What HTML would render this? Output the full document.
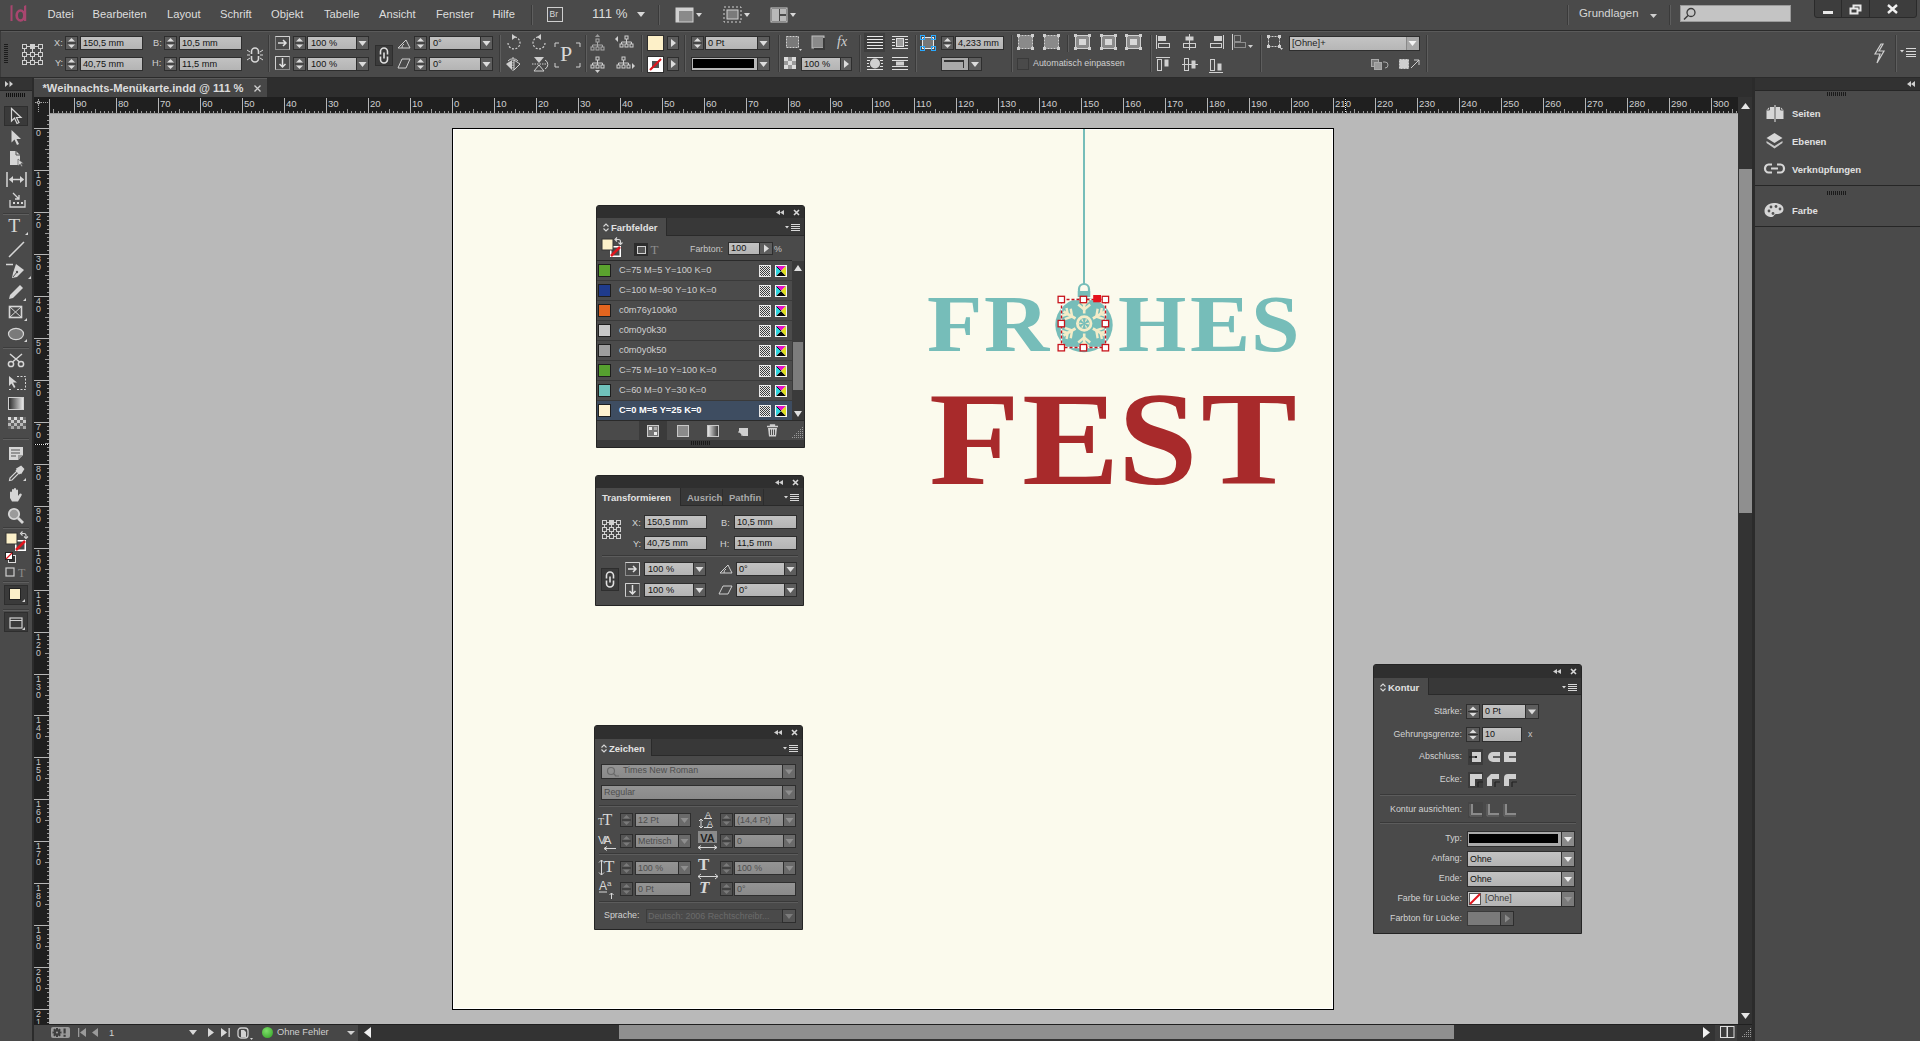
<!DOCTYPE html>
<html><head><meta charset="utf-8"><title>InDesign</title>
<style>
html,body{margin:0;padding:0;width:1920px;height:1041px;overflow:hidden;background:#4a4a4a;font-family:"Liberation Sans",sans-serif}
body>div{position:absolute}
svg{overflow:visible}
</style></head><body>
<div style="left:0px;top:0px;width:1920px;height:1041px;background:#4a4a4a"></div>
<div style="left:0px;top:0px;width:1920px;height:30px;background:#4a4a4a"></div>
<div style="left:0px;top:30px;width:1920px;height:1px;background:#2b2b2b"></div>
<svg style="position:absolute;left:9px;top:4px;" width="20" height="18" viewBox="0 0 20 18"><path d="M1.5 1.5L3.5 1V17H1.5Z" fill="#a8466f"/><ellipse cx="11.5" cy="11.5" rx="3.8" ry="5" fill="none" stroke="#a8466f" stroke-width="2.6"/><path d="M15 2L17.2 1V17H15Z" fill="#a8466f"/></svg>
<div style="left:47.5px;top:7.87px;font:normal 11.2px 'Liberation Sans', sans-serif;color:#dedede;white-space:nowrap;line-height:normal;">Datei</div>
<div style="left:92.5px;top:7.87px;font:normal 11.2px 'Liberation Sans', sans-serif;color:#dedede;white-space:nowrap;line-height:normal;">Bearbeiten</div>
<div style="left:167px;top:7.87px;font:normal 11.2px 'Liberation Sans', sans-serif;color:#dedede;white-space:nowrap;line-height:normal;">Layout</div>
<div style="left:220px;top:7.87px;font:normal 11.2px 'Liberation Sans', sans-serif;color:#dedede;white-space:nowrap;line-height:normal;">Schrift</div>
<div style="left:271px;top:7.87px;font:normal 11.2px 'Liberation Sans', sans-serif;color:#dedede;white-space:nowrap;line-height:normal;">Objekt</div>
<div style="left:324px;top:7.87px;font:normal 11.2px 'Liberation Sans', sans-serif;color:#dedede;white-space:nowrap;line-height:normal;">Tabelle</div>
<div style="left:379px;top:7.87px;font:normal 11.2px 'Liberation Sans', sans-serif;color:#dedede;white-space:nowrap;line-height:normal;">Ansicht</div>
<div style="left:436px;top:7.87px;font:normal 11.2px 'Liberation Sans', sans-serif;color:#dedede;white-space:nowrap;line-height:normal;">Fenster</div>
<div style="left:492.5px;top:7.87px;font:normal 11.2px 'Liberation Sans', sans-serif;color:#dedede;white-space:nowrap;line-height:normal;">Hilfe</div>
<div style="left:531px;top:5px;width:1px;height:20px;background:#3a3a3a"></div>
<div style="left:532px;top:5px;width:1px;height:20px;background:#5e5e5e"></div>
<div style="left:547px;top:7px;width:16px;height:15px;border:1px solid #cfcfcf;box-sizing:border-box"></div>
<div style="left:549.5px;top:9.15px;font:normal 8.5px 'Liberation Sans', sans-serif;color:#d8d8d8;white-space:nowrap;line-height:normal;">Br</div>
<div style="left:592px;top:6.13px;font:normal 13.2px 'Liberation Sans', sans-serif;color:#dcdcdc;white-space:nowrap;line-height:normal;">111 %</div>
<svg style="position:absolute;left:637px;top:12px;" width="8" height="6" viewBox="0 0 8 6"><path d="M0 0H8L4 5Z" fill="#d8d8d8"/></svg>
<div style="left:658px;top:5px;width:1px;height:20px;background:#3a3a3a"></div>
<div style="left:659px;top:5px;width:1px;height:20px;background:#5e5e5e"></div>
<svg style="position:absolute;left:675px;top:6px;" width="28" height="18" viewBox="0 0 28 18"><rect x="1" y="2" width="17" height="14" fill="#8a8a8a" stroke="#d0d0d0"/><rect x="1" y="2" width="17" height="3" fill="#d0d0d0"/><rect x="1" y="2" width="3" height="14" fill="#d0d0d0"/><path d="M21 7H27L24 11Z" fill="#d8d8d8"/></svg>
<svg style="position:absolute;left:723px;top:6px;" width="28" height="18" viewBox="0 0 28 18"><rect x="1" y="1" width="17" height="15" fill="none" stroke="#d0d0d0" stroke-dasharray="2 2"/><rect x="4" y="4" width="11" height="9" fill="#7a7a7a" stroke="#d0d0d0"/><path d="M21 7H27L24 11Z" fill="#d8d8d8"/></svg>
<svg style="position:absolute;left:770px;top:6px;" width="28" height="18" viewBox="0 0 28 18"><rect x="1" y="2" width="16" height="14" fill="none" stroke="#d0d0d0"/><rect x="2" y="3" width="7" height="12" fill="#b8b8b8"/><rect x="10" y="3" width="6" height="5" fill="#b8b8b8"/><rect x="10" y="10" width="6" height="5" fill="#b8b8b8"/><path d="M20 7H26L23 11Z" fill="#d8d8d8"/></svg>
<div style="left:1567px;top:5px;width:1px;height:20px;background:#3a3a3a"></div>
<div style="left:1568px;top:5px;width:1px;height:20px;background:#5e5e5e"></div>
<div style="left:1579px;top:6.92px;font:normal 11.4px 'Liberation Sans', sans-serif;color:#d6d6d6;white-space:nowrap;line-height:normal;">Grundlagen</div>
<svg style="position:absolute;left:1650px;top:14px;" width="7" height="4" viewBox="0 0 7 4"><path d="M0 0H7L3.5 4Z" fill="#d0d0d0"/></svg>
<div style="left:1669px;top:5px;width:1px;height:20px;background:#3a3a3a"></div>
<div style="left:1670px;top:5px;width:1px;height:20px;background:#5e5e5e"></div>
<div style="left:1680px;top:5px;width:111px;height:17px;background:#c4c4c4;border:1px solid #9a9a9a;box-sizing:border-box"></div>
<svg style="position:absolute;left:1683px;top:7px;" width="14" height="14" viewBox="0 0 14 14"><circle cx="8" cy="5.5" r="4" fill="none" stroke="#3a3a3a" stroke-width="1.3"/><path d="M5 8.5L1 12.5" stroke="#3a3a3a" stroke-width="1.5"/></svg>
<div style="left:1814px;top:-3px;width:103px;height:21px;background:#3d3d3d;border:1px solid #2a2a2a;border-radius:3px;box-sizing:border-box"></div>
<div style="left:1841px;top:-3px;width:1px;height:21px;background:#2a2a2a"></div>
<div style="left:1869px;top:-3px;width:1px;height:21px;background:#2a2a2a"></div>
<div style="left:1823px;top:11px;width:10px;height:3px;background:#e8e8e8"></div>
<svg style="position:absolute;left:1849px;top:4px;" width="13" height="11" viewBox="0 0 13 11"><rect x="4.5" y="1.5" width="7" height="5" fill="none" stroke="#e8e8e8" stroke-width="2"/><rect x="1.5" y="4.5" width="7" height="5" fill="#3d3d3d" stroke="#e8e8e8" stroke-width="2"/></svg>
<svg style="position:absolute;left:1887px;top:4px;" width="11" height="10" viewBox="0 0 11 10"><path d="M1 1L10 9M10 1L1 9" stroke="#f0f0f0" stroke-width="2.4"/></svg>
<div style="left:0px;top:31px;width:1920px;height:46px;background:#4a4a4a"></div>
<div style="left:0px;top:31px;width:1920px;height:1px;background:#5a5a5a"></div>
<div style="left:0px;top:77px;width:1920px;height:1px;background:#2b2b2b"></div>
<div style="left:0px;top:31px;width:1px;height:46px;background:#3a3a3a"></div>
<svg style="position:absolute;left:4px;top:44px;" width="4" height="19" viewBox="0 0 4 19"><rect x="0" y="0" width="4" height="1" fill="#1c1c1c"/><rect x="0" y="2" width="4" height="1" fill="#1c1c1c"/><rect x="0" y="4" width="4" height="1" fill="#1c1c1c"/><rect x="0" y="6" width="4" height="1" fill="#1c1c1c"/><rect x="0" y="8" width="4" height="1" fill="#1c1c1c"/><rect x="0" y="10" width="4" height="1" fill="#1c1c1c"/><rect x="0" y="12" width="4" height="1" fill="#1c1c1c"/><rect x="0" y="14" width="4" height="1" fill="#1c1c1c"/><rect x="0" y="16" width="4" height="1" fill="#1c1c1c"/><rect x="0" y="18" width="4" height="1" fill="#1c1c1c"/></svg>
<svg style="position:absolute;left:22px;top:44px;" width="21" height="21" viewBox="0 0 21 21"><rect x="0.5" y="0.5" width="4" height="4" fill="none" stroke="#d0d0d0"/><rect x="0.5" y="8.5" width="4" height="4" fill="none" stroke="#d0d0d0"/><rect x="0.5" y="16.5" width="4" height="4" fill="none" stroke="#d0d0d0"/><rect x="8.5" y="0.5" width="4" height="4" fill="#d0d0d0" stroke="#d0d0d0"/><rect x="8.5" y="8.5" width="4" height="4" fill="none" stroke="#d0d0d0"/><rect x="8.5" y="16.5" width="4" height="4" fill="none" stroke="#d0d0d0"/><rect x="16.5" y="0.5" width="4" height="4" fill="none" stroke="#d0d0d0"/><rect x="16.5" y="8.5" width="4" height="4" fill="none" stroke="#d0d0d0"/><rect x="16.5" y="16.5" width="4" height="4" fill="none" stroke="#d0d0d0"/><path d="M4.5 2.5H8.5M12.5 2.5H16.5" stroke="#d0d0d0"/><path d="M4.5 10.5H8.5M12.5 10.5H16.5" stroke="#d0d0d0"/><path d="M4.5 18.5H8.5M12.5 18.5H16.5" stroke="#d0d0d0"/><path d="M2.5 4.5V8.5M2.5 12.5V16.5" stroke="#d0d0d0"/><path d="M10.5 4.5V8.5M10.5 12.5V16.5" stroke="#d0d0d0"/><path d="M18.5 4.5V8.5M18.5 12.5V16.5" stroke="#d0d0d0"/></svg>
<div style="left:54px;top:37.50px;font:normal 9.2px 'Liberation Sans', sans-serif;color:#d0d0d0;white-space:nowrap;line-height:normal;">X:</div>
<div style="left:55px;top:58.00px;font:normal 9.2px 'Liberation Sans', sans-serif;color:#d0d0d0;white-space:nowrap;line-height:normal;">Y:</div>
<div style="left:65px;top:36px;width:13px;height:14px;background:#5d5d5d;border:1px solid #2e2e2e;box-sizing:border-box"></div>
<svg style="position:absolute;left:65px;top:36px;" width="13" height="14" viewBox="0 0 13 14"><path d="M3.0 5.5L6.5 2.0L10.0 5.5Z" fill="#dcdcdc"/><path d="M3.0 8.5L6.5 12.0L10.0 8.5Z" fill="#dcdcdc"/><path d="M2 7.0H11" stroke="#2e2e2e"/></svg>
<div style="left:65px;top:57px;width:13px;height:14px;background:#5d5d5d;border:1px solid #2e2e2e;box-sizing:border-box"></div>
<svg style="position:absolute;left:65px;top:57px;" width="13" height="14" viewBox="0 0 13 14"><path d="M3.0 5.5L6.5 2.0L10.0 5.5Z" fill="#dcdcdc"/><path d="M3.0 8.5L6.5 12.0L10.0 8.5Z" fill="#dcdcdc"/><path d="M2 7.0H11" stroke="#2e2e2e"/></svg>
<div style="left:80px;top:36px;width:63px;height:14px;background:linear-gradient(#c2c2c2,#b4b4b4);border:1px solid #2e2e2e;box-sizing:border-box"></div>
<div style="left:83px;top:37.54px;font:normal 9.2px 'Liberation Sans', sans-serif;color:#121212;white-space:nowrap;line-height:normal;">150,5 mm</div>
<div style="left:80px;top:57px;width:63px;height:14px;background:linear-gradient(#c2c2c2,#b4b4b4);border:1px solid #2e2e2e;box-sizing:border-box"></div>
<div style="left:83px;top:58.54px;font:normal 9.2px 'Liberation Sans', sans-serif;color:#121212;white-space:nowrap;line-height:normal;">40,75 mm</div>
<div style="left:153px;top:37.50px;font:normal 9.2px 'Liberation Sans', sans-serif;color:#d0d0d0;white-space:nowrap;line-height:normal;">B:</div>
<div style="left:152px;top:58.00px;font:normal 9.2px 'Liberation Sans', sans-serif;color:#d0d0d0;white-space:nowrap;line-height:normal;">H:</div>
<div style="left:164px;top:36px;width:13px;height:14px;background:#5d5d5d;border:1px solid #2e2e2e;box-sizing:border-box"></div>
<svg style="position:absolute;left:164px;top:36px;" width="13" height="14" viewBox="0 0 13 14"><path d="M3.0 5.5L6.5 2.0L10.0 5.5Z" fill="#dcdcdc"/><path d="M3.0 8.5L6.5 12.0L10.0 8.5Z" fill="#dcdcdc"/><path d="M2 7.0H11" stroke="#2e2e2e"/></svg>
<div style="left:164px;top:57px;width:13px;height:14px;background:#5d5d5d;border:1px solid #2e2e2e;box-sizing:border-box"></div>
<svg style="position:absolute;left:164px;top:57px;" width="13" height="14" viewBox="0 0 13 14"><path d="M3.0 5.5L6.5 2.0L10.0 5.5Z" fill="#dcdcdc"/><path d="M3.0 8.5L6.5 12.0L10.0 8.5Z" fill="#dcdcdc"/><path d="M2 7.0H11" stroke="#2e2e2e"/></svg>
<div style="left:179px;top:36px;width:63px;height:14px;background:linear-gradient(#c2c2c2,#b4b4b4);border:1px solid #2e2e2e;box-sizing:border-box"></div>
<div style="left:182px;top:37.54px;font:normal 9.2px 'Liberation Sans', sans-serif;color:#121212;white-space:nowrap;line-height:normal;">10,5 mm</div>
<div style="left:179px;top:57px;width:63px;height:14px;background:linear-gradient(#c2c2c2,#b4b4b4);border:1px solid #2e2e2e;box-sizing:border-box"></div>
<div style="left:182px;top:58.54px;font:normal 9.2px 'Liberation Sans', sans-serif;color:#121212;white-space:nowrap;line-height:normal;">11,5 mm</div>
<svg style="position:absolute;left:247px;top:47px;" width="16" height="16" viewBox="0 0 16 16"><path d="M4.5 7V4.5A3.5 3.5 0 0 1 11.5 4.5V7M4.5 9V11.5A3.5 3.5 0 0 0 11.5 11.5V9" fill="none" stroke="#d8d8d8" stroke-width="1.6"/><path d="M0 3L3 5M0 13L3 11M16 3L13 5M16 13L13 11M0 8H3M13 8H16" stroke="#d8d8d8"/></svg>
<div style="left:268px;top:35px;width:1px;height:37px;background:#3a3a3a"></div>
<div style="left:269px;top:35px;width:1px;height:37px;background:#5e5e5e"></div>
<svg style="position:absolute;left:275px;top:36px;" width="15" height="14" viewBox="0 0 15 14"><rect x="0.5" y="0.5" width="14" height="13" fill="none" stroke="#d0d0d0" stroke-dasharray="1 1"/><path d="M0.5 0.5H14.5V13.5" fill="none" stroke="#d0d0d0"/><path d="M3 7H11M8 4L11 7L8 10" stroke="#e0e0e0" stroke-width="1.5" fill="none"/></svg>
<svg style="position:absolute;left:275px;top:56px;" width="15" height="14" viewBox="0 0 15 14"><rect x="0.5" y="0.5" width="14" height="13" fill="none" stroke="#d0d0d0" stroke-dasharray="1 1"/><path d="M0.5 13.5V0.5H14.5" fill="none" stroke="#d0d0d0"/><path d="M7.5 2V11M4.5 8L7.5 11L10.5 8" stroke="#e0e0e0" stroke-width="1.5" fill="none"/></svg>
<div style="left:293px;top:36px;width:13px;height:14px;background:#5d5d5d;border:1px solid #2e2e2e;box-sizing:border-box"></div>
<svg style="position:absolute;left:293px;top:36px;" width="13" height="14" viewBox="0 0 13 14"><path d="M3.0 5.5L6.5 2.0L10.0 5.5Z" fill="#dcdcdc"/><path d="M3.0 8.5L6.5 12.0L10.0 8.5Z" fill="#dcdcdc"/><path d="M2 7.0H11" stroke="#2e2e2e"/></svg>
<div style="left:293px;top:57px;width:13px;height:14px;background:#5d5d5d;border:1px solid #2e2e2e;box-sizing:border-box"></div>
<svg style="position:absolute;left:293px;top:57px;" width="13" height="14" viewBox="0 0 13 14"><path d="M3.0 5.5L6.5 2.0L10.0 5.5Z" fill="#dcdcdc"/><path d="M3.0 8.5L6.5 12.0L10.0 8.5Z" fill="#dcdcdc"/><path d="M2 7.0H11" stroke="#2e2e2e"/></svg>
<div style="left:307px;top:36px;width:50px;height:14px;background:linear-gradient(#c2c2c2,#b4b4b4);border:1px solid #2e2e2e;box-sizing:border-box"></div>
<div style="left:311px;top:37.54px;font:normal 9.2px 'Liberation Sans', sans-serif;color:#121212;white-space:nowrap;line-height:normal;">100 %</div>
<div style="left:356px;top:36px;width:13px;height:14px;background:#5d5d5d;border:1px solid #2e2e2e;box-sizing:border-box"></div>
<svg style="position:absolute;left:356px;top:36px;" width="13" height="14" viewBox="0 0 13 14"><path d="M2.5 5.0H10.5L6.5 10.0Z" fill="#dcdcdc"/></svg>
<div style="left:307px;top:57px;width:50px;height:14px;background:linear-gradient(#c2c2c2,#b4b4b4);border:1px solid #2e2e2e;box-sizing:border-box"></div>
<div style="left:311px;top:58.54px;font:normal 9.2px 'Liberation Sans', sans-serif;color:#121212;white-space:nowrap;line-height:normal;">100 %</div>
<div style="left:356px;top:57px;width:13px;height:14px;background:#5d5d5d;border:1px solid #2e2e2e;box-sizing:border-box"></div>
<svg style="position:absolute;left:356px;top:57px;" width="13" height="14" viewBox="0 0 13 14"><path d="M2.5 5.0H10.5L6.5 10.0Z" fill="#dcdcdc"/></svg>
<div style="left:375px;top:45px;width:18px;height:21px;background:#3b3b3b;border:1px solid #2e2e2e;box-sizing:border-box"></div>
<svg style="position:absolute;left:375px;top:45px;" width="18" height="21" viewBox="0 0 18 21"><path d="M5.5 9.5V6.5A3.5 3.5 0 0 1 12.5 6.5V9.5M5.5 11.5V14.5A3.5 3.5 0 0 0 12.5 14.5V11.5M9 7.5V13.5" fill="none" stroke="#e0e0e0" stroke-width="1.6"/></svg>
<svg style="position:absolute;left:397px;top:38px;" width="14" height="11" viewBox="0 0 14 11"><path d="M1 10H13L9 2Z" fill="none" stroke="#d0d0d0"/><path d="M5 10A4 4 0 0 1 7 6" fill="none" stroke="#d0d0d0"/></svg>
<svg style="position:absolute;left:397px;top:58px;" width="14" height="11" viewBox="0 0 14 11"><path d="M1 10L5 1H13L9 10Z" fill="none" stroke="#d0d0d0"/></svg>
<div style="left:414px;top:36px;width:13px;height:14px;background:#5d5d5d;border:1px solid #2e2e2e;box-sizing:border-box"></div>
<svg style="position:absolute;left:414px;top:36px;" width="13" height="14" viewBox="0 0 13 14"><path d="M3.0 5.5L6.5 2.0L10.0 5.5Z" fill="#dcdcdc"/><path d="M3.0 8.5L6.5 12.0L10.0 8.5Z" fill="#dcdcdc"/><path d="M2 7.0H11" stroke="#2e2e2e"/></svg>
<div style="left:414px;top:57px;width:13px;height:14px;background:#5d5d5d;border:1px solid #2e2e2e;box-sizing:border-box"></div>
<svg style="position:absolute;left:414px;top:57px;" width="13" height="14" viewBox="0 0 13 14"><path d="M3.0 5.5L6.5 2.0L10.0 5.5Z" fill="#dcdcdc"/><path d="M3.0 8.5L6.5 12.0L10.0 8.5Z" fill="#dcdcdc"/><path d="M2 7.0H11" stroke="#2e2e2e"/></svg>
<div style="left:429px;top:36px;width:52px;height:14px;background:linear-gradient(#c2c2c2,#b4b4b4);border:1px solid #2e2e2e;box-sizing:border-box"></div>
<div style="left:433px;top:37.54px;font:normal 9.2px 'Liberation Sans', sans-serif;color:#121212;white-space:nowrap;line-height:normal;">0°</div>
<div style="left:480px;top:36px;width:13px;height:14px;background:#5d5d5d;border:1px solid #2e2e2e;box-sizing:border-box"></div>
<svg style="position:absolute;left:480px;top:36px;" width="13" height="14" viewBox="0 0 13 14"><path d="M2.5 5.0H10.5L6.5 10.0Z" fill="#dcdcdc"/></svg>
<div style="left:429px;top:57px;width:52px;height:14px;background:linear-gradient(#c2c2c2,#b4b4b4);border:1px solid #2e2e2e;box-sizing:border-box"></div>
<div style="left:433px;top:58.54px;font:normal 9.2px 'Liberation Sans', sans-serif;color:#121212;white-space:nowrap;line-height:normal;">0°</div>
<div style="left:480px;top:57px;width:13px;height:14px;background:#5d5d5d;border:1px solid #2e2e2e;box-sizing:border-box"></div>
<svg style="position:absolute;left:480px;top:57px;" width="13" height="14" viewBox="0 0 13 14"><path d="M2.5 5.0H10.5L6.5 10.0Z" fill="#dcdcdc"/></svg>
<div style="left:499px;top:35px;width:1px;height:37px;background:#3a3a3a"></div>
<div style="left:500px;top:35px;width:1px;height:37px;background:#5e5e5e"></div>
<svg style="position:absolute;left:505px;top:34px;" width="17" height="16" viewBox="0 0 17 16"><path d="M3 9A6 6 0 1 0 8 3" fill="none" stroke="#cfcfcf" stroke-dasharray="2 1.5" stroke-width="1.2"/><path d="M7 0L11 3L7 6Z" fill="#cfcfcf"/></svg>
<svg style="position:absolute;left:531px;top:34px;" width="17" height="16" viewBox="0 0 17 16"><path d="M14 9A6 6 0 1 1 9 3" fill="none" stroke="#cfcfcf" stroke-dasharray="2 1.5" stroke-width="1.2"/><path d="M10 0L6 3L10 6Z" fill="#cfcfcf"/></svg>
<svg style="position:absolute;left:505px;top:56px;" width="17" height="17" viewBox="0 0 17 17"><path d="M8 1V16" stroke="#cfcfcf" stroke-dasharray="1.5 1"/><path d="M1 8L7 4V14Z" fill="#cfcfcf"/><path d="M15 8L9 4V14Z" fill="none" stroke="#cfcfcf"/><path d="M3 5A6 5 0 0 1 13 5" fill="none" stroke="#cfcfcf"/></svg>
<svg style="position:absolute;left:531px;top:56px;" width="17" height="17" viewBox="0 0 17 17"><path d="M1 8H16" stroke="#cfcfcf" stroke-dasharray="1.5 1"/><path d="M3 1H13L8 7Z" fill="#cfcfcf"/><path d="M3 15H13L8 9Z" fill="none" stroke="#cfcfcf"/><path d="M14 4A5 5 0 0 1 14 13" fill="none" stroke="#cfcfcf"/></svg>
<svg style="position:absolute;left:554px;top:42px;" width="27" height="26" viewBox="0 0 27 26"><path d="M1 5V1H5M22 1H26V5M1 21V25H5M22 25H26V21" fill="none" stroke="#d0d0d0"/></svg>
<div style="left:560px;top:40.72px;font:normal 22px 'Liberation Serif', serif;color:#d8d8d8;white-space:nowrap;line-height:normal;">P</div>
<div style="left:585px;top:35px;width:1px;height:37px;background:#3a3a3a"></div>
<div style="left:586px;top:35px;width:1px;height:37px;background:#5e5e5e"></div>
<svg style="position:absolute;left:590px;top:34px;" width="16" height="18" viewBox="0 0 16 18"><path d="M5 3H10L7.5 0Z" fill="#9a9a9a"/><rect x="6" y="5" width="3" height="3" fill="none" stroke="#aaa"/><path d="M7.5 8V10M2.5 13V11H12.5V13M7.5 10V13" stroke="#aaa" fill="none"/><rect x="1" y="13" width="3" height="3" fill="none" stroke="#aaa"/><rect x="6" y="13" width="3" height="3" fill="none" stroke="#aaa"/><rect x="11" y="13" width="3" height="3" fill="none" stroke="#aaa"/></svg>
<svg style="position:absolute;left:615px;top:35px;" width="21" height="15" viewBox="0 0 21 15"><path d="M0 4L3 1V7Z" fill="#cfcfcf"/><rect x="10" y="1" width="3" height="3" fill="none" stroke="#cfcfcf"/><path d="M11.5 4V6M6.5 9V7H16.5V9M11.5 6V9" stroke="#cfcfcf" fill="none"/><rect x="5" y="9" width="3" height="3" fill="none" stroke="#cfcfcf"/><rect x="10" y="9" width="3" height="3" fill="none" stroke="#cfcfcf"/><rect x="15" y="9" width="3" height="3" fill="none" stroke="#cfcfcf"/></svg>
<svg style="position:absolute;left:590px;top:56px;" width="16" height="18" viewBox="0 0 16 18"><rect x="6" y="1" width="3" height="3" fill="none" stroke="#cfcfcf"/><path d="M7.5 4V6M2.5 9V7H12.5V9M7.5 6V9" stroke="#cfcfcf" fill="none"/><rect x="1" y="9" width="3" height="3" fill="none" stroke="#cfcfcf"/><rect x="6" y="9" width="3" height="3" fill="none" stroke="#cfcfcf"/><rect x="11" y="9" width="3" height="3" fill="none" stroke="#cfcfcf"/><path d="M5 14H10L7.5 17Z" fill="#cfcfcf"/></svg>
<svg style="position:absolute;left:615px;top:56px;" width="21" height="15" viewBox="0 0 21 15"><rect x="7" y="1" width="3" height="3" fill="none" stroke="#cfcfcf"/><path d="M8.5 4V6M3.5 9V7H13.5V9M8.5 6V9" stroke="#cfcfcf" fill="none"/><rect x="2" y="9" width="3" height="3" fill="none" stroke="#cfcfcf"/><rect x="7" y="9" width="3" height="3" fill="none" stroke="#cfcfcf"/><rect x="12" y="9" width="3" height="3" fill="none" stroke="#cfcfcf"/><path d="M17 7L20 10L17 13Z" fill="#cfcfcf"/></svg>
<div style="left:641px;top:35px;width:1px;height:37px;background:#3a3a3a"></div>
<div style="left:642px;top:35px;width:1px;height:37px;background:#5e5e5e"></div>
<div style="left:647px;top:35px;width:17px;height:16px;background:#fdf0c8;border:1px solid #2e2e2e;box-sizing:border-box"></div>
<div style="left:667px;top:36px;width:12px;height:14px;background:#5d5d5d;border:1px solid #2e2e2e;box-sizing:border-box"></div>
<svg style="position:absolute;left:667px;top:36px;" width="12" height="14" viewBox="0 0 12 14"><path d="M4.0 3.0V11.0L9.0 7.0Z" fill="#dcdcdc"/></svg>
<div style="left:647px;top:56px;width:17px;height:17px;background:#fff;border:1px solid #2e2e2e;box-sizing:border-box"></div>
<svg style="position:absolute;left:647px;top:56px;" width="17" height="17" viewBox="0 0 17 17"><rect x="5" y="5" width="7" height="7" fill="#555"/><path d="M3 14L14 3" stroke="#e0161e" stroke-width="2.2"/></svg>
<div style="left:667px;top:57px;width:12px;height:14px;background:#5d5d5d;border:1px solid #2e2e2e;box-sizing:border-box"></div>
<svg style="position:absolute;left:667px;top:57px;" width="12" height="14" viewBox="0 0 12 14"><path d="M4.0 3.0V11.0L9.0 7.0Z" fill="#dcdcdc"/></svg>
<div style="left:684px;top:35px;width:1px;height:37px;background:#3a3a3a"></div>
<div style="left:685px;top:35px;width:1px;height:37px;background:#5e5e5e"></div>
<div style="left:691px;top:36px;width:13px;height:14px;background:#5d5d5d;border:1px solid #2e2e2e;box-sizing:border-box"></div>
<svg style="position:absolute;left:691px;top:36px;" width="13" height="14" viewBox="0 0 13 14"><path d="M3.0 5.5L6.5 2.0L10.0 5.5Z" fill="#dcdcdc"/><path d="M3.0 8.5L6.5 12.0L10.0 8.5Z" fill="#dcdcdc"/><path d="M2 7.0H11" stroke="#2e2e2e"/></svg>
<div style="left:705px;top:36px;width:53px;height:14px;background:linear-gradient(#c2c2c2,#b4b4b4);border:1px solid #2e2e2e;box-sizing:border-box"></div>
<div style="left:708px;top:37.54px;font:normal 9.2px 'Liberation Sans', sans-serif;color:#121212;white-space:nowrap;line-height:normal;">0 Pt</div>
<div style="left:757px;top:36px;width:13px;height:14px;background:#5d5d5d;border:1px solid #2e2e2e;box-sizing:border-box"></div>
<svg style="position:absolute;left:757px;top:36px;" width="13" height="14" viewBox="0 0 13 14"><path d="M2.5 5.0H10.5L6.5 10.0Z" fill="#dcdcdc"/></svg>
<div style="left:691px;top:57px;width:67px;height:14px;background:#b8b8b8;border:1px solid #2e2e2e;box-sizing:border-box"></div>
<div style="left:693px;top:59px;width:61px;height:9px;background:#000"></div>
<div style="left:757px;top:57px;width:13px;height:14px;background:#5d5d5d;border:1px solid #2e2e2e;box-sizing:border-box"></div>
<svg style="position:absolute;left:757px;top:57px;" width="13" height="14" viewBox="0 0 13 14"><path d="M2.5 5.0H10.5L6.5 10.0Z" fill="#dcdcdc"/></svg>
<div style="left:778px;top:35px;width:1px;height:37px;background:#3a3a3a"></div>
<div style="left:779px;top:35px;width:1px;height:37px;background:#5e5e5e"></div>
<svg style="position:absolute;left:785px;top:35px;" width="18" height="16" viewBox="0 0 18 16"><rect x="1.5" y="1.5" width="12" height="11" fill="#7a7a7a" stroke="#d0d0d0" stroke-dasharray="2 1"/><path d="M14 14H17L15.5 16Z" fill="#d0d0d0"/></svg>
<svg style="position:absolute;left:811px;top:35px;" width="16" height="16" viewBox="0 0 16 16"><rect x="1" y="1" width="12" height="12" fill="#8a8a8a" stroke="#c0c0c0"/><path d="M13 3V14H3" stroke="#3a3a3a" stroke-width="2" fill="none"/></svg>
<div style="left:837px;top:34.46px;font:normal 14px 'Liberation Serif', serif;color:#d0d0d0;white-space:nowrap;line-height:normal;"><i>fx</i></div>
<svg style="position:absolute;left:784px;top:57px;" width="12" height="12" viewBox="0 0 12 12"><rect x="0" y="0" width="12" height="12" fill="#9a9a9a"/><rect x="0" y="0" width="4" height="4" fill="#dcdcdc"/><rect x="8" y="0" width="4" height="4" fill="#dcdcdc"/><rect x="4" y="4" width="4" height="4" fill="#dcdcdc"/><rect x="0" y="8" width="4" height="4" fill="#dcdcdc"/><rect x="8" y="8" width="4" height="4" fill="#dcdcdc"/></svg>
<div style="left:801px;top:57px;width:40px;height:14px;background:linear-gradient(#c2c2c2,#b4b4b4);border:1px solid #2e2e2e;box-sizing:border-box"></div>
<div style="left:804px;top:58.54px;font:normal 9.2px 'Liberation Sans', sans-serif;color:#121212;white-space:nowrap;line-height:normal;">100 %</div>
<div style="left:840px;top:57px;width:12px;height:14px;background:#5d5d5d;border:1px solid #2e2e2e;box-sizing:border-box"></div>
<svg style="position:absolute;left:840px;top:57px;" width="12" height="14" viewBox="0 0 12 14"><path d="M4.0 3.0V11.0L9.0 7.0Z" fill="#dcdcdc"/></svg>
<div style="left:859px;top:35px;width:1px;height:37px;background:#3a3a3a"></div>
<div style="left:860px;top:35px;width:1px;height:37px;background:#5e5e5e"></div>
<div style="left:864px;top:33px;width:21px;height:19px;background:#3e3e3e"></div>
<svg style="position:absolute;left:866px;top:35px;" width="18" height="15" viewBox="0 0 18 15"><path d="M1 1.5H17M1 4.5H17M1 7.5H17M1 10.5H17M1 13.5H17" stroke="#e8e8e8"/></svg>
<svg style="position:absolute;left:891px;top:35px;" width="18" height="15" viewBox="0 0 18 15"><path d="M1 1.5H17M1 13.5H17M1 4.5H4M14 4.5H17M1 7.5H4M14 7.5H17M1 10.5H4M14 10.5H17" stroke="#e0e0e0"/><rect x="5.5" y="3.5" width="7" height="8" fill="#9a9a9a" stroke="#e0e0e0"/></svg>
<svg style="position:absolute;left:866px;top:56px;" width="18" height="15" viewBox="0 0 18 15"><path d="M1 1.5H17M1 13.5H17M1 4.5H4M14 4.5H17M1 7.5H3M15 7.5H17M1 10.5H4M14 10.5H17" stroke="#e0e0e0"/><ellipse cx="9" cy="7.5" rx="5" ry="5" fill="#d0d0d0"/></svg>
<svg style="position:absolute;left:891px;top:56px;" width="18" height="15" viewBox="0 0 18 15"><path d="M1 1.5H17M1 13.5H17M1 4.5H17M1 10.5H17" stroke="#e0e0e0"/><rect x="5" y="5.5" width="8" height="4" fill="#d0d0d0"/></svg>
<div style="left:915px;top:35px;width:1px;height:37px;background:#3a3a3a"></div>
<div style="left:916px;top:35px;width:1px;height:37px;background:#5e5e5e"></div>
<svg style="position:absolute;left:920px;top:35px;" width="16" height="16" viewBox="0 0 16 16"><rect x="2.5" y="2.5" width="11" height="11" fill="#777" stroke="#e8e8e8"/><rect x="0.5" y="0.5" width="4" height="4" fill="none" stroke="#2aa9ff"/><rect x="11.5" y="0.5" width="4" height="4" fill="none" stroke="#2aa9ff"/><rect x="0.5" y="11.5" width="4" height="4" fill="none" stroke="#2aa9ff"/><rect x="11.5" y="11.5" width="4" height="4" fill="none" stroke="#2aa9ff"/></svg>
<div style="left:941px;top:36px;width:13px;height:14px;background:#5d5d5d;border:1px solid #2e2e2e;box-sizing:border-box"></div>
<svg style="position:absolute;left:941px;top:36px;" width="13" height="14" viewBox="0 0 13 14"><path d="M3.0 5.5L6.5 2.0L10.0 5.5Z" fill="#dcdcdc"/><path d="M3.0 8.5L6.5 12.0L10.0 8.5Z" fill="#dcdcdc"/><path d="M2 7.0H11" stroke="#2e2e2e"/></svg>
<div style="left:955px;top:36px;width:49px;height:14px;background:linear-gradient(#c2c2c2,#b4b4b4);border:1px solid #2e2e2e;box-sizing:border-box"></div>
<div style="left:958px;top:37.54px;font:normal 9.2px 'Liberation Sans', sans-serif;color:#121212;white-space:nowrap;line-height:normal;">4,233 mm</div>
<div style="left:941px;top:57px;width:28px;height:14px;background:#a9a9a9;border:1px solid #2e2e2e;box-sizing:border-box"></div>
<div style="left:944px;top:60px;width:20px;height:1.5px;background:#333"></div>
<div style="left:962.5px;top:60px;width:1.5px;height:8px;background:#333"></div>
<div style="left:968px;top:57px;width:14px;height:14px;background:#5d5d5d;border:1px solid #2e2e2e;box-sizing:border-box"></div>
<svg style="position:absolute;left:968px;top:57px;" width="14" height="14" viewBox="0 0 14 14"><path d="M3.0 5.0H11.0L7.0 10.0Z" fill="#dcdcdc"/></svg>
<div style="left:1011px;top:35px;width:1px;height:37px;background:#3a3a3a"></div>
<div style="left:1012px;top:35px;width:1px;height:37px;background:#5e5e5e"></div>
<svg style="position:absolute;left:1017px;top:34px;" width="17" height="16" viewBox="0 0 17 16"><rect x="1.5" y="1.5" width="14" height="13" fill="#8a8a8a" stroke="#d0d0d0" stroke-dasharray="2 1"/><rect x="0" y="0" width="3" height="3" fill="#d0d0d0"/><rect x="14" y="0" width="3" height="3" fill="#d0d0d0"/><rect x="0" y="13" width="3" height="3" fill="#d0d0d0"/><rect x="14" y="13" width="3" height="3" fill="#d0d0d0"/></svg>
<svg style="position:absolute;left:1043px;top:34px;" width="17" height="16" viewBox="0 0 17 16"><rect x="1.5" y="1.5" width="14" height="13" fill="#8a8a8a" stroke="#d0d0d0" stroke-dasharray="2 1"/><rect x="0" y="0" width="3" height="3" fill="#d0d0d0"/><rect x="14" y="0" width="3" height="3" fill="#d0d0d0"/><rect x="0" y="13" width="3" height="3" fill="#d0d0d0"/><rect x="14" y="13" width="3" height="3" fill="#d0d0d0"/></svg>
<div style="left:1067px;top:35px;width:1px;height:17px;background:#3a3a3a"></div>
<div style="left:1068px;top:35px;width:1px;height:17px;background:#5e5e5e"></div>
<svg style="position:absolute;left:1074px;top:34px;" width="17" height="16" viewBox="0 0 17 16"><rect x="1.5" y="1.5" width="14" height="13" fill="#8a8a8a" stroke="#d0d0d0"/><rect x="0" y="0" width="3" height="3" fill="#d0d0d0"/><rect x="14" y="0" width="3" height="3" fill="#d0d0d0"/><rect x="0" y="13" width="3" height="3" fill="#d0d0d0"/><rect x="14" y="13" width="3" height="3" fill="#d0d0d0"/><rect x="5" y="5" width="7" height="6" fill="#d8d8d8"/></svg>
<svg style="position:absolute;left:1100px;top:34px;" width="17" height="16" viewBox="0 0 17 16"><rect x="1.5" y="1.5" width="14" height="13" fill="#8a8a8a" stroke="#d0d0d0"/><rect x="0" y="0" width="3" height="3" fill="#d0d0d0"/><rect x="14" y="0" width="3" height="3" fill="#d0d0d0"/><rect x="0" y="13" width="3" height="3" fill="#d0d0d0"/><rect x="14" y="13" width="3" height="3" fill="#d0d0d0"/><rect x="5" y="5" width="7" height="6" fill="#d8d8d8"/></svg>
<svg style="position:absolute;left:1125px;top:34px;" width="17" height="16" viewBox="0 0 17 16"><rect x="1.5" y="1.5" width="14" height="13" fill="#8a8a8a" stroke="#d0d0d0"/><rect x="0" y="0" width="3" height="3" fill="#d0d0d0"/><rect x="14" y="0" width="3" height="3" fill="#d0d0d0"/><rect x="0" y="13" width="3" height="3" fill="#d0d0d0"/><rect x="14" y="13" width="3" height="3" fill="#d0d0d0"/><rect x="5" y="5" width="7" height="6" fill="#d8d8d8"/></svg>
<div style="left:1017px;top:58px;width:12px;height:12px;background:#4a4a4a;border:1px solid #3a3a3a;box-sizing:border-box"></div>
<div style="left:1033px;top:58.27px;font:normal 8.9px 'Liberation Sans', sans-serif;color:#cfcfcf;white-space:nowrap;line-height:normal;">Automatisch einpassen</div>
<div style="left:1150px;top:35px;width:1px;height:37px;background:#3a3a3a"></div>
<div style="left:1151px;top:35px;width:1px;height:37px;background:#5e5e5e"></div>
<svg style="position:absolute;left:1156px;top:35px;" width="15" height="14" viewBox="0 0 15 14"><path d="M0.5 0V14" stroke="#d0d0d0"/><rect x="2.5" y="1.5" width="7" height="4" fill="#d0d0d0" stroke="#d0d0d0"/><rect x="2.5" y="8.5" width="11" height="4" fill="none" stroke="#d0d0d0"/></svg>
<svg style="position:absolute;left:1182px;top:34px;" width="15" height="16" viewBox="0 0 15 16"><path d="M7.5 0V16" stroke="#d0d0d0"/><rect x="3.5" y="2.5" width="8" height="4" fill="#d0d0d0"/><rect x="1.5" y="9.5" width="12" height="4" fill="none" stroke="#d0d0d0"/></svg>
<svg style="position:absolute;left:1209px;top:35px;" width="15" height="14" viewBox="0 0 15 14"><path d="M14.5 0V14" stroke="#d0d0d0"/><rect x="5.5" y="1.5" width="7" height="4" fill="#d0d0d0" stroke="#d0d0d0"/><rect x="1.5" y="8.5" width="11" height="4" fill="none" stroke="#d0d0d0"/></svg>
<svg style="position:absolute;left:1232px;top:34px;" width="21" height="16" viewBox="0 0 21 16"><path d="M0.5 0V16" stroke="#d0d0d0"/><rect x="2.5" y="1.5" width="6" height="6" fill="none" stroke="#d0d0d0" stroke-dasharray="1 1"/><rect x="2.5" y="8.5" width="11" height="5" fill="none" stroke="#d0d0d0" stroke-dasharray="1 1"/><path d="M16 11H21L18.5 14Z" fill="#d0d0d0"/></svg>
<svg style="position:absolute;left:1156px;top:57px;" width="15" height="15" viewBox="0 0 15 15"><path d="M0 0.5H14" stroke="#d0d0d0"/><rect x="1.5" y="2.5" width="4" height="11" fill="none" stroke="#d0d0d0"/><rect x="8.5" y="2.5" width="4" height="7" fill="#d0d0d0"/></svg>
<svg style="position:absolute;left:1182px;top:57px;" width="16" height="15" viewBox="0 0 16 15"><path d="M0 7.5H16" stroke="#d0d0d0"/><rect x="2.5" y="1.5" width="4" height="12" fill="none" stroke="#d0d0d0"/><rect x="9.5" y="3.5" width="4" height="8" fill="#d0d0d0"/></svg>
<svg style="position:absolute;left:1209px;top:57px;" width="15" height="16" viewBox="0 0 15 16"><path d="M0 15.5H14" stroke="#d0d0d0"/><rect x="1.5" y="2.5" width="4" height="11" fill="none" stroke="#d0d0d0"/><rect x="8.5" y="6.5" width="4" height="7" fill="#d0d0d0"/></svg>
<div style="left:1260px;top:35px;width:1px;height:37px;background:#3a3a3a"></div>
<div style="left:1261px;top:35px;width:1px;height:37px;background:#5e5e5e"></div>
<svg style="position:absolute;left:1267px;top:35px;" width="16" height="15" viewBox="0 0 16 15"><rect x="1.5" y="1.5" width="11" height="10" fill="none" stroke="#d0d0d0" stroke-dasharray="2 1"/><rect x="0" y="0" width="3" height="3" fill="#d0d0d0"/><rect x="11" y="0" width="3" height="3" fill="#d0d0d0"/><rect x="0" y="10" width="3" height="3" fill="#d0d0d0"/><rect x="11" y="10" width="3" height="3" fill="#d0d0d0"/><path d="M13 13H16L14.5 15Z" fill="#d0d0d0"/></svg>
<div style="left:1289px;top:36px;width:131px;height:15px;background:linear-gradient(#c4c4c4,#b6b6b6);border:1px solid #2e2e2e;box-sizing:border-box"></div>
<div style="left:1292px;top:37.36px;font:normal 9.4px 'Liberation Sans', sans-serif;color:#1e1e1e;white-space:nowrap;line-height:normal;">[Ohne]+</div>
<div style="left:1406px;top:37px;width:13px;height:13px;background:#a8a8a8;border-left:1px solid #888;box-sizing:border-box"></div>
<svg style="position:absolute;left:1406px;top:37px;" width="13" height="13" viewBox="0 0 13 13"><path d="M2.5 4H10.5L6.5 9Z" fill="#f4f4f4"/></svg>
<svg style="position:absolute;left:1371px;top:59px;" width="22" height="13" viewBox="0 0 22 13"><rect x="0.5" y="0.5" width="7" height="7" fill="#7a7a7a" stroke="#aaa"/><rect x="3.5" y="3.5" width="7" height="7" fill="#9a9a9a" stroke="#aaa"/><path d="M14 9A3 3 0 1 0 14 3L12 3" fill="none" stroke="#aaa"/></svg>
<svg style="position:absolute;left:1399px;top:59px;" width="22" height="13" viewBox="0 0 22 13"><rect x="0.5" y="0.5" width="9" height="9" fill="#cfcfcf" stroke="#cfcfcf" stroke-dasharray="2 1"/><path d="M12 9L20 1M15 1H20V6" fill="none" stroke="#cfcfcf"/></svg>
<div style="left:1426px;top:35px;width:1px;height:37px;background:#3a3a3a"></div>
<div style="left:1427px;top:35px;width:1px;height:37px;background:#5e5e5e"></div>
<svg style="position:absolute;left:1873px;top:44px;" width="13" height="19" viewBox="0 0 13 19"><path d="M8 0L2 10H7L4 19L11 7H6L10 0Z" fill="none" stroke="#d0d0d0" stroke-width="1.2"/></svg>
<div style="left:1895px;top:35px;width:1px;height:37px;background:#3a3a3a"></div>
<div style="left:1896px;top:35px;width:1px;height:37px;background:#5e5e5e"></div>
<svg style="position:absolute;left:1900px;top:48px;" width="16" height="9" viewBox="0 0 16 9"><path d="M0 2H4L2 4.5Z" fill="#d8d8d8"/><path d="M6 0.5H16M6 3.5H16M6 6.5H16M6 8.5H16" stroke="#d8d8d8"/></svg>
<div style="left:0px;top:78px;width:1755px;height:19px;background:#2e2e2e"></div>
<div style="left:34px;top:78px;width:233px;height:19px;background:#474747"></div>
<div style="left:34px;top:78px;width:233px;height:1px;background:#5a5a5a"></div>
<div style="left:42.5px;top:81.97px;font:bold 11.2px 'Liberation Sans', sans-serif;color:#dcdcdc;white-space:nowrap;line-height:normal;">*Weihnachts-Menükarte.indd @ 111 %</div>
<svg style="position:absolute;left:254px;top:85px;" width="7" height="7" viewBox="0 0 7 7"><path d="M0.5 0.5L6.5 6.5M6.5 0.5L0.5 6.5" stroke="#cfcfcf" stroke-width="1.3"/></svg>
<div style="left:0px;top:78px;width:32px;height:963px;background:#4a4a4a"></div>
<div style="left:32px;top:78px;width:2px;height:963px;background:#2b2b2b"></div>
<div style="left:0px;top:78px;width:32px;height:12px;background:#333333"></div>
<svg style="position:absolute;left:5px;top:81px;" width="8" height="6" viewBox="0 0 8 6"><path d="M0 0L3.5 3L0 6Z M4.5 0L8 3L4.5 6Z" fill="#cfcfcf"/></svg>
<div style="left:0px;top:90px;width:32px;height:1px;background:#262626"></div>
<svg style="position:absolute;left:6px;top:93px;" width="20" height="4" viewBox="0 0 20 4"><rect x="0" y="0" width="1" height="4" fill="#111"/><rect x="2" y="0" width="1" height="4" fill="#111"/><rect x="4" y="0" width="1" height="4" fill="#111"/><rect x="6" y="0" width="1" height="4" fill="#111"/><rect x="8" y="0" width="1" height="4" fill="#111"/><rect x="10" y="0" width="1" height="4" fill="#111"/><rect x="12" y="0" width="1" height="4" fill="#111"/><rect x="14" y="0" width="1" height="4" fill="#111"/><rect x="16" y="0" width="1" height="4" fill="#111"/><rect x="18" y="0" width="1" height="4" fill="#111"/></svg>
<div style="left:3px;top:213px;width:26px;height:1px;background:#3c3c3c"></div>
<div style="left:3px;top:214px;width:26px;height:1px;background:#5f5f5f"></div>
<div style="left:3px;top:347px;width:26px;height:1px;background:#3c3c3c"></div>
<div style="left:3px;top:348px;width:26px;height:1px;background:#5f5f5f"></div>
<div style="left:3px;top:438px;width:26px;height:1px;background:#3c3c3c"></div>
<div style="left:3px;top:439px;width:26px;height:1px;background:#5f5f5f"></div>
<div style="left:3px;top:527px;width:26px;height:1px;background:#3c3c3c"></div>
<div style="left:3px;top:528px;width:26px;height:1px;background:#5f5f5f"></div>
<div style="left:3px;top:581px;width:26px;height:1px;background:#3c3c3c"></div>
<div style="left:3px;top:582px;width:26px;height:1px;background:#5f5f5f"></div>
<div style="left:3px;top:609px;width:26px;height:1px;background:#3c3c3c"></div>
<div style="left:3px;top:610px;width:26px;height:1px;background:#5f5f5f"></div>
<div style="left:34px;top:97px;width:1704px;height:16px;background:#1f1f1f"></div>
<div style="left:34px;top:113px;width:1704px;height:1px;background:#9b9b9b"></div>
<div style="left:34px;top:113px;width:15px;height:911px;background:#1f1f1f"></div>
<div style="left:49px;top:113px;width:1px;height:911px;background:#b0b0b0"></div>
<svg style="position:absolute;left:34px;top:97px;" width="15" height="16" viewBox="0 0 15 16"><path d="M1 5.5H14M4.5 2V15" stroke="#aaa" stroke-dasharray="1 1"/><path d="M4.5 3.5L6.5 5.5L4.5 7.5L2.5 5.5Z" fill="none" stroke="#aaa" stroke-width="0.8"/></svg>
<div style="left:49px;top:99px;width:1px;height:14px;background:#aaa"></div>
<svg style="position:absolute;left:0;top:0" width="1920" height="120"><rect x="53" y="109" width="1" height="4" fill="#9a9a9a"/><rect x="58" y="111" width="1" height="2" fill="#9a9a9a"/><rect x="62" y="111" width="1" height="2" fill="#9a9a9a"/><rect x="66" y="111" width="1" height="2" fill="#9a9a9a"/><rect x="70" y="111" width="1" height="2" fill="#9a9a9a"/><rect x="74" y="98" width="1" height="15" fill="#b5b5b5"/><rect x="79" y="111" width="1" height="2" fill="#9a9a9a"/><rect x="83" y="111" width="1" height="2" fill="#9a9a9a"/><rect x="87" y="111" width="1" height="2" fill="#9a9a9a"/><rect x="91" y="111" width="1" height="2" fill="#9a9a9a"/><rect x="95" y="109" width="1" height="4" fill="#9a9a9a"/><rect x="100" y="111" width="1" height="2" fill="#9a9a9a"/><rect x="104" y="111" width="1" height="2" fill="#9a9a9a"/><rect x="108" y="111" width="1" height="2" fill="#9a9a9a"/><rect x="112" y="111" width="1" height="2" fill="#9a9a9a"/><rect x="116" y="98" width="1" height="15" fill="#b5b5b5"/><rect x="120" y="111" width="1" height="2" fill="#9a9a9a"/><rect x="125" y="111" width="1" height="2" fill="#9a9a9a"/><rect x="129" y="111" width="1" height="2" fill="#9a9a9a"/><rect x="133" y="111" width="1" height="2" fill="#9a9a9a"/><rect x="137" y="109" width="1" height="4" fill="#9a9a9a"/><rect x="141" y="111" width="1" height="2" fill="#9a9a9a"/><rect x="146" y="111" width="1" height="2" fill="#9a9a9a"/><rect x="150" y="111" width="1" height="2" fill="#9a9a9a"/><rect x="154" y="111" width="1" height="2" fill="#9a9a9a"/><rect x="158" y="98" width="1" height="15" fill="#b5b5b5"/><rect x="162" y="111" width="1" height="2" fill="#9a9a9a"/><rect x="167" y="111" width="1" height="2" fill="#9a9a9a"/><rect x="171" y="111" width="1" height="2" fill="#9a9a9a"/><rect x="175" y="111" width="1" height="2" fill="#9a9a9a"/><rect x="179" y="109" width="1" height="4" fill="#9a9a9a"/><rect x="183" y="111" width="1" height="2" fill="#9a9a9a"/><rect x="188" y="111" width="1" height="2" fill="#9a9a9a"/><rect x="192" y="111" width="1" height="2" fill="#9a9a9a"/><rect x="196" y="111" width="1" height="2" fill="#9a9a9a"/><rect x="200" y="98" width="1" height="15" fill="#b5b5b5"/><rect x="204" y="111" width="1" height="2" fill="#9a9a9a"/><rect x="209" y="111" width="1" height="2" fill="#9a9a9a"/><rect x="213" y="111" width="1" height="2" fill="#9a9a9a"/><rect x="217" y="111" width="1" height="2" fill="#9a9a9a"/><rect x="221" y="109" width="1" height="4" fill="#9a9a9a"/><rect x="225" y="111" width="1" height="2" fill="#9a9a9a"/><rect x="230" y="111" width="1" height="2" fill="#9a9a9a"/><rect x="234" y="111" width="1" height="2" fill="#9a9a9a"/><rect x="238" y="111" width="1" height="2" fill="#9a9a9a"/><rect x="242" y="98" width="1" height="15" fill="#b5b5b5"/><rect x="246" y="111" width="1" height="2" fill="#9a9a9a"/><rect x="251" y="111" width="1" height="2" fill="#9a9a9a"/><rect x="255" y="111" width="1" height="2" fill="#9a9a9a"/><rect x="259" y="111" width="1" height="2" fill="#9a9a9a"/><rect x="263" y="109" width="1" height="4" fill="#9a9a9a"/><rect x="267" y="111" width="1" height="2" fill="#9a9a9a"/><rect x="272" y="111" width="1" height="2" fill="#9a9a9a"/><rect x="276" y="111" width="1" height="2" fill="#9a9a9a"/><rect x="280" y="111" width="1" height="2" fill="#9a9a9a"/><rect x="284" y="98" width="1" height="15" fill="#b5b5b5"/><rect x="288" y="111" width="1" height="2" fill="#9a9a9a"/><rect x="293" y="111" width="1" height="2" fill="#9a9a9a"/><rect x="297" y="111" width="1" height="2" fill="#9a9a9a"/><rect x="301" y="111" width="1" height="2" fill="#9a9a9a"/><rect x="305" y="109" width="1" height="4" fill="#9a9a9a"/><rect x="309" y="111" width="1" height="2" fill="#9a9a9a"/><rect x="314" y="111" width="1" height="2" fill="#9a9a9a"/><rect x="318" y="111" width="1" height="2" fill="#9a9a9a"/><rect x="322" y="111" width="1" height="2" fill="#9a9a9a"/><rect x="326" y="98" width="1" height="15" fill="#b5b5b5"/><rect x="330" y="111" width="1" height="2" fill="#9a9a9a"/><rect x="335" y="111" width="1" height="2" fill="#9a9a9a"/><rect x="339" y="111" width="1" height="2" fill="#9a9a9a"/><rect x="343" y="111" width="1" height="2" fill="#9a9a9a"/><rect x="347" y="109" width="1" height="4" fill="#9a9a9a"/><rect x="351" y="111" width="1" height="2" fill="#9a9a9a"/><rect x="355" y="111" width="1" height="2" fill="#9a9a9a"/><rect x="360" y="111" width="1" height="2" fill="#9a9a9a"/><rect x="364" y="111" width="1" height="2" fill="#9a9a9a"/><rect x="368" y="98" width="1" height="15" fill="#b5b5b5"/><rect x="372" y="111" width="1" height="2" fill="#9a9a9a"/><rect x="376" y="111" width="1" height="2" fill="#9a9a9a"/><rect x="381" y="111" width="1" height="2" fill="#9a9a9a"/><rect x="385" y="111" width="1" height="2" fill="#9a9a9a"/><rect x="389" y="109" width="1" height="4" fill="#9a9a9a"/><rect x="393" y="111" width="1" height="2" fill="#9a9a9a"/><rect x="397" y="111" width="1" height="2" fill="#9a9a9a"/><rect x="402" y="111" width="1" height="2" fill="#9a9a9a"/><rect x="406" y="111" width="1" height="2" fill="#9a9a9a"/><rect x="410" y="98" width="1" height="15" fill="#b5b5b5"/><rect x="414" y="111" width="1" height="2" fill="#9a9a9a"/><rect x="418" y="111" width="1" height="2" fill="#9a9a9a"/><rect x="423" y="111" width="1" height="2" fill="#9a9a9a"/><rect x="427" y="111" width="1" height="2" fill="#9a9a9a"/><rect x="431" y="109" width="1" height="4" fill="#9a9a9a"/><rect x="435" y="111" width="1" height="2" fill="#9a9a9a"/><rect x="439" y="111" width="1" height="2" fill="#9a9a9a"/><rect x="444" y="111" width="1" height="2" fill="#9a9a9a"/><rect x="448" y="111" width="1" height="2" fill="#9a9a9a"/><rect x="452" y="98" width="1" height="15" fill="#b5b5b5"/><rect x="456" y="111" width="1" height="2" fill="#9a9a9a"/><rect x="460" y="111" width="1" height="2" fill="#9a9a9a"/><rect x="465" y="111" width="1" height="2" fill="#9a9a9a"/><rect x="469" y="111" width="1" height="2" fill="#9a9a9a"/><rect x="473" y="109" width="1" height="4" fill="#9a9a9a"/><rect x="477" y="111" width="1" height="2" fill="#9a9a9a"/><rect x="481" y="111" width="1" height="2" fill="#9a9a9a"/><rect x="486" y="111" width="1" height="2" fill="#9a9a9a"/><rect x="490" y="111" width="1" height="2" fill="#9a9a9a"/><rect x="494" y="98" width="1" height="15" fill="#b5b5b5"/><rect x="498" y="111" width="1" height="2" fill="#9a9a9a"/><rect x="502" y="111" width="1" height="2" fill="#9a9a9a"/><rect x="507" y="111" width="1" height="2" fill="#9a9a9a"/><rect x="511" y="111" width="1" height="2" fill="#9a9a9a"/><rect x="515" y="109" width="1" height="4" fill="#9a9a9a"/><rect x="519" y="111" width="1" height="2" fill="#9a9a9a"/><rect x="523" y="111" width="1" height="2" fill="#9a9a9a"/><rect x="528" y="111" width="1" height="2" fill="#9a9a9a"/><rect x="532" y="111" width="1" height="2" fill="#9a9a9a"/><rect x="536" y="98" width="1" height="15" fill="#b5b5b5"/><rect x="540" y="111" width="1" height="2" fill="#9a9a9a"/><rect x="544" y="111" width="1" height="2" fill="#9a9a9a"/><rect x="549" y="111" width="1" height="2" fill="#9a9a9a"/><rect x="553" y="111" width="1" height="2" fill="#9a9a9a"/><rect x="557" y="109" width="1" height="4" fill="#9a9a9a"/><rect x="561" y="111" width="1" height="2" fill="#9a9a9a"/><rect x="565" y="111" width="1" height="2" fill="#9a9a9a"/><rect x="569" y="111" width="1" height="2" fill="#9a9a9a"/><rect x="574" y="111" width="1" height="2" fill="#9a9a9a"/><rect x="578" y="98" width="1" height="15" fill="#b5b5b5"/><rect x="582" y="111" width="1" height="2" fill="#9a9a9a"/><rect x="586" y="111" width="1" height="2" fill="#9a9a9a"/><rect x="590" y="111" width="1" height="2" fill="#9a9a9a"/><rect x="595" y="111" width="1" height="2" fill="#9a9a9a"/><rect x="599" y="109" width="1" height="4" fill="#9a9a9a"/><rect x="603" y="111" width="1" height="2" fill="#9a9a9a"/><rect x="607" y="111" width="1" height="2" fill="#9a9a9a"/><rect x="611" y="111" width="1" height="2" fill="#9a9a9a"/><rect x="616" y="111" width="1" height="2" fill="#9a9a9a"/><rect x="620" y="98" width="1" height="15" fill="#b5b5b5"/><rect x="624" y="111" width="1" height="2" fill="#9a9a9a"/><rect x="628" y="111" width="1" height="2" fill="#9a9a9a"/><rect x="632" y="111" width="1" height="2" fill="#9a9a9a"/><rect x="637" y="111" width="1" height="2" fill="#9a9a9a"/><rect x="641" y="109" width="1" height="4" fill="#9a9a9a"/><rect x="645" y="111" width="1" height="2" fill="#9a9a9a"/><rect x="649" y="111" width="1" height="2" fill="#9a9a9a"/><rect x="653" y="111" width="1" height="2" fill="#9a9a9a"/><rect x="658" y="111" width="1" height="2" fill="#9a9a9a"/><rect x="662" y="98" width="1" height="15" fill="#b5b5b5"/><rect x="666" y="111" width="1" height="2" fill="#9a9a9a"/><rect x="670" y="111" width="1" height="2" fill="#9a9a9a"/><rect x="674" y="111" width="1" height="2" fill="#9a9a9a"/><rect x="679" y="111" width="1" height="2" fill="#9a9a9a"/><rect x="683" y="109" width="1" height="4" fill="#9a9a9a"/><rect x="687" y="111" width="1" height="2" fill="#9a9a9a"/><rect x="691" y="111" width="1" height="2" fill="#9a9a9a"/><rect x="695" y="111" width="1" height="2" fill="#9a9a9a"/><rect x="700" y="111" width="1" height="2" fill="#9a9a9a"/><rect x="704" y="98" width="1" height="15" fill="#b5b5b5"/><rect x="708" y="111" width="1" height="2" fill="#9a9a9a"/><rect x="712" y="111" width="1" height="2" fill="#9a9a9a"/><rect x="716" y="111" width="1" height="2" fill="#9a9a9a"/><rect x="721" y="111" width="1" height="2" fill="#9a9a9a"/><rect x="725" y="109" width="1" height="4" fill="#9a9a9a"/><rect x="729" y="111" width="1" height="2" fill="#9a9a9a"/><rect x="733" y="111" width="1" height="2" fill="#9a9a9a"/><rect x="737" y="111" width="1" height="2" fill="#9a9a9a"/><rect x="742" y="111" width="1" height="2" fill="#9a9a9a"/><rect x="746" y="98" width="1" height="15" fill="#b5b5b5"/><rect x="750" y="111" width="1" height="2" fill="#9a9a9a"/><rect x="754" y="111" width="1" height="2" fill="#9a9a9a"/><rect x="758" y="111" width="1" height="2" fill="#9a9a9a"/><rect x="763" y="111" width="1" height="2" fill="#9a9a9a"/><rect x="767" y="109" width="1" height="4" fill="#9a9a9a"/><rect x="771" y="111" width="1" height="2" fill="#9a9a9a"/><rect x="775" y="111" width="1" height="2" fill="#9a9a9a"/><rect x="779" y="111" width="1" height="2" fill="#9a9a9a"/><rect x="784" y="111" width="1" height="2" fill="#9a9a9a"/><rect x="788" y="98" width="1" height="15" fill="#b5b5b5"/><rect x="792" y="111" width="1" height="2" fill="#9a9a9a"/><rect x="796" y="111" width="1" height="2" fill="#9a9a9a"/><rect x="800" y="111" width="1" height="2" fill="#9a9a9a"/><rect x="804" y="111" width="1" height="2" fill="#9a9a9a"/><rect x="809" y="109" width="1" height="4" fill="#9a9a9a"/><rect x="813" y="111" width="1" height="2" fill="#9a9a9a"/><rect x="817" y="111" width="1" height="2" fill="#9a9a9a"/><rect x="821" y="111" width="1" height="2" fill="#9a9a9a"/><rect x="825" y="111" width="1" height="2" fill="#9a9a9a"/><rect x="830" y="98" width="1" height="15" fill="#b5b5b5"/><rect x="834" y="111" width="1" height="2" fill="#9a9a9a"/><rect x="838" y="111" width="1" height="2" fill="#9a9a9a"/><rect x="842" y="111" width="1" height="2" fill="#9a9a9a"/><rect x="846" y="111" width="1" height="2" fill="#9a9a9a"/><rect x="851" y="109" width="1" height="4" fill="#9a9a9a"/><rect x="855" y="111" width="1" height="2" fill="#9a9a9a"/><rect x="859" y="111" width="1" height="2" fill="#9a9a9a"/><rect x="863" y="111" width="1" height="2" fill="#9a9a9a"/><rect x="867" y="111" width="1" height="2" fill="#9a9a9a"/><rect x="872" y="98" width="1" height="15" fill="#b5b5b5"/><rect x="876" y="111" width="1" height="2" fill="#9a9a9a"/><rect x="880" y="111" width="1" height="2" fill="#9a9a9a"/><rect x="884" y="111" width="1" height="2" fill="#9a9a9a"/><rect x="888" y="111" width="1" height="2" fill="#9a9a9a"/><rect x="893" y="109" width="1" height="4" fill="#9a9a9a"/><rect x="897" y="111" width="1" height="2" fill="#9a9a9a"/><rect x="901" y="111" width="1" height="2" fill="#9a9a9a"/><rect x="905" y="111" width="1" height="2" fill="#9a9a9a"/><rect x="909" y="111" width="1" height="2" fill="#9a9a9a"/><rect x="914" y="98" width="1" height="15" fill="#b5b5b5"/><rect x="918" y="111" width="1" height="2" fill="#9a9a9a"/><rect x="922" y="111" width="1" height="2" fill="#9a9a9a"/><rect x="926" y="111" width="1" height="2" fill="#9a9a9a"/><rect x="930" y="111" width="1" height="2" fill="#9a9a9a"/><rect x="935" y="109" width="1" height="4" fill="#9a9a9a"/><rect x="939" y="111" width="1" height="2" fill="#9a9a9a"/><rect x="943" y="111" width="1" height="2" fill="#9a9a9a"/><rect x="947" y="111" width="1" height="2" fill="#9a9a9a"/><rect x="951" y="111" width="1" height="2" fill="#9a9a9a"/><rect x="956" y="98" width="1" height="15" fill="#b5b5b5"/><rect x="960" y="111" width="1" height="2" fill="#9a9a9a"/><rect x="964" y="111" width="1" height="2" fill="#9a9a9a"/><rect x="968" y="111" width="1" height="2" fill="#9a9a9a"/><rect x="972" y="111" width="1" height="2" fill="#9a9a9a"/><rect x="977" y="109" width="1" height="4" fill="#9a9a9a"/><rect x="981" y="111" width="1" height="2" fill="#9a9a9a"/><rect x="985" y="111" width="1" height="2" fill="#9a9a9a"/><rect x="989" y="111" width="1" height="2" fill="#9a9a9a"/><rect x="993" y="111" width="1" height="2" fill="#9a9a9a"/><rect x="998" y="98" width="1" height="15" fill="#b5b5b5"/><rect x="1002" y="111" width="1" height="2" fill="#9a9a9a"/><rect x="1006" y="111" width="1" height="2" fill="#9a9a9a"/><rect x="1010" y="111" width="1" height="2" fill="#9a9a9a"/><rect x="1014" y="111" width="1" height="2" fill="#9a9a9a"/><rect x="1019" y="109" width="1" height="4" fill="#9a9a9a"/><rect x="1023" y="111" width="1" height="2" fill="#9a9a9a"/><rect x="1027" y="111" width="1" height="2" fill="#9a9a9a"/><rect x="1031" y="111" width="1" height="2" fill="#9a9a9a"/><rect x="1035" y="111" width="1" height="2" fill="#9a9a9a"/><rect x="1039" y="98" width="1" height="15" fill="#b5b5b5"/><rect x="1044" y="111" width="1" height="2" fill="#9a9a9a"/><rect x="1048" y="111" width="1" height="2" fill="#9a9a9a"/><rect x="1052" y="111" width="1" height="2" fill="#9a9a9a"/><rect x="1056" y="111" width="1" height="2" fill="#9a9a9a"/><rect x="1060" y="109" width="1" height="4" fill="#9a9a9a"/><rect x="1065" y="111" width="1" height="2" fill="#9a9a9a"/><rect x="1069" y="111" width="1" height="2" fill="#9a9a9a"/><rect x="1073" y="111" width="1" height="2" fill="#9a9a9a"/><rect x="1077" y="111" width="1" height="2" fill="#9a9a9a"/><rect x="1081" y="98" width="1" height="15" fill="#b5b5b5"/><rect x="1086" y="111" width="1" height="2" fill="#9a9a9a"/><rect x="1090" y="111" width="1" height="2" fill="#9a9a9a"/><rect x="1094" y="111" width="1" height="2" fill="#9a9a9a"/><rect x="1098" y="111" width="1" height="2" fill="#9a9a9a"/><rect x="1102" y="109" width="1" height="4" fill="#9a9a9a"/><rect x="1107" y="111" width="1" height="2" fill="#9a9a9a"/><rect x="1111" y="111" width="1" height="2" fill="#9a9a9a"/><rect x="1115" y="111" width="1" height="2" fill="#9a9a9a"/><rect x="1119" y="111" width="1" height="2" fill="#9a9a9a"/><rect x="1123" y="98" width="1" height="15" fill="#b5b5b5"/><rect x="1128" y="111" width="1" height="2" fill="#9a9a9a"/><rect x="1132" y="111" width="1" height="2" fill="#9a9a9a"/><rect x="1136" y="111" width="1" height="2" fill="#9a9a9a"/><rect x="1140" y="111" width="1" height="2" fill="#9a9a9a"/><rect x="1144" y="109" width="1" height="4" fill="#9a9a9a"/><rect x="1149" y="111" width="1" height="2" fill="#9a9a9a"/><rect x="1153" y="111" width="1" height="2" fill="#9a9a9a"/><rect x="1157" y="111" width="1" height="2" fill="#9a9a9a"/><rect x="1161" y="111" width="1" height="2" fill="#9a9a9a"/><rect x="1165" y="98" width="1" height="15" fill="#b5b5b5"/><rect x="1170" y="111" width="1" height="2" fill="#9a9a9a"/><rect x="1174" y="111" width="1" height="2" fill="#9a9a9a"/><rect x="1178" y="111" width="1" height="2" fill="#9a9a9a"/><rect x="1182" y="111" width="1" height="2" fill="#9a9a9a"/><rect x="1186" y="109" width="1" height="4" fill="#9a9a9a"/><rect x="1191" y="111" width="1" height="2" fill="#9a9a9a"/><rect x="1195" y="111" width="1" height="2" fill="#9a9a9a"/><rect x="1199" y="111" width="1" height="2" fill="#9a9a9a"/><rect x="1203" y="111" width="1" height="2" fill="#9a9a9a"/><rect x="1207" y="98" width="1" height="15" fill="#b5b5b5"/><rect x="1212" y="111" width="1" height="2" fill="#9a9a9a"/><rect x="1216" y="111" width="1" height="2" fill="#9a9a9a"/><rect x="1220" y="111" width="1" height="2" fill="#9a9a9a"/><rect x="1224" y="111" width="1" height="2" fill="#9a9a9a"/><rect x="1228" y="109" width="1" height="4" fill="#9a9a9a"/><rect x="1233" y="111" width="1" height="2" fill="#9a9a9a"/><rect x="1237" y="111" width="1" height="2" fill="#9a9a9a"/><rect x="1241" y="111" width="1" height="2" fill="#9a9a9a"/><rect x="1245" y="111" width="1" height="2" fill="#9a9a9a"/><rect x="1249" y="98" width="1" height="15" fill="#b5b5b5"/><rect x="1253" y="111" width="1" height="2" fill="#9a9a9a"/><rect x="1258" y="111" width="1" height="2" fill="#9a9a9a"/><rect x="1262" y="111" width="1" height="2" fill="#9a9a9a"/><rect x="1266" y="111" width="1" height="2" fill="#9a9a9a"/><rect x="1270" y="109" width="1" height="4" fill="#9a9a9a"/><rect x="1274" y="111" width="1" height="2" fill="#9a9a9a"/><rect x="1279" y="111" width="1" height="2" fill="#9a9a9a"/><rect x="1283" y="111" width="1" height="2" fill="#9a9a9a"/><rect x="1287" y="111" width="1" height="2" fill="#9a9a9a"/><rect x="1291" y="98" width="1" height="15" fill="#b5b5b5"/><rect x="1295" y="111" width="1" height="2" fill="#9a9a9a"/><rect x="1300" y="111" width="1" height="2" fill="#9a9a9a"/><rect x="1304" y="111" width="1" height="2" fill="#9a9a9a"/><rect x="1308" y="111" width="1" height="2" fill="#9a9a9a"/><rect x="1312" y="109" width="1" height="4" fill="#9a9a9a"/><rect x="1316" y="111" width="1" height="2" fill="#9a9a9a"/><rect x="1321" y="111" width="1" height="2" fill="#9a9a9a"/><rect x="1325" y="111" width="1" height="2" fill="#9a9a9a"/><rect x="1329" y="111" width="1" height="2" fill="#9a9a9a"/><rect x="1333" y="98" width="1" height="15" fill="#b5b5b5"/><rect x="1337" y="111" width="1" height="2" fill="#9a9a9a"/><rect x="1342" y="111" width="1" height="2" fill="#9a9a9a"/><rect x="1346" y="111" width="1" height="2" fill="#9a9a9a"/><rect x="1350" y="111" width="1" height="2" fill="#9a9a9a"/><rect x="1354" y="109" width="1" height="4" fill="#9a9a9a"/><rect x="1358" y="111" width="1" height="2" fill="#9a9a9a"/><rect x="1363" y="111" width="1" height="2" fill="#9a9a9a"/><rect x="1367" y="111" width="1" height="2" fill="#9a9a9a"/><rect x="1371" y="111" width="1" height="2" fill="#9a9a9a"/><rect x="1375" y="98" width="1" height="15" fill="#b5b5b5"/><rect x="1379" y="111" width="1" height="2" fill="#9a9a9a"/><rect x="1384" y="111" width="1" height="2" fill="#9a9a9a"/><rect x="1388" y="111" width="1" height="2" fill="#9a9a9a"/><rect x="1392" y="111" width="1" height="2" fill="#9a9a9a"/><rect x="1396" y="109" width="1" height="4" fill="#9a9a9a"/><rect x="1400" y="111" width="1" height="2" fill="#9a9a9a"/><rect x="1405" y="111" width="1" height="2" fill="#9a9a9a"/><rect x="1409" y="111" width="1" height="2" fill="#9a9a9a"/><rect x="1413" y="111" width="1" height="2" fill="#9a9a9a"/><rect x="1417" y="98" width="1" height="15" fill="#b5b5b5"/><rect x="1421" y="111" width="1" height="2" fill="#9a9a9a"/><rect x="1426" y="111" width="1" height="2" fill="#9a9a9a"/><rect x="1430" y="111" width="1" height="2" fill="#9a9a9a"/><rect x="1434" y="111" width="1" height="2" fill="#9a9a9a"/><rect x="1438" y="109" width="1" height="4" fill="#9a9a9a"/><rect x="1442" y="111" width="1" height="2" fill="#9a9a9a"/><rect x="1447" y="111" width="1" height="2" fill="#9a9a9a"/><rect x="1451" y="111" width="1" height="2" fill="#9a9a9a"/><rect x="1455" y="111" width="1" height="2" fill="#9a9a9a"/><rect x="1459" y="98" width="1" height="15" fill="#b5b5b5"/><rect x="1463" y="111" width="1" height="2" fill="#9a9a9a"/><rect x="1468" y="111" width="1" height="2" fill="#9a9a9a"/><rect x="1472" y="111" width="1" height="2" fill="#9a9a9a"/><rect x="1476" y="111" width="1" height="2" fill="#9a9a9a"/><rect x="1480" y="109" width="1" height="4" fill="#9a9a9a"/><rect x="1484" y="111" width="1" height="2" fill="#9a9a9a"/><rect x="1488" y="111" width="1" height="2" fill="#9a9a9a"/><rect x="1493" y="111" width="1" height="2" fill="#9a9a9a"/><rect x="1497" y="111" width="1" height="2" fill="#9a9a9a"/><rect x="1501" y="98" width="1" height="15" fill="#b5b5b5"/><rect x="1505" y="111" width="1" height="2" fill="#9a9a9a"/><rect x="1509" y="111" width="1" height="2" fill="#9a9a9a"/><rect x="1514" y="111" width="1" height="2" fill="#9a9a9a"/><rect x="1518" y="111" width="1" height="2" fill="#9a9a9a"/><rect x="1522" y="109" width="1" height="4" fill="#9a9a9a"/><rect x="1526" y="111" width="1" height="2" fill="#9a9a9a"/><rect x="1530" y="111" width="1" height="2" fill="#9a9a9a"/><rect x="1535" y="111" width="1" height="2" fill="#9a9a9a"/><rect x="1539" y="111" width="1" height="2" fill="#9a9a9a"/><rect x="1543" y="98" width="1" height="15" fill="#b5b5b5"/><rect x="1547" y="111" width="1" height="2" fill="#9a9a9a"/><rect x="1551" y="111" width="1" height="2" fill="#9a9a9a"/><rect x="1556" y="111" width="1" height="2" fill="#9a9a9a"/><rect x="1560" y="111" width="1" height="2" fill="#9a9a9a"/><rect x="1564" y="109" width="1" height="4" fill="#9a9a9a"/><rect x="1568" y="111" width="1" height="2" fill="#9a9a9a"/><rect x="1572" y="111" width="1" height="2" fill="#9a9a9a"/><rect x="1577" y="111" width="1" height="2" fill="#9a9a9a"/><rect x="1581" y="111" width="1" height="2" fill="#9a9a9a"/><rect x="1585" y="98" width="1" height="15" fill="#b5b5b5"/><rect x="1589" y="111" width="1" height="2" fill="#9a9a9a"/><rect x="1593" y="111" width="1" height="2" fill="#9a9a9a"/><rect x="1598" y="111" width="1" height="2" fill="#9a9a9a"/><rect x="1602" y="111" width="1" height="2" fill="#9a9a9a"/><rect x="1606" y="109" width="1" height="4" fill="#9a9a9a"/><rect x="1610" y="111" width="1" height="2" fill="#9a9a9a"/><rect x="1614" y="111" width="1" height="2" fill="#9a9a9a"/><rect x="1619" y="111" width="1" height="2" fill="#9a9a9a"/><rect x="1623" y="111" width="1" height="2" fill="#9a9a9a"/><rect x="1627" y="98" width="1" height="15" fill="#b5b5b5"/><rect x="1631" y="111" width="1" height="2" fill="#9a9a9a"/><rect x="1635" y="111" width="1" height="2" fill="#9a9a9a"/><rect x="1640" y="111" width="1" height="2" fill="#9a9a9a"/><rect x="1644" y="111" width="1" height="2" fill="#9a9a9a"/><rect x="1648" y="109" width="1" height="4" fill="#9a9a9a"/><rect x="1652" y="111" width="1" height="2" fill="#9a9a9a"/><rect x="1656" y="111" width="1" height="2" fill="#9a9a9a"/><rect x="1661" y="111" width="1" height="2" fill="#9a9a9a"/><rect x="1665" y="111" width="1" height="2" fill="#9a9a9a"/><rect x="1669" y="98" width="1" height="15" fill="#b5b5b5"/><rect x="1673" y="111" width="1" height="2" fill="#9a9a9a"/><rect x="1677" y="111" width="1" height="2" fill="#9a9a9a"/><rect x="1682" y="111" width="1" height="2" fill="#9a9a9a"/><rect x="1686" y="111" width="1" height="2" fill="#9a9a9a"/><rect x="1690" y="109" width="1" height="4" fill="#9a9a9a"/><rect x="1694" y="111" width="1" height="2" fill="#9a9a9a"/><rect x="1698" y="111" width="1" height="2" fill="#9a9a9a"/><rect x="1702" y="111" width="1" height="2" fill="#9a9a9a"/><rect x="1707" y="111" width="1" height="2" fill="#9a9a9a"/><rect x="1711" y="98" width="1" height="15" fill="#b5b5b5"/><rect x="1715" y="111" width="1" height="2" fill="#9a9a9a"/><rect x="1719" y="111" width="1" height="2" fill="#9a9a9a"/><rect x="1723" y="111" width="1" height="2" fill="#9a9a9a"/><rect x="1728" y="111" width="1" height="2" fill="#9a9a9a"/><rect x="1732" y="109" width="1" height="4" fill="#9a9a9a"/><rect x="1736" y="111" width="1" height="2" fill="#9a9a9a"/></svg>
<div style="left:76px;top:97.91px;font:normal 9.6px 'Liberation Sans', sans-serif;color:#d0d0d0;white-space:nowrap;line-height:normal;">90</div>
<div style="left:118px;top:97.91px;font:normal 9.6px 'Liberation Sans', sans-serif;color:#d0d0d0;white-space:nowrap;line-height:normal;">80</div>
<div style="left:160px;top:97.91px;font:normal 9.6px 'Liberation Sans', sans-serif;color:#d0d0d0;white-space:nowrap;line-height:normal;">70</div>
<div style="left:202px;top:97.91px;font:normal 9.6px 'Liberation Sans', sans-serif;color:#d0d0d0;white-space:nowrap;line-height:normal;">60</div>
<div style="left:244px;top:97.91px;font:normal 9.6px 'Liberation Sans', sans-serif;color:#d0d0d0;white-space:nowrap;line-height:normal;">50</div>
<div style="left:286px;top:97.91px;font:normal 9.6px 'Liberation Sans', sans-serif;color:#d0d0d0;white-space:nowrap;line-height:normal;">40</div>
<div style="left:328px;top:97.91px;font:normal 9.6px 'Liberation Sans', sans-serif;color:#d0d0d0;white-space:nowrap;line-height:normal;">30</div>
<div style="left:370px;top:97.91px;font:normal 9.6px 'Liberation Sans', sans-serif;color:#d0d0d0;white-space:nowrap;line-height:normal;">20</div>
<div style="left:412px;top:97.91px;font:normal 9.6px 'Liberation Sans', sans-serif;color:#d0d0d0;white-space:nowrap;line-height:normal;">10</div>
<div style="left:454px;top:97.91px;font:normal 9.6px 'Liberation Sans', sans-serif;color:#d0d0d0;white-space:nowrap;line-height:normal;">0</div>
<div style="left:496px;top:97.91px;font:normal 9.6px 'Liberation Sans', sans-serif;color:#d0d0d0;white-space:nowrap;line-height:normal;">10</div>
<div style="left:538px;top:97.91px;font:normal 9.6px 'Liberation Sans', sans-serif;color:#d0d0d0;white-space:nowrap;line-height:normal;">20</div>
<div style="left:580px;top:97.91px;font:normal 9.6px 'Liberation Sans', sans-serif;color:#d0d0d0;white-space:nowrap;line-height:normal;">30</div>
<div style="left:622px;top:97.91px;font:normal 9.6px 'Liberation Sans', sans-serif;color:#d0d0d0;white-space:nowrap;line-height:normal;">40</div>
<div style="left:664px;top:97.91px;font:normal 9.6px 'Liberation Sans', sans-serif;color:#d0d0d0;white-space:nowrap;line-height:normal;">50</div>
<div style="left:706px;top:97.91px;font:normal 9.6px 'Liberation Sans', sans-serif;color:#d0d0d0;white-space:nowrap;line-height:normal;">60</div>
<div style="left:748px;top:97.91px;font:normal 9.6px 'Liberation Sans', sans-serif;color:#d0d0d0;white-space:nowrap;line-height:normal;">70</div>
<div style="left:790px;top:97.91px;font:normal 9.6px 'Liberation Sans', sans-serif;color:#d0d0d0;white-space:nowrap;line-height:normal;">80</div>
<div style="left:832px;top:97.91px;font:normal 9.6px 'Liberation Sans', sans-serif;color:#d0d0d0;white-space:nowrap;line-height:normal;">90</div>
<div style="left:874px;top:97.91px;font:normal 9.6px 'Liberation Sans', sans-serif;color:#d0d0d0;white-space:nowrap;line-height:normal;">100</div>
<div style="left:916px;top:97.91px;font:normal 9.6px 'Liberation Sans', sans-serif;color:#d0d0d0;white-space:nowrap;line-height:normal;">110</div>
<div style="left:958px;top:97.91px;font:normal 9.6px 'Liberation Sans', sans-serif;color:#d0d0d0;white-space:nowrap;line-height:normal;">120</div>
<div style="left:1000px;top:97.91px;font:normal 9.6px 'Liberation Sans', sans-serif;color:#d0d0d0;white-space:nowrap;line-height:normal;">130</div>
<div style="left:1041px;top:97.91px;font:normal 9.6px 'Liberation Sans', sans-serif;color:#d0d0d0;white-space:nowrap;line-height:normal;">140</div>
<div style="left:1083px;top:97.91px;font:normal 9.6px 'Liberation Sans', sans-serif;color:#d0d0d0;white-space:nowrap;line-height:normal;">150</div>
<div style="left:1125px;top:97.91px;font:normal 9.6px 'Liberation Sans', sans-serif;color:#d0d0d0;white-space:nowrap;line-height:normal;">160</div>
<div style="left:1167px;top:97.91px;font:normal 9.6px 'Liberation Sans', sans-serif;color:#d0d0d0;white-space:nowrap;line-height:normal;">170</div>
<div style="left:1209px;top:97.91px;font:normal 9.6px 'Liberation Sans', sans-serif;color:#d0d0d0;white-space:nowrap;line-height:normal;">180</div>
<div style="left:1251px;top:97.91px;font:normal 9.6px 'Liberation Sans', sans-serif;color:#d0d0d0;white-space:nowrap;line-height:normal;">190</div>
<div style="left:1293px;top:97.91px;font:normal 9.6px 'Liberation Sans', sans-serif;color:#d0d0d0;white-space:nowrap;line-height:normal;">200</div>
<div style="left:1335px;top:97.91px;font:normal 9.6px 'Liberation Sans', sans-serif;color:#d0d0d0;white-space:nowrap;line-height:normal;">210</div>
<div style="left:1377px;top:97.91px;font:normal 9.6px 'Liberation Sans', sans-serif;color:#d0d0d0;white-space:nowrap;line-height:normal;">220</div>
<div style="left:1419px;top:97.91px;font:normal 9.6px 'Liberation Sans', sans-serif;color:#d0d0d0;white-space:nowrap;line-height:normal;">230</div>
<div style="left:1461px;top:97.91px;font:normal 9.6px 'Liberation Sans', sans-serif;color:#d0d0d0;white-space:nowrap;line-height:normal;">240</div>
<div style="left:1503px;top:97.91px;font:normal 9.6px 'Liberation Sans', sans-serif;color:#d0d0d0;white-space:nowrap;line-height:normal;">250</div>
<div style="left:1545px;top:97.91px;font:normal 9.6px 'Liberation Sans', sans-serif;color:#d0d0d0;white-space:nowrap;line-height:normal;">260</div>
<div style="left:1587px;top:97.91px;font:normal 9.6px 'Liberation Sans', sans-serif;color:#d0d0d0;white-space:nowrap;line-height:normal;">270</div>
<div style="left:1629px;top:97.91px;font:normal 9.6px 'Liberation Sans', sans-serif;color:#d0d0d0;white-space:nowrap;line-height:normal;">280</div>
<div style="left:1671px;top:97.91px;font:normal 9.6px 'Liberation Sans', sans-serif;color:#d0d0d0;white-space:nowrap;line-height:normal;">290</div>
<div style="left:1713px;top:97.91px;font:normal 9.6px 'Liberation Sans', sans-serif;color:#d0d0d0;white-space:nowrap;line-height:normal;">300</div>
<div style="left:36px;top:128.09px;font:normal 8.8px 'Liberation Sans', sans-serif;color:#c8c8c8;white-space:nowrap;line-height:normal;">0</div>
<div style="left:36px;top:170.09px;font:normal 8.8px 'Liberation Sans', sans-serif;color:#c8c8c8;white-space:nowrap;line-height:normal;">1</div>
<div style="left:36px;top:178.29px;font:normal 8.8px 'Liberation Sans', sans-serif;color:#c8c8c8;white-space:nowrap;line-height:normal;">0</div>
<div style="left:36px;top:212.09px;font:normal 8.8px 'Liberation Sans', sans-serif;color:#c8c8c8;white-space:nowrap;line-height:normal;">2</div>
<div style="left:36px;top:220.29px;font:normal 8.8px 'Liberation Sans', sans-serif;color:#c8c8c8;white-space:nowrap;line-height:normal;">0</div>
<div style="left:36px;top:254.09px;font:normal 8.8px 'Liberation Sans', sans-serif;color:#c8c8c8;white-space:nowrap;line-height:normal;">3</div>
<div style="left:36px;top:262.29px;font:normal 8.8px 'Liberation Sans', sans-serif;color:#c8c8c8;white-space:nowrap;line-height:normal;">0</div>
<div style="left:36px;top:296.09px;font:normal 8.8px 'Liberation Sans', sans-serif;color:#c8c8c8;white-space:nowrap;line-height:normal;">4</div>
<div style="left:36px;top:304.29px;font:normal 8.8px 'Liberation Sans', sans-serif;color:#c8c8c8;white-space:nowrap;line-height:normal;">0</div>
<div style="left:36px;top:338.09px;font:normal 8.8px 'Liberation Sans', sans-serif;color:#c8c8c8;white-space:nowrap;line-height:normal;">5</div>
<div style="left:36px;top:346.29px;font:normal 8.8px 'Liberation Sans', sans-serif;color:#c8c8c8;white-space:nowrap;line-height:normal;">0</div>
<div style="left:36px;top:380.09px;font:normal 8.8px 'Liberation Sans', sans-serif;color:#c8c8c8;white-space:nowrap;line-height:normal;">6</div>
<div style="left:36px;top:388.29px;font:normal 8.8px 'Liberation Sans', sans-serif;color:#c8c8c8;white-space:nowrap;line-height:normal;">0</div>
<div style="left:36px;top:422.09px;font:normal 8.8px 'Liberation Sans', sans-serif;color:#c8c8c8;white-space:nowrap;line-height:normal;">7</div>
<div style="left:36px;top:430.29px;font:normal 8.8px 'Liberation Sans', sans-serif;color:#c8c8c8;white-space:nowrap;line-height:normal;">0</div>
<div style="left:36px;top:464.09px;font:normal 8.8px 'Liberation Sans', sans-serif;color:#c8c8c8;white-space:nowrap;line-height:normal;">8</div>
<div style="left:36px;top:472.29px;font:normal 8.8px 'Liberation Sans', sans-serif;color:#c8c8c8;white-space:nowrap;line-height:normal;">0</div>
<div style="left:36px;top:506.09px;font:normal 8.8px 'Liberation Sans', sans-serif;color:#c8c8c8;white-space:nowrap;line-height:normal;">9</div>
<div style="left:36px;top:514.29px;font:normal 8.8px 'Liberation Sans', sans-serif;color:#c8c8c8;white-space:nowrap;line-height:normal;">0</div>
<div style="left:36px;top:548.09px;font:normal 8.8px 'Liberation Sans', sans-serif;color:#c8c8c8;white-space:nowrap;line-height:normal;">1</div>
<div style="left:36px;top:556.29px;font:normal 8.8px 'Liberation Sans', sans-serif;color:#c8c8c8;white-space:nowrap;line-height:normal;">0</div>
<div style="left:36px;top:564.49px;font:normal 8.8px 'Liberation Sans', sans-serif;color:#c8c8c8;white-space:nowrap;line-height:normal;">0</div>
<div style="left:36px;top:590.09px;font:normal 8.8px 'Liberation Sans', sans-serif;color:#c8c8c8;white-space:nowrap;line-height:normal;">1</div>
<div style="left:36px;top:598.29px;font:normal 8.8px 'Liberation Sans', sans-serif;color:#c8c8c8;white-space:nowrap;line-height:normal;">1</div>
<div style="left:36px;top:606.49px;font:normal 8.8px 'Liberation Sans', sans-serif;color:#c8c8c8;white-space:nowrap;line-height:normal;">0</div>
<div style="left:36px;top:632.09px;font:normal 8.8px 'Liberation Sans', sans-serif;color:#c8c8c8;white-space:nowrap;line-height:normal;">1</div>
<div style="left:36px;top:640.29px;font:normal 8.8px 'Liberation Sans', sans-serif;color:#c8c8c8;white-space:nowrap;line-height:normal;">2</div>
<div style="left:36px;top:648.49px;font:normal 8.8px 'Liberation Sans', sans-serif;color:#c8c8c8;white-space:nowrap;line-height:normal;">0</div>
<div style="left:36px;top:674.09px;font:normal 8.8px 'Liberation Sans', sans-serif;color:#c8c8c8;white-space:nowrap;line-height:normal;">1</div>
<div style="left:36px;top:682.29px;font:normal 8.8px 'Liberation Sans', sans-serif;color:#c8c8c8;white-space:nowrap;line-height:normal;">3</div>
<div style="left:36px;top:690.49px;font:normal 8.8px 'Liberation Sans', sans-serif;color:#c8c8c8;white-space:nowrap;line-height:normal;">0</div>
<div style="left:36px;top:715.09px;font:normal 8.8px 'Liberation Sans', sans-serif;color:#c8c8c8;white-space:nowrap;line-height:normal;">1</div>
<div style="left:36px;top:723.29px;font:normal 8.8px 'Liberation Sans', sans-serif;color:#c8c8c8;white-space:nowrap;line-height:normal;">4</div>
<div style="left:36px;top:731.49px;font:normal 8.8px 'Liberation Sans', sans-serif;color:#c8c8c8;white-space:nowrap;line-height:normal;">0</div>
<div style="left:36px;top:757.09px;font:normal 8.8px 'Liberation Sans', sans-serif;color:#c8c8c8;white-space:nowrap;line-height:normal;">1</div>
<div style="left:36px;top:765.29px;font:normal 8.8px 'Liberation Sans', sans-serif;color:#c8c8c8;white-space:nowrap;line-height:normal;">5</div>
<div style="left:36px;top:773.49px;font:normal 8.8px 'Liberation Sans', sans-serif;color:#c8c8c8;white-space:nowrap;line-height:normal;">0</div>
<div style="left:36px;top:799.09px;font:normal 8.8px 'Liberation Sans', sans-serif;color:#c8c8c8;white-space:nowrap;line-height:normal;">1</div>
<div style="left:36px;top:807.29px;font:normal 8.8px 'Liberation Sans', sans-serif;color:#c8c8c8;white-space:nowrap;line-height:normal;">6</div>
<div style="left:36px;top:815.49px;font:normal 8.8px 'Liberation Sans', sans-serif;color:#c8c8c8;white-space:nowrap;line-height:normal;">0</div>
<div style="left:36px;top:841.09px;font:normal 8.8px 'Liberation Sans', sans-serif;color:#c8c8c8;white-space:nowrap;line-height:normal;">1</div>
<div style="left:36px;top:849.29px;font:normal 8.8px 'Liberation Sans', sans-serif;color:#c8c8c8;white-space:nowrap;line-height:normal;">7</div>
<div style="left:36px;top:857.49px;font:normal 8.8px 'Liberation Sans', sans-serif;color:#c8c8c8;white-space:nowrap;line-height:normal;">0</div>
<div style="left:36px;top:883.09px;font:normal 8.8px 'Liberation Sans', sans-serif;color:#c8c8c8;white-space:nowrap;line-height:normal;">1</div>
<div style="left:36px;top:891.29px;font:normal 8.8px 'Liberation Sans', sans-serif;color:#c8c8c8;white-space:nowrap;line-height:normal;">8</div>
<div style="left:36px;top:899.49px;font:normal 8.8px 'Liberation Sans', sans-serif;color:#c8c8c8;white-space:nowrap;line-height:normal;">0</div>
<div style="left:36px;top:925.09px;font:normal 8.8px 'Liberation Sans', sans-serif;color:#c8c8c8;white-space:nowrap;line-height:normal;">1</div>
<div style="left:36px;top:933.29px;font:normal 8.8px 'Liberation Sans', sans-serif;color:#c8c8c8;white-space:nowrap;line-height:normal;">9</div>
<div style="left:36px;top:941.49px;font:normal 8.8px 'Liberation Sans', sans-serif;color:#c8c8c8;white-space:nowrap;line-height:normal;">0</div>
<div style="left:36px;top:967.09px;font:normal 8.8px 'Liberation Sans', sans-serif;color:#c8c8c8;white-space:nowrap;line-height:normal;">2</div>
<div style="left:36px;top:975.29px;font:normal 8.8px 'Liberation Sans', sans-serif;color:#c8c8c8;white-space:nowrap;line-height:normal;">0</div>
<div style="left:36px;top:983.49px;font:normal 8.8px 'Liberation Sans', sans-serif;color:#c8c8c8;white-space:nowrap;line-height:normal;">0</div>
<div style="left:36px;top:1009.09px;font:normal 8.8px 'Liberation Sans', sans-serif;color:#c8c8c8;white-space:nowrap;line-height:normal;">2</div>
<div style="left:36px;top:1017.29px;font:normal 8.8px 'Liberation Sans', sans-serif;color:#c8c8c8;white-space:nowrap;line-height:normal;">1</div>
<div style="left:36px;top:1025.49px;font:normal 8.8px 'Liberation Sans', sans-serif;color:#c8c8c8;white-space:nowrap;line-height:normal;">0</div>
<svg style="position:absolute;left:0;top:0" width="60" height="1041"><rect x="47" y="115" width="2" height="1" fill="#9a9a9a"/><rect x="47" y="120" width="2" height="1" fill="#9a9a9a"/><rect x="47" y="124" width="2" height="1" fill="#9a9a9a"/><rect x="34" y="128" width="15" height="1" fill="#b5b5b5"/><rect x="47" y="132" width="2" height="1" fill="#9a9a9a"/><rect x="47" y="136" width="2" height="1" fill="#9a9a9a"/><rect x="47" y="141" width="2" height="1" fill="#9a9a9a"/><rect x="47" y="145" width="2" height="1" fill="#9a9a9a"/><rect x="45" y="149" width="4" height="1" fill="#9a9a9a"/><rect x="47" y="153" width="2" height="1" fill="#9a9a9a"/><rect x="47" y="157" width="2" height="1" fill="#9a9a9a"/><rect x="47" y="162" width="2" height="1" fill="#9a9a9a"/><rect x="47" y="166" width="2" height="1" fill="#9a9a9a"/><rect x="34" y="170" width="15" height="1" fill="#b5b5b5"/><rect x="47" y="174" width="2" height="1" fill="#9a9a9a"/><rect x="47" y="178" width="2" height="1" fill="#9a9a9a"/><rect x="47" y="183" width="2" height="1" fill="#9a9a9a"/><rect x="47" y="187" width="2" height="1" fill="#9a9a9a"/><rect x="45" y="191" width="4" height="1" fill="#9a9a9a"/><rect x="47" y="195" width="2" height="1" fill="#9a9a9a"/><rect x="47" y="199" width="2" height="1" fill="#9a9a9a"/><rect x="47" y="204" width="2" height="1" fill="#9a9a9a"/><rect x="47" y="208" width="2" height="1" fill="#9a9a9a"/><rect x="34" y="212" width="15" height="1" fill="#b5b5b5"/><rect x="47" y="216" width="2" height="1" fill="#9a9a9a"/><rect x="47" y="220" width="2" height="1" fill="#9a9a9a"/><rect x="47" y="225" width="2" height="1" fill="#9a9a9a"/><rect x="47" y="229" width="2" height="1" fill="#9a9a9a"/><rect x="45" y="233" width="4" height="1" fill="#9a9a9a"/><rect x="47" y="237" width="2" height="1" fill="#9a9a9a"/><rect x="47" y="241" width="2" height="1" fill="#9a9a9a"/><rect x="47" y="245" width="2" height="1" fill="#9a9a9a"/><rect x="47" y="250" width="2" height="1" fill="#9a9a9a"/><rect x="34" y="254" width="15" height="1" fill="#b5b5b5"/><rect x="47" y="258" width="2" height="1" fill="#9a9a9a"/><rect x="47" y="262" width="2" height="1" fill="#9a9a9a"/><rect x="47" y="266" width="2" height="1" fill="#9a9a9a"/><rect x="47" y="271" width="2" height="1" fill="#9a9a9a"/><rect x="45" y="275" width="4" height="1" fill="#9a9a9a"/><rect x="47" y="279" width="2" height="1" fill="#9a9a9a"/><rect x="47" y="283" width="2" height="1" fill="#9a9a9a"/><rect x="47" y="287" width="2" height="1" fill="#9a9a9a"/><rect x="47" y="292" width="2" height="1" fill="#9a9a9a"/><rect x="34" y="296" width="15" height="1" fill="#b5b5b5"/><rect x="47" y="300" width="2" height="1" fill="#9a9a9a"/><rect x="47" y="304" width="2" height="1" fill="#9a9a9a"/><rect x="47" y="308" width="2" height="1" fill="#9a9a9a"/><rect x="47" y="313" width="2" height="1" fill="#9a9a9a"/><rect x="45" y="317" width="4" height="1" fill="#9a9a9a"/><rect x="47" y="321" width="2" height="1" fill="#9a9a9a"/><rect x="47" y="325" width="2" height="1" fill="#9a9a9a"/><rect x="47" y="329" width="2" height="1" fill="#9a9a9a"/><rect x="47" y="334" width="2" height="1" fill="#9a9a9a"/><rect x="34" y="338" width="15" height="1" fill="#b5b5b5"/><rect x="47" y="342" width="2" height="1" fill="#9a9a9a"/><rect x="47" y="346" width="2" height="1" fill="#9a9a9a"/><rect x="47" y="350" width="2" height="1" fill="#9a9a9a"/><rect x="47" y="355" width="2" height="1" fill="#9a9a9a"/><rect x="45" y="359" width="4" height="1" fill="#9a9a9a"/><rect x="47" y="363" width="2" height="1" fill="#9a9a9a"/><rect x="47" y="367" width="2" height="1" fill="#9a9a9a"/><rect x="47" y="371" width="2" height="1" fill="#9a9a9a"/><rect x="47" y="376" width="2" height="1" fill="#9a9a9a"/><rect x="34" y="380" width="15" height="1" fill="#b5b5b5"/><rect x="47" y="384" width="2" height="1" fill="#9a9a9a"/><rect x="47" y="388" width="2" height="1" fill="#9a9a9a"/><rect x="47" y="392" width="2" height="1" fill="#9a9a9a"/><rect x="47" y="397" width="2" height="1" fill="#9a9a9a"/><rect x="45" y="401" width="4" height="1" fill="#9a9a9a"/><rect x="47" y="405" width="2" height="1" fill="#9a9a9a"/><rect x="47" y="409" width="2" height="1" fill="#9a9a9a"/><rect x="47" y="413" width="2" height="1" fill="#9a9a9a"/><rect x="47" y="418" width="2" height="1" fill="#9a9a9a"/><rect x="34" y="422" width="15" height="1" fill="#b5b5b5"/><rect x="47" y="426" width="2" height="1" fill="#9a9a9a"/><rect x="47" y="430" width="2" height="1" fill="#9a9a9a"/><rect x="47" y="434" width="2" height="1" fill="#9a9a9a"/><rect x="47" y="439" width="2" height="1" fill="#9a9a9a"/><rect x="45" y="443" width="4" height="1" fill="#9a9a9a"/><rect x="47" y="447" width="2" height="1" fill="#9a9a9a"/><rect x="47" y="451" width="2" height="1" fill="#9a9a9a"/><rect x="47" y="455" width="2" height="1" fill="#9a9a9a"/><rect x="47" y="460" width="2" height="1" fill="#9a9a9a"/><rect x="34" y="464" width="15" height="1" fill="#b5b5b5"/><rect x="47" y="468" width="2" height="1" fill="#9a9a9a"/><rect x="47" y="472" width="2" height="1" fill="#9a9a9a"/><rect x="47" y="476" width="2" height="1" fill="#9a9a9a"/><rect x="47" y="480" width="2" height="1" fill="#9a9a9a"/><rect x="45" y="485" width="4" height="1" fill="#9a9a9a"/><rect x="47" y="489" width="2" height="1" fill="#9a9a9a"/><rect x="47" y="493" width="2" height="1" fill="#9a9a9a"/><rect x="47" y="497" width="2" height="1" fill="#9a9a9a"/><rect x="47" y="501" width="2" height="1" fill="#9a9a9a"/><rect x="34" y="506" width="15" height="1" fill="#b5b5b5"/><rect x="47" y="510" width="2" height="1" fill="#9a9a9a"/><rect x="47" y="514" width="2" height="1" fill="#9a9a9a"/><rect x="47" y="518" width="2" height="1" fill="#9a9a9a"/><rect x="47" y="522" width="2" height="1" fill="#9a9a9a"/><rect x="45" y="527" width="4" height="1" fill="#9a9a9a"/><rect x="47" y="531" width="2" height="1" fill="#9a9a9a"/><rect x="47" y="535" width="2" height="1" fill="#9a9a9a"/><rect x="47" y="539" width="2" height="1" fill="#9a9a9a"/><rect x="47" y="543" width="2" height="1" fill="#9a9a9a"/><rect x="34" y="548" width="15" height="1" fill="#b5b5b5"/><rect x="47" y="552" width="2" height="1" fill="#9a9a9a"/><rect x="47" y="556" width="2" height="1" fill="#9a9a9a"/><rect x="47" y="560" width="2" height="1" fill="#9a9a9a"/><rect x="47" y="564" width="2" height="1" fill="#9a9a9a"/><rect x="45" y="569" width="4" height="1" fill="#9a9a9a"/><rect x="47" y="573" width="2" height="1" fill="#9a9a9a"/><rect x="47" y="577" width="2" height="1" fill="#9a9a9a"/><rect x="47" y="581" width="2" height="1" fill="#9a9a9a"/><rect x="47" y="585" width="2" height="1" fill="#9a9a9a"/><rect x="34" y="590" width="15" height="1" fill="#b5b5b5"/><rect x="47" y="594" width="2" height="1" fill="#9a9a9a"/><rect x="47" y="598" width="2" height="1" fill="#9a9a9a"/><rect x="47" y="602" width="2" height="1" fill="#9a9a9a"/><rect x="47" y="606" width="2" height="1" fill="#9a9a9a"/><rect x="45" y="611" width="4" height="1" fill="#9a9a9a"/><rect x="47" y="615" width="2" height="1" fill="#9a9a9a"/><rect x="47" y="619" width="2" height="1" fill="#9a9a9a"/><rect x="47" y="623" width="2" height="1" fill="#9a9a9a"/><rect x="47" y="627" width="2" height="1" fill="#9a9a9a"/><rect x="34" y="632" width="15" height="1" fill="#b5b5b5"/><rect x="47" y="636" width="2" height="1" fill="#9a9a9a"/><rect x="47" y="640" width="2" height="1" fill="#9a9a9a"/><rect x="47" y="644" width="2" height="1" fill="#9a9a9a"/><rect x="47" y="648" width="2" height="1" fill="#9a9a9a"/><rect x="45" y="653" width="4" height="1" fill="#9a9a9a"/><rect x="47" y="657" width="2" height="1" fill="#9a9a9a"/><rect x="47" y="661" width="2" height="1" fill="#9a9a9a"/><rect x="47" y="665" width="2" height="1" fill="#9a9a9a"/><rect x="47" y="669" width="2" height="1" fill="#9a9a9a"/><rect x="34" y="674" width="15" height="1" fill="#b5b5b5"/><rect x="47" y="678" width="2" height="1" fill="#9a9a9a"/><rect x="47" y="682" width="2" height="1" fill="#9a9a9a"/><rect x="47" y="686" width="2" height="1" fill="#9a9a9a"/><rect x="47" y="690" width="2" height="1" fill="#9a9a9a"/><rect x="45" y="695" width="4" height="1" fill="#9a9a9a"/><rect x="47" y="699" width="2" height="1" fill="#9a9a9a"/><rect x="47" y="703" width="2" height="1" fill="#9a9a9a"/><rect x="47" y="707" width="2" height="1" fill="#9a9a9a"/><rect x="47" y="711" width="2" height="1" fill="#9a9a9a"/><rect x="34" y="715" width="15" height="1" fill="#b5b5b5"/><rect x="47" y="720" width="2" height="1" fill="#9a9a9a"/><rect x="47" y="724" width="2" height="1" fill="#9a9a9a"/><rect x="47" y="728" width="2" height="1" fill="#9a9a9a"/><rect x="47" y="732" width="2" height="1" fill="#9a9a9a"/><rect x="45" y="736" width="4" height="1" fill="#9a9a9a"/><rect x="47" y="741" width="2" height="1" fill="#9a9a9a"/><rect x="47" y="745" width="2" height="1" fill="#9a9a9a"/><rect x="47" y="749" width="2" height="1" fill="#9a9a9a"/><rect x="47" y="753" width="2" height="1" fill="#9a9a9a"/><rect x="34" y="757" width="15" height="1" fill="#b5b5b5"/><rect x="47" y="762" width="2" height="1" fill="#9a9a9a"/><rect x="47" y="766" width="2" height="1" fill="#9a9a9a"/><rect x="47" y="770" width="2" height="1" fill="#9a9a9a"/><rect x="47" y="774" width="2" height="1" fill="#9a9a9a"/><rect x="45" y="778" width="4" height="1" fill="#9a9a9a"/><rect x="47" y="783" width="2" height="1" fill="#9a9a9a"/><rect x="47" y="787" width="2" height="1" fill="#9a9a9a"/><rect x="47" y="791" width="2" height="1" fill="#9a9a9a"/><rect x="47" y="795" width="2" height="1" fill="#9a9a9a"/><rect x="34" y="799" width="15" height="1" fill="#b5b5b5"/><rect x="47" y="804" width="2" height="1" fill="#9a9a9a"/><rect x="47" y="808" width="2" height="1" fill="#9a9a9a"/><rect x="47" y="812" width="2" height="1" fill="#9a9a9a"/><rect x="47" y="816" width="2" height="1" fill="#9a9a9a"/><rect x="45" y="820" width="4" height="1" fill="#9a9a9a"/><rect x="47" y="825" width="2" height="1" fill="#9a9a9a"/><rect x="47" y="829" width="2" height="1" fill="#9a9a9a"/><rect x="47" y="833" width="2" height="1" fill="#9a9a9a"/><rect x="47" y="837" width="2" height="1" fill="#9a9a9a"/><rect x="34" y="841" width="15" height="1" fill="#b5b5b5"/><rect x="47" y="846" width="2" height="1" fill="#9a9a9a"/><rect x="47" y="850" width="2" height="1" fill="#9a9a9a"/><rect x="47" y="854" width="2" height="1" fill="#9a9a9a"/><rect x="47" y="858" width="2" height="1" fill="#9a9a9a"/><rect x="45" y="862" width="4" height="1" fill="#9a9a9a"/><rect x="47" y="867" width="2" height="1" fill="#9a9a9a"/><rect x="47" y="871" width="2" height="1" fill="#9a9a9a"/><rect x="47" y="875" width="2" height="1" fill="#9a9a9a"/><rect x="47" y="879" width="2" height="1" fill="#9a9a9a"/><rect x="34" y="883" width="15" height="1" fill="#b5b5b5"/><rect x="47" y="888" width="2" height="1" fill="#9a9a9a"/><rect x="47" y="892" width="2" height="1" fill="#9a9a9a"/><rect x="47" y="896" width="2" height="1" fill="#9a9a9a"/><rect x="47" y="900" width="2" height="1" fill="#9a9a9a"/><rect x="45" y="904" width="4" height="1" fill="#9a9a9a"/><rect x="47" y="909" width="2" height="1" fill="#9a9a9a"/><rect x="47" y="913" width="2" height="1" fill="#9a9a9a"/><rect x="47" y="917" width="2" height="1" fill="#9a9a9a"/><rect x="47" y="921" width="2" height="1" fill="#9a9a9a"/><rect x="34" y="925" width="15" height="1" fill="#b5b5b5"/><rect x="47" y="929" width="2" height="1" fill="#9a9a9a"/><rect x="47" y="934" width="2" height="1" fill="#9a9a9a"/><rect x="47" y="938" width="2" height="1" fill="#9a9a9a"/><rect x="47" y="942" width="2" height="1" fill="#9a9a9a"/><rect x="45" y="946" width="4" height="1" fill="#9a9a9a"/><rect x="47" y="950" width="2" height="1" fill="#9a9a9a"/><rect x="47" y="955" width="2" height="1" fill="#9a9a9a"/><rect x="47" y="959" width="2" height="1" fill="#9a9a9a"/><rect x="47" y="963" width="2" height="1" fill="#9a9a9a"/><rect x="34" y="967" width="15" height="1" fill="#b5b5b5"/><rect x="47" y="971" width="2" height="1" fill="#9a9a9a"/><rect x="47" y="976" width="2" height="1" fill="#9a9a9a"/><rect x="47" y="980" width="2" height="1" fill="#9a9a9a"/><rect x="47" y="984" width="2" height="1" fill="#9a9a9a"/><rect x="45" y="988" width="4" height="1" fill="#9a9a9a"/><rect x="47" y="992" width="2" height="1" fill="#9a9a9a"/><rect x="47" y="997" width="2" height="1" fill="#9a9a9a"/><rect x="47" y="1001" width="2" height="1" fill="#9a9a9a"/><rect x="47" y="1005" width="2" height="1" fill="#9a9a9a"/><rect x="34" y="1009" width="15" height="1" fill="#b5b5b5"/><rect x="47" y="1013" width="2" height="1" fill="#9a9a9a"/><rect x="47" y="1018" width="2" height="1" fill="#9a9a9a"/><rect x="47" y="1022" width="2" height="1" fill="#9a9a9a"/></svg>
<svg style="position:absolute;left:1345px;top:98px;" width="1" height="15" viewBox="0 0 1 15"><rect x="0" y="0" width="1" height="1" fill="#000"/><rect x="0" y="1" width="1" height="1" fill="#f0f0f0"/><rect x="0" y="2" width="1" height="1" fill="#000"/><rect x="0" y="3" width="1" height="1" fill="#f0f0f0"/><rect x="0" y="4" width="1" height="1" fill="#000"/><rect x="0" y="5" width="1" height="1" fill="#f0f0f0"/><rect x="0" y="6" width="1" height="1" fill="#000"/><rect x="0" y="7" width="1" height="1" fill="#f0f0f0"/><rect x="0" y="8" width="1" height="1" fill="#000"/><rect x="0" y="9" width="1" height="1" fill="#f0f0f0"/><rect x="0" y="10" width="1" height="1" fill="#000"/><rect x="0" y="11" width="1" height="1" fill="#f0f0f0"/><rect x="0" y="12" width="1" height="1" fill="#000"/><rect x="0" y="13" width="1" height="1" fill="#f0f0f0"/><rect x="0" y="14" width="1" height="1" fill="#000"/></svg>
<svg style="position:absolute;left:34px;top:444px;" width="15" height="1" viewBox="0 0 15 1"><rect x="0" y="0" width="1" height="1" fill="#000"/><rect x="1" y="0" width="1" height="1" fill="#f0f0f0"/><rect x="2" y="0" width="1" height="1" fill="#000"/><rect x="3" y="0" width="1" height="1" fill="#f0f0f0"/><rect x="4" y="0" width="1" height="1" fill="#000"/><rect x="5" y="0" width="1" height="1" fill="#f0f0f0"/><rect x="6" y="0" width="1" height="1" fill="#000"/><rect x="7" y="0" width="1" height="1" fill="#f0f0f0"/><rect x="8" y="0" width="1" height="1" fill="#000"/><rect x="9" y="0" width="1" height="1" fill="#f0f0f0"/><rect x="10" y="0" width="1" height="1" fill="#000"/><rect x="11" y="0" width="1" height="1" fill="#f0f0f0"/><rect x="12" y="0" width="1" height="1" fill="#000"/><rect x="13" y="0" width="1" height="1" fill="#f0f0f0"/><rect x="14" y="0" width="1" height="1" fill="#000"/></svg>
<div style="left:50px;top:114px;width:1688px;height:910px;background:#b9b9b9"></div>
<div style="left:1738px;top:97px;width:14px;height:927px;background:#333333"></div>
<svg style="position:absolute;left:1741px;top:103px;" width="9" height="6" viewBox="0 0 9 6"><path d="M0 6H9L4.5 0Z" fill="#e6e6e6"/></svg>
<div style="left:1739px;top:169px;width:13px;height:344px;background:#8f8f8f"></div>
<svg style="position:absolute;left:1741px;top:1013px;" width="9" height="6" viewBox="0 0 9 6"><path d="M0 0H9L4.5 6Z" fill="#e6e6e6"/></svg>
<div style="left:1752px;top:78px;width:3px;height:963px;background:#2b2b2b"></div>
<div style="left:34px;top:1024px;width:1718px;height:17px;background:#333333"></div>
<div style="left:34px;top:1024px;width:1718px;height:1px;background:#202020"></div>
<div style="left:34px;top:1025px;width:324px;height:16px;background:#474747"></div>
<div style="left:51px;top:1027px;width:19px;height:11px;background:#9a9a9a;border-radius:2px"></div>
<svg style="position:absolute;left:52px;top:1027px;" width="18" height="11" viewBox="0 0 18 11"><g transform="translate(5 5.5)"><rect x="-1" y="-4.5" width="2" height="9" fill="#3e3e3e" transform="rotate(0)"/><rect x="-1" y="-4.5" width="2" height="9" fill="#3e3e3e" transform="rotate(45)"/><rect x="-1" y="-4.5" width="2" height="9" fill="#3e3e3e" transform="rotate(90)"/><rect x="-1" y="-4.5" width="2" height="9" fill="#3e3e3e" transform="rotate(135)"/><circle r="3.2" fill="#3e3e3e"/><circle r="1.1" fill="#9a9a9a"/></g><rect x="11.5" y="1.5" width="2.2" height="5" fill="#3e3e3e"/><rect x="11.5" y="7.8" width="2.2" height="2" fill="#3e3e3e"/></svg>
<svg style="position:absolute;left:78px;top:1028px;" width="9" height="9" viewBox="0 0 9 9"><rect x="0" y="0" width="1.3" height="9" fill="#9a9a9a"/><path d="M8 0V9L2 4.5Z" fill="#9a9a9a"/></svg>
<svg style="position:absolute;left:92px;top:1028px;" width="6" height="9" viewBox="0 0 6 9"><path d="M6 0V9L0 4.5Z" fill="#9a9a9a"/></svg>
<div style="left:109px;top:1027.44px;font:normal 9.5px 'Liberation Sans', sans-serif;color:#d0d0d0;white-space:nowrap;line-height:normal;">1</div>
<svg style="position:absolute;left:189px;top:1030px;" width="8" height="5" viewBox="0 0 8 5"><path d="M0 0H8L4 5Z" fill="#d8d8d8"/></svg>
<svg style="position:absolute;left:208px;top:1028px;" width="6" height="9" viewBox="0 0 6 9"><path d="M0 0V9L6 4.5Z" fill="#d8d8d8"/></svg>
<svg style="position:absolute;left:221px;top:1028px;" width="9" height="9" viewBox="0 0 9 9"><path d="M0 0V9L6 4.5Z" fill="#d8d8d8"/><rect x="7.5" y="0" width="1.3" height="9" fill="#d8d8d8"/></svg>
<svg style="position:absolute;left:237px;top:1027px;" width="16" height="13" viewBox="0 0 16 13"><rect x="1" y="1" width="10" height="10" rx="3" fill="none" stroke="#d0d0d0" stroke-width="1.3"/><path d="M4 3H7L9 5V10H4Z" fill="#d0d0d0"/><path d="M13 11H16L14.5 13Z" fill="#d0d0d0"/></svg>
<div style="left:262px;top:1027px;width:11px;height:11px;border-radius:50%;background:radial-gradient(circle at 40% 35%,#7ee06a,#2f9e23)"></div>
<div style="left:277px;top:1027.28px;font:normal 9.3px 'Liberation Sans', sans-serif;color:#d0d0d0;white-space:nowrap;line-height:normal;">Ohne Fehler</div>
<svg style="position:absolute;left:347px;top:1031px;" width="8" height="4" viewBox="0 0 8 4"><path d="M0 0H8L4 4Z" fill="#d0d0d0"/></svg>
<svg style="position:absolute;left:364px;top:1027px;" width="7" height="11" viewBox="0 0 7 11"><path d="M7 0V11L0 5.5Z" fill="#f0f0f0"/></svg>
<div style="left:619px;top:1025px;width:835px;height:14px;background:#8f8f8f"></div>
<svg style="position:absolute;left:1703px;top:1027px;" width="7" height="11" viewBox="0 0 7 11"><path d="M0 0V11L7 5.5Z" fill="#f0f0f0"/></svg>
<div style="left:1715px;top:1025px;width:22px;height:16px;background:#3d3d3d"></div>
<svg style="position:absolute;left:1720px;top:1026px;" width="15" height="12" viewBox="0 0 15 12"><rect x="0.5" y="0.5" width="6.5" height="11" fill="none" stroke="#e0e0e0"/><rect x="7.5" y="0.5" width="6.5" height="11" fill="none" stroke="#e0e0e0"/></svg>
<svg style="position:absolute;left:1742px;top:1028px;" width="9" height="9" viewBox="0 0 9 9"><rect x="8" y="8" width="1" height="1" fill="#999"/><rect x="8" y="6" width="1" height="1" fill="#999"/><rect x="8" y="4" width="1" height="1" fill="#999"/><rect x="8" y="2" width="1" height="1" fill="#999"/><rect x="8" y="0" width="1" height="1" fill="#999"/><rect x="6" y="8" width="1" height="1" fill="#999"/><rect x="6" y="6" width="1" height="1" fill="#999"/><rect x="6" y="4" width="1" height="1" fill="#999"/><rect x="6" y="2" width="1" height="1" fill="#999"/><rect x="4" y="8" width="1" height="1" fill="#999"/><rect x="4" y="6" width="1" height="1" fill="#999"/><rect x="4" y="4" width="1" height="1" fill="#999"/><rect x="2" y="8" width="1" height="1" fill="#999"/><rect x="2" y="6" width="1" height="1" fill="#999"/><rect x="0" y="8" width="1" height="1" fill="#999"/></svg>
<div style="left:1755px;top:78px;width:165px;height:963px;background:#4a4a4a"></div>
<div style="left:1755px;top:78px;width:165px;height:12px;background:#323232"></div>
<svg style="position:absolute;left:1907px;top:81px;" width="8" height="6" viewBox="0 0 8 6"><path d="M4 0V6L0 3Z M8 0V6L4 3Z" fill="#d0d0d0"/></svg>
<div style="left:1755px;top:90px;width:165px;height:1px;background:#262626"></div>
<svg style="position:absolute;left:1827px;top:92px;" width="20" height="4" viewBox="0 0 20 4"><rect x="0" y="0" width="1" height="4" fill="#1a1a1a"/><rect x="2" y="0" width="1" height="4" fill="#1a1a1a"/><rect x="4" y="0" width="1" height="4" fill="#1a1a1a"/><rect x="6" y="0" width="1" height="4" fill="#1a1a1a"/><rect x="8" y="0" width="1" height="4" fill="#1a1a1a"/><rect x="10" y="0" width="1" height="4" fill="#1a1a1a"/><rect x="12" y="0" width="1" height="4" fill="#1a1a1a"/><rect x="14" y="0" width="1" height="4" fill="#1a1a1a"/><rect x="16" y="0" width="1" height="4" fill="#1a1a1a"/><rect x="18" y="0" width="1" height="4" fill="#1a1a1a"/></svg>
<svg style="position:absolute;left:1766px;top:105px;" width="18" height="17" viewBox="0 0 18 17"><path d="M0.5 5L3.5 2H8V14H0.5Z M17.5 5L14.5 2H10V14H17.5Z" fill="#d6d6d6"/><path d="M3.5 2V5H0.5M14.5 2V5H17.5" fill="none" stroke="#4a4a4a" stroke-width="0.9"/><path d="M9 0V17" stroke="#e8e8e8"/></svg>
<div style="left:1792px;top:107.74px;font:bold 9.5px 'Liberation Sans', sans-serif;color:#e0e0e0;white-space:nowrap;line-height:normal;">Seiten</div>
<svg style="position:absolute;left:1766px;top:133px;" width="17" height="17" viewBox="0 0 17 17"><path d="M8.5 0L16.5 5L8.5 10L0.5 5Z" fill="#d6d6d6"/><path d="M0.5 8L8.5 13L16.5 8L16.5 10L8.5 15.5L0.5 10Z" fill="#c8c8c8"/></svg>
<div style="left:1792px;top:135.74px;font:bold 9.5px 'Liberation Sans', sans-serif;color:#e0e0e0;white-space:nowrap;line-height:normal;">Ebenen</div>
<svg style="position:absolute;left:1765px;top:163px;" width="19" height="11" viewBox="0 0 19 11"><path d="M7 1.5H3.5A3.5 4 0 0 0 3.5 9.5H7M12 1.5H15.5A3.5 4 0 0 1 15.5 9.5H12" fill="none" stroke="#d6d6d6" stroke-width="2.2"/><path d="M6 5.5H13" stroke="#d6d6d6" stroke-width="2"/></svg>
<div style="left:1792px;top:163.74px;font:bold 9.5px 'Liberation Sans', sans-serif;color:#e0e0e0;white-space:nowrap;line-height:normal;">Verknüpfungen</div>
<div style="left:1755px;top:185px;width:165px;height:1px;background:#262626"></div>
<svg style="position:absolute;left:1827px;top:191px;" width="20" height="4" viewBox="0 0 20 4"><rect x="0" y="0" width="1" height="4" fill="#1a1a1a"/><rect x="2" y="0" width="1" height="4" fill="#1a1a1a"/><rect x="4" y="0" width="1" height="4" fill="#1a1a1a"/><rect x="6" y="0" width="1" height="4" fill="#1a1a1a"/><rect x="8" y="0" width="1" height="4" fill="#1a1a1a"/><rect x="10" y="0" width="1" height="4" fill="#1a1a1a"/><rect x="12" y="0" width="1" height="4" fill="#1a1a1a"/><rect x="14" y="0" width="1" height="4" fill="#1a1a1a"/><rect x="16" y="0" width="1" height="4" fill="#1a1a1a"/><rect x="18" y="0" width="1" height="4" fill="#1a1a1a"/></svg>
<svg style="position:absolute;left:1764px;top:202px;" width="20" height="16" viewBox="0 0 20 16"><path d="M10 1C4 1 0.5 5 0.5 9C0.5 13 4 15 8 15C10 15 10 12 12 12C16 12 19.5 11 19.5 7C19.5 3 15 1 10 1Z" fill="#d6d6d6"/><circle cx="5" cy="9" r="1.4" fill="#535353"/><circle cx="7" cy="5" r="1.4" fill="#535353"/><circle cx="12" cy="4.5" r="1.4" fill="#535353"/><circle cx="16" cy="7" r="1.4" fill="#535353"/><circle cx="9" cy="11.5" r="1.4" fill="#535353"/></svg>
<div style="left:1792px;top:204.74px;font:bold 9.5px 'Liberation Sans', sans-serif;color:#e0e0e0;white-space:nowrap;line-height:normal;">Farbe</div>
<div style="left:1755px;top:226px;width:165px;height:1px;background:#262626"></div>
<div style="left:4px;top:106px;width:24px;height:20px;background:#3a3a3a;border:1px solid #2e2e2e;box-sizing:border-box"></div>
<svg style="position:absolute;left:10px;top:107px;" width="14" height="18" viewBox="0 0 14 18"><path d="M1.5 1.5V14L4.5 11L7 16.5L9 15.5L6.5 10.5H11Z" fill="none" stroke="#d6d6d6" stroke-width="1.2"/></svg>
<svg style="position:absolute;left:10px;top:129px;" width="14" height="17" viewBox="0 0 14 17"><path d="M1.5 1V13.5L4.5 10.5L7 16L9 15L6.5 10H11Z" fill="#d6d6d6"/></svg>
<svg style="position:absolute;left:9px;top:150px;" width="15" height="17" viewBox="0 0 15 17"><path d="M1 1H7L11 5V15H1Z" fill="#d6d6d6"/><path d="M7 1V5H11" fill="none" stroke="#535353"/><path d="M9 9V16L11 14L12.5 16.5L13.5 16L12 13.5H14.5Z" fill="#d6d6d6" stroke="#535353" stroke-width="0.6"/></svg>
<svg style="position:absolute;left:6px;top:172px;" width="21" height="15" viewBox="0 0 21 15"><path d="M1 0V15M20 0V15" stroke="#d6d6d6" stroke-width="1.5"/><path d="M3.5 7.5H17.5" stroke="#d6d6d6" stroke-width="1.5"/><path d="M3 7.5L7 4V11Z M18 7.5L14 4V11Z" fill="#d6d6d6"/></svg>
<svg style="position:absolute;left:8px;top:192px;" width="18" height="16" viewBox="0 0 18 16"><path d="M2 8V15H17V8" fill="none" stroke="#d6d6d6" stroke-width="1.3"/><rect x="5" y="10" width="2" height="2" fill="#d6d6d6"/><rect x="9" y="10" width="2" height="2" fill="#d6d6d6"/><rect x="13" y="10" width="2" height="2" fill="#d6d6d6"/><path d="M5 1L11 7M11 3V7H7" fill="none" stroke="#d6d6d6" stroke-width="1.3"/></svg>
<div style="left:8.3px;top:215.36px;font:normal 19.5px 'Liberation Serif', serif;color:#d6d6d6;white-space:nowrap;line-height:normal;">T</div>
<svg style="position:absolute;left:25px;top:232px;" width="3" height="3" viewBox="0 0 3 3"><path d="M3 0V3H0Z" fill="#d6d6d6"/></svg>
<svg style="position:absolute;left:8px;top:241px;" width="17" height="17" viewBox="0 0 17 17"><path d="M1 16L16 1" stroke="#d6d6d6" stroke-width="1.5"/></svg>
<svg style="position:absolute;left:6px;top:261px;" width="22" height="18" viewBox="0 0 22 18"><path d="M0 3.5H7" stroke="#d6d6d6" stroke-width="1.5"/><path d="M10 3L18 9L11 16L6 17L7 12Z" fill="#d6d6d6"/><circle cx="11" cy="11" r="1.2" fill="#535353"/><path d="M11 11L7 16" stroke="#535353"/><path d="M25 15V18H22Z" fill="#d6d6d6"/></svg>
<svg style="position:absolute;left:7px;top:284px;" width="21" height="17" viewBox="0 0 21 17"><path d="M2 15L3 11L13 1L16 4L6 14Z" fill="#d6d6d6"/><path d="M19 14V17H16Z" fill="#d6d6d6"/></svg>
<svg style="position:absolute;left:8px;top:305px;" width="20" height="17" viewBox="0 0 20 17"><rect x="1.5" y="1.5" width="12" height="11" fill="none" stroke="#d6d6d6" stroke-width="1.6"/><path d="M1.5 1.5L13.5 12.5M13.5 1.5L1.5 12.5" stroke="#d6d6d6" stroke-width="1"/><path d="M19 13V16H16Z" fill="#d6d6d6"/></svg>
<svg style="position:absolute;left:7px;top:327px;" width="21" height="16" viewBox="0 0 21 16"><ellipse cx="9" cy="7" rx="7.5" ry="5.6" fill="#7a7a7a" stroke="#d6d6d6" stroke-width="1.2"/><path d="M20 12V15H17Z" fill="#d6d6d6"/></svg>
<svg style="position:absolute;left:7px;top:353px;" width="18" height="15" viewBox="0 0 18 15"><circle cx="4" cy="11" r="2.6" fill="none" stroke="#d6d6d6" stroke-width="1.5"/><circle cx="14" cy="11" r="2.6" fill="none" stroke="#d6d6d6" stroke-width="1.5"/><path d="M5.5 9L15 1M12.5 9L3 1" stroke="#d6d6d6" stroke-width="1.5"/></svg>
<svg style="position:absolute;left:8px;top:375px;" width="19" height="16" viewBox="0 0 19 16"><path d="M1 1V11L3.5 8.5L6 13L7.5 12L5 7.5H9Z" fill="#d6d6d6"/><path d="M9 1.5H17.5V14.5H9M1 14.5H4" fill="none" stroke="#d6d6d6" stroke-dasharray="2 1.5"/></svg>
<div style="left:8px;top:397px;width:16px;height:13px;background:linear-gradient(90deg,#2e2e2e,#e6e6e6);border:1px solid #cfcfcf;box-sizing:border-box"></div>
<svg style="position:absolute;left:8px;top:417px;" width="16" height="12" viewBox="0 0 16 12"><rect x="0" y="0" width="3" height="3" fill="#dcdcdc" opacity="1.0"/><rect x="0" y="3" width="3" height="3" fill="#6a6a6a" opacity="0.88"/><rect x="0" y="6" width="3" height="3" fill="#dcdcdc" opacity="0.76"/><rect x="0" y="9" width="3" height="3" fill="#6a6a6a" opacity="0.64"/><rect x="3" y="0" width="3" height="3" fill="#6a6a6a" opacity="1.0"/><rect x="3" y="3" width="3" height="3" fill="#dcdcdc" opacity="0.88"/><rect x="3" y="6" width="3" height="3" fill="#6a6a6a" opacity="0.76"/><rect x="3" y="9" width="3" height="3" fill="#dcdcdc" opacity="0.64"/><rect x="6" y="0" width="3" height="3" fill="#dcdcdc" opacity="1.0"/><rect x="6" y="3" width="3" height="3" fill="#6a6a6a" opacity="0.88"/><rect x="6" y="6" width="3" height="3" fill="#dcdcdc" opacity="0.76"/><rect x="6" y="9" width="3" height="3" fill="#6a6a6a" opacity="0.64"/><rect x="9" y="0" width="3" height="3" fill="#6a6a6a" opacity="1.0"/><rect x="9" y="3" width="3" height="3" fill="#dcdcdc" opacity="0.88"/><rect x="9" y="6" width="3" height="3" fill="#6a6a6a" opacity="0.76"/><rect x="9" y="9" width="3" height="3" fill="#dcdcdc" opacity="0.64"/><rect x="12" y="0" width="3" height="3" fill="#dcdcdc" opacity="1.0"/><rect x="12" y="3" width="3" height="3" fill="#6a6a6a" opacity="0.88"/><rect x="12" y="6" width="3" height="3" fill="#dcdcdc" opacity="0.76"/><rect x="12" y="9" width="3" height="3" fill="#6a6a6a" opacity="0.64"/><rect x="15" y="0" width="3" height="3" fill="#6a6a6a" opacity="1.0"/><rect x="15" y="3" width="3" height="3" fill="#dcdcdc" opacity="0.88"/><rect x="15" y="6" width="3" height="3" fill="#6a6a6a" opacity="0.76"/><rect x="15" y="9" width="3" height="3" fill="#dcdcdc" opacity="0.64"/></svg>
<svg style="position:absolute;left:8px;top:446px;" width="16" height="14" viewBox="0 0 16 14"><path d="M1 1H15V9L10 14H1Z" fill="#d6d6d6"/><path d="M3 4H12M3 7H12M3 10H8" stroke="#535353"/><path d="M10 14V9H15" fill="#9a9a9a"/></svg>
<svg style="position:absolute;left:8px;top:466px;" width="18" height="16" viewBox="0 0 18 16"><path d="M1.5 14.5L2 12L9 5L11 7L4 14Z" fill="none" stroke="#d6d6d6" stroke-width="1.2"/><path d="M9 3L13 0.5L15.5 3L13 7Z M8 4L12 8" fill="#d6d6d6" stroke="#d6d6d6" stroke-width="1.5"/><path d="M18 12V15H15Z" fill="#d6d6d6"/></svg>
<svg style="position:absolute;left:7px;top:488px;" width="19" height="15" viewBox="0 0 19 15"><path d="M3 8V4.5A1 1 0 0 1 5 4.5V7V2A1 1 0 0 1 7 2V7V1A1 1 0 0 1 9 1V7V2.5A1 1 0 0 1 11 2.5V8L12.5 6A1.2 1.2 0 0 1 14.5 7.5L11 13.5H5L3 10Z" fill="#d6d6d6"/></svg>
<svg style="position:absolute;left:7px;top:507px;" width="18" height="17" viewBox="0 0 18 17"><circle cx="7" cy="7" r="5.2" fill="#9a9a9a" stroke="#d6d6d6" stroke-width="1.8"/><path d="M11 11L16 16" stroke="#d6d6d6" stroke-width="2.8"/></svg>
<svg style="position:absolute;left:5px;top:531px;" width="24" height="21" viewBox="0 0 24 21"><path d="M16.5 2.5H19A2 2 0 0 1 21 4.5V7" fill="none" stroke="#d8d8d8" stroke-width="1.1"/><path d="M17.5 0.5L15.5 2.5L17.5 4.5M19 5.5L21 7.5L23 5.5" fill="none" stroke="#d8d8d8" stroke-width="1.1"/><rect x="10" y="9" width="11" height="11" fill="#fff"/><rect x="11.5" y="10.5" width="8" height="8" fill="#4a4a4a"/><path d="M11 19L20 10" stroke="#e0161e" stroke-width="2.5"/><rect x="1" y="2" width="11" height="11" fill="#fcf0c9" stroke="#353535"/></svg>
<svg style="position:absolute;left:5px;top:552px;" width="12" height="12" viewBox="0 0 12 12"><rect x="3.5" y="3.5" width="7" height="7" fill="#333" stroke="#ddd"/><rect x="0.5" y="0.5" width="7" height="7" fill="#fff" stroke="#222"/><path d="M1 7L7 1" stroke="#e0161e" stroke-width="1.2"/></svg>
<svg style="position:absolute;left:5px;top:567px;" width="10" height="11" viewBox="0 0 10 11"><rect x="1" y="1" width="8" height="8" fill="none" stroke="#cfcfcf" stroke-width="1.2"/></svg>
<div style="left:18px;top:566.39px;font:normal 12px 'Liberation Serif', serif;color:#8a8a8a;white-space:nowrap;line-height:normal;">T</div>
<div style="left:4px;top:585px;width:24px;height:20px;background:#3a3a3a;border:1px solid #2e2e2e;box-sizing:border-box"></div>
<svg style="position:absolute;left:9px;top:588px;" width="17" height="15" viewBox="0 0 17 15"><rect x="0.5" y="0.5" width="11" height="11" fill="#fcf0c9" stroke="#222"/><path d="M16 11V14H13Z" fill="#d0d0d0"/></svg>
<div style="left:4px;top:612px;width:24px;height:20px;background:#3a3a3a;border:1px solid #2e2e2e;box-sizing:border-box"></div>
<svg style="position:absolute;left:9px;top:617px;" width="17" height="14" viewBox="0 0 17 14"><rect x="1" y="1" width="12" height="10" fill="none" stroke="#d0d0d0" stroke-width="1.2"/><path d="M1 3.5H13" stroke="#d0d0d0"/><path d="M16 10V13H13Z" fill="#d0d0d0"/></svg>
<div style="left:452px;top:128px;width:882px;height:882px;background:#fbfaed;border:1px solid #000;box-sizing:border-box"></div>
<div style="left:453px;top:129px;width:880px;height:880px;border:1px solid #ffffff;box-sizing:border-box"></div>
<div style="left:1083px;top:129px;width:2px;height:156px;background:#76bdb9"></div>
<div style="left:926.55px;top:278.16px;font:bold 81px 'Liberation Serif', serif;color:#76bdb9;line-height:normal;transform:scaleX(1.12);transform-origin:0 0;white-space:nowrap">F</div>
<div style="left:984.04px;top:278.16px;font:bold 81px 'Liberation Serif', serif;color:#76bdb9;line-height:normal;transform:scaleX(1.114);transform-origin:0 0;white-space:nowrap">R</div>
<div style="left:1118.29px;top:278.16px;font:bold 81px 'Liberation Serif', serif;color:#76bdb9;line-height:normal;transform:scaleX(1.085);transform-origin:0 0;white-space:nowrap">H</div>
<div style="left:1189.55px;top:278.16px;font:bold 81px 'Liberation Serif', serif;color:#76bdb9;line-height:normal;transform:scaleX(1.117);transform-origin:0 0;white-space:nowrap">E</div>
<div style="left:1251.48px;top:278.16px;font:bold 81px 'Liberation Serif', serif;color:#76bdb9;line-height:normal;transform:scaleX(1.078);transform-origin:0 0;white-space:nowrap">S</div>
<div style="left:929.04px;top:361.89px;font:bold 134px 'Liberation Serif', serif;color:#a82a2b;line-height:normal;transform:scaleX(1.112);transform-origin:0 0;white-space:nowrap">F</div>
<div style="left:1021.94px;top:361.89px;font:bold 134px 'Liberation Serif', serif;color:#a82a2b;line-height:normal;transform:scaleX(1.091);transform-origin:0 0;white-space:nowrap">E</div>
<div style="left:1117.77px;top:361.89px;font:bold 134px 'Liberation Serif', serif;color:#a82a2b;line-height:normal;transform:scaleX(1.067);transform-origin:0 0;white-space:nowrap">S</div>
<div style="left:1200.57px;top:361.89px;font:bold 134px 'Liberation Serif', serif;color:#a82a2b;line-height:normal;transform:scaleX(1.073);transform-origin:0 0;white-space:nowrap">T</div>
<svg style="position:absolute;left:1054px;top:281px;" width="60" height="72" viewBox="0 0 60 72"><path d="M25 10V8A5 5 0 0 1 35 8V10" fill="none" stroke="#76bdb9" stroke-width="2.2"/><path d="M23.7 16V10H36.3V16Z" fill="#76bdb9"/><ellipse cx="30" cy="44" rx="28.7" ry="27.3" fill="#76bdb9"/><g transform="translate(30.2 42.5)"><g transform="rotate(0)"><path d="M0 -10V-24" stroke="#f4ecc8" stroke-width="2.6"/><path d="M0 -14L-6 -19M0 -14L6 -19M0 -19L-4.5 -23M0 -19L4.5 -23" stroke="#f4ecc8" stroke-width="2.4"/></g><g transform="rotate(60)"><path d="M0 -10V-24" stroke="#f4ecc8" stroke-width="2.6"/><path d="M0 -14L-6 -19M0 -14L6 -19M0 -19L-4.5 -23M0 -19L4.5 -23" stroke="#f4ecc8" stroke-width="2.4"/></g><g transform="rotate(120)"><path d="M0 -10V-24" stroke="#f4ecc8" stroke-width="2.6"/><path d="M0 -14L-6 -19M0 -14L6 -19M0 -19L-4.5 -23M0 -19L4.5 -23" stroke="#f4ecc8" stroke-width="2.4"/></g><g transform="rotate(180)"><path d="M0 -10V-24" stroke="#f4ecc8" stroke-width="2.6"/><path d="M0 -14L-6 -19M0 -14L6 -19M0 -19L-4.5 -23M0 -19L4.5 -23" stroke="#f4ecc8" stroke-width="2.4"/></g><g transform="rotate(240)"><path d="M0 -10V-24" stroke="#f4ecc8" stroke-width="2.6"/><path d="M0 -14L-6 -19M0 -14L6 -19M0 -19L-4.5 -23M0 -19L4.5 -23" stroke="#f4ecc8" stroke-width="2.4"/></g><g transform="rotate(300)"><path d="M0 -10V-24" stroke="#f4ecc8" stroke-width="2.6"/><path d="M0 -14L-6 -19M0 -14L6 -19M0 -19L-4.5 -23M0 -19L4.5 -23" stroke="#f4ecc8" stroke-width="2.4"/></g><circle r="6.8" fill="none" stroke="#f4ecc8" stroke-width="2.8"/><g transform="rotate(30)"><path d="M0 -1L-0.9 -4.5L0 -5L0.9 -4.5Z" fill="#f4ecc8"/></g><g transform="rotate(90)"><path d="M0 -1L-0.9 -4.5L0 -5L0.9 -4.5Z" fill="#f4ecc8"/></g><g transform="rotate(150)"><path d="M0 -1L-0.9 -4.5L0 -5L0.9 -4.5Z" fill="#f4ecc8"/></g><g transform="rotate(210)"><path d="M0 -1L-0.9 -4.5L0 -5L0.9 -4.5Z" fill="#f4ecc8"/></g><g transform="rotate(270)"><path d="M0 -1L-0.9 -4.5L0 -5L0.9 -4.5Z" fill="#f4ecc8"/></g><g transform="rotate(330)"><path d="M0 -1L-0.9 -4.5L0 -5L0.9 -4.5Z" fill="#f4ecc8"/></g></g></svg>
<svg style="position:absolute;left:0;top:0" width="1920" height="1041" viewBox="0 0 1920 1041"><rect x="1061.5" y="299.5" width="44" height="48" fill="none" stroke="#ffffff" stroke-width="1.4"/><rect x="1061.5" y="299.5" width="44" height="48" fill="none" stroke="#c8151c" stroke-width="1.4" stroke-dasharray="3 2"/><rect x="1058.1" y="296.3" width="6.4" height="6.4" fill="#fff" stroke="#c8151c" stroke-width="1.3"/><rect x="1080.2" y="296.3" width="6.4" height="6.4" fill="#fff" stroke="#c8151c" stroke-width="1.3"/><rect x="1102.2" y="296.3" width="6.4" height="6.4" fill="#fff" stroke="#c8151c" stroke-width="1.3"/><rect x="1058.1" y="320.4" width="6.4" height="6.4" fill="#fff" stroke="#c8151c" stroke-width="1.3"/><rect x="1102.2" y="320.4" width="6.4" height="6.4" fill="#fff" stroke="#c8151c" stroke-width="1.3"/><rect x="1058.1" y="344.5" width="6.4" height="6.4" fill="#fff" stroke="#c8151c" stroke-width="1.3"/><rect x="1080.2" y="344.5" width="6.4" height="6.4" fill="#fff" stroke="#c8151c" stroke-width="1.3"/><rect x="1102.2" y="344.5" width="6.4" height="6.4" fill="#fff" stroke="#c8151c" stroke-width="1.3"/><rect x="1093.2" y="295" width="7.8" height="7.3" fill="#e5121b"/></svg>
<div style="left:596px;top:205px;width:209px;height:243px;background:#4a4a4a;border:1px solid #242424;border-radius:3px 3px 0 0;box-sizing:border-box;overflow:hidden"></div>
<div style="left:597px;top:206px;width:207px;height:12px;background:#2f2f2f;border-radius:2px 2px 0 0"></div>
<svg style="position:absolute;left:776px;top:210px;" width="8" height="5" viewBox="0 0 8 5"><path d="M4 0V5L0 2.5Z M8 0V5L4 2.5Z" fill="#cfcfcf"/></svg>
<svg style="position:absolute;left:793px;top:209px;" width="7" height="7" viewBox="0 0 7 7"><path d="M1 1L6 6M6 1L1 6" stroke="#d8d8d8" stroke-width="1.6"/></svg>
<div style="left:597px;top:218px;width:207px;height:18px;background:#383838"></div>
<div style="left:597px;top:235px;width:207px;height:1px;background:#2a2a2a"></div>
<div style="left:597px;top:218px;width:69px;height:18px;background:#4a4a4a"></div>
<div style="left:666px;top:218px;width:1px;height:18px;background:#2a2a2a"></div>
<svg style="position:absolute;left:603px;top:223px;" width="6" height="9" viewBox="0 0 6 9"><path d="M0.5 3.5L3 1L5.5 3.5M0.5 5.5L3 8L5.5 5.5" fill="none" stroke="#d8d8d8" stroke-width="1.1"/></svg>
<div style="left:611px;top:221.54px;font:bold 9.5px 'Liberation Sans', sans-serif;color:#e2e2e2;white-space:nowrap;line-height:normal;">Farbfelder</div>
<svg style="position:absolute;left:785px;top:224px;" width="16" height="8" viewBox="0 0 16 8"><path d="M0 2H4L2 4.5Z" fill="#d8d8d8"/><path d="M6 0.5H15M6 2.5H15M6 4.5H15M6 6.5H15" stroke="#d8d8d8"/></svg>
<svg style="position:absolute;left:601px;top:237px;" width="24" height="22" viewBox="0 0 24 22"><path d="M15 2.5H17.5A2 2 0 0 1 19.5 4.5V7" fill="none" stroke="#d8d8d8" stroke-width="1.1"/><path d="M16 0.5L14 2.5L16 4.5M17.5 5.5L19.5 7.5L21.5 5.5" fill="none" stroke="#d8d8d8" stroke-width="1.1"/><rect x="9" y="9" width="11" height="11" fill="#fff"/><rect x="10.5" y="10.5" width="8" height="8" fill="#4a4a4a"/><path d="M10 19L19 10" stroke="#e0161e" stroke-width="2.5"/><rect x="1" y="2" width="11" height="11" fill="#fcf0c9" stroke="#353535"/></svg>
<div style="left:634px;top:243px;width:14px;height:13px;background:#2c2c2c"></div>
<div style="left:637px;top:246px;width:9px;height:8px;border:1px solid #d0d0d0;background:#555;box-sizing:border-box"></div>
<div style="left:650.5px;top:241.98px;font:normal 13px 'Liberation Serif', serif;color:#8e8e8e;white-space:nowrap;line-height:normal;">T</div>
<div style="left:690px;top:243.67px;font:normal 8.9px 'Liberation Sans', sans-serif;color:#c8c8c8;white-space:nowrap;line-height:normal;">Farbton:</div>
<div style="left:728px;top:242px;width:32px;height:13px;background:linear-gradient(#c2c2c2,#b4b4b4);border:1px solid #2e2e2e;box-sizing:border-box"></div>
<div style="left:731px;top:243.04px;font:normal 9.2px 'Liberation Sans', sans-serif;color:#121212;white-space:nowrap;line-height:normal;">100</div>
<div style="left:759px;top:242px;width:14px;height:13px;background:#5d5d5d;border:1px solid #2e2e2e;box-sizing:border-box"></div>
<svg style="position:absolute;left:759px;top:242px;" width="14" height="13" viewBox="0 0 14 13"><path d="M5.0 2.5V10.5L10.0 6.5Z" fill="#dcdcdc"/></svg>
<div style="left:774px;top:243.67px;font:normal 8.9px 'Liberation Sans', sans-serif;color:#c8c8c8;white-space:nowrap;line-height:normal;">%</div>
<div style="left:597px;top:260px;width:195px;height:1px;background:#2a2a2a"></div>
<div style="left:597px;top:261px;width:195px;height:20px;background:#4b4b4b"></div>
<div style="left:597px;top:280px;width:195px;height:1px;background:#3a3a3a"></div>
<div style="left:598px;top:264px;width:13px;height:13px;background:#5ba32e;border:1px solid #1e1e1e;box-sizing:border-box"></div>
<div style="left:619px;top:265.18px;font:normal 9.3px 'Liberation Sans', sans-serif;color:#d0d0d0;white-space:nowrap;line-height:normal;">C=75 M=5 Y=100 K=0</div>
<svg style="position:absolute;left:759px;top:265px;" width="12" height="12" viewBox="0 0 12 12"><rect x="0" y="0" width="12" height="12" fill="#e8e8e8"/><rect x="1" y="1" width="1" height="1" fill="#3a3a3a"/><rect x="1" y="3" width="1" height="1" fill="#3a3a3a"/><rect x="1" y="5" width="1" height="1" fill="#3a3a3a"/><rect x="1" y="7" width="1" height="1" fill="#3a3a3a"/><rect x="1" y="9" width="1" height="1" fill="#3a3a3a"/><rect x="2" y="2" width="1" height="1" fill="#3a3a3a"/><rect x="2" y="4" width="1" height="1" fill="#3a3a3a"/><rect x="2" y="6" width="1" height="1" fill="#3a3a3a"/><rect x="2" y="8" width="1" height="1" fill="#3a3a3a"/><rect x="2" y="10" width="1" height="1" fill="#3a3a3a"/><rect x="3" y="1" width="1" height="1" fill="#3a3a3a"/><rect x="3" y="3" width="1" height="1" fill="#3a3a3a"/><rect x="3" y="5" width="1" height="1" fill="#3a3a3a"/><rect x="3" y="7" width="1" height="1" fill="#3a3a3a"/><rect x="3" y="9" width="1" height="1" fill="#3a3a3a"/><rect x="4" y="2" width="1" height="1" fill="#3a3a3a"/><rect x="4" y="4" width="1" height="1" fill="#3a3a3a"/><rect x="4" y="6" width="1" height="1" fill="#3a3a3a"/><rect x="4" y="8" width="1" height="1" fill="#3a3a3a"/><rect x="4" y="10" width="1" height="1" fill="#3a3a3a"/><rect x="5" y="1" width="1" height="1" fill="#3a3a3a"/><rect x="5" y="3" width="1" height="1" fill="#3a3a3a"/><rect x="5" y="5" width="1" height="1" fill="#3a3a3a"/><rect x="5" y="7" width="1" height="1" fill="#3a3a3a"/><rect x="5" y="9" width="1" height="1" fill="#3a3a3a"/><rect x="6" y="2" width="1" height="1" fill="#3a3a3a"/><rect x="6" y="4" width="1" height="1" fill="#3a3a3a"/><rect x="6" y="6" width="1" height="1" fill="#3a3a3a"/><rect x="6" y="8" width="1" height="1" fill="#3a3a3a"/><rect x="6" y="10" width="1" height="1" fill="#3a3a3a"/><rect x="7" y="1" width="1" height="1" fill="#3a3a3a"/><rect x="7" y="3" width="1" height="1" fill="#3a3a3a"/><rect x="7" y="5" width="1" height="1" fill="#3a3a3a"/><rect x="7" y="7" width="1" height="1" fill="#3a3a3a"/><rect x="7" y="9" width="1" height="1" fill="#3a3a3a"/><rect x="8" y="2" width="1" height="1" fill="#3a3a3a"/><rect x="8" y="4" width="1" height="1" fill="#3a3a3a"/><rect x="8" y="6" width="1" height="1" fill="#3a3a3a"/><rect x="8" y="8" width="1" height="1" fill="#3a3a3a"/><rect x="8" y="10" width="1" height="1" fill="#3a3a3a"/><rect x="9" y="1" width="1" height="1" fill="#3a3a3a"/><rect x="9" y="3" width="1" height="1" fill="#3a3a3a"/><rect x="9" y="5" width="1" height="1" fill="#3a3a3a"/><rect x="9" y="7" width="1" height="1" fill="#3a3a3a"/><rect x="9" y="9" width="1" height="1" fill="#3a3a3a"/><rect x="10" y="2" width="1" height="1" fill="#3a3a3a"/><rect x="10" y="4" width="1" height="1" fill="#3a3a3a"/><rect x="10" y="6" width="1" height="1" fill="#3a3a3a"/><rect x="10" y="8" width="1" height="1" fill="#3a3a3a"/><rect x="10" y="10" width="1" height="1" fill="#3a3a3a"/></svg>
<svg style="position:absolute;left:775px;top:265px;" width="12" height="12" viewBox="0 0 12 12"><rect x="0" y="0" width="12" height="12" fill="#f4f4f4"/><path d="M1 1H11L6 6Z" fill="#e614c8"/><path d="M1 11H11L6 6Z" fill="#0a0a0a"/><path d="M1 1V11L6 6Z" fill="#2fd6e0"/><path d="M11 1V11L6 6Z" fill="#e0e020"/><path d="M1.5 1.5L6 6" stroke="#111" stroke-width="1"/></svg>
<div style="left:597px;top:281px;width:195px;height:20px;background:#4b4b4b"></div>
<div style="left:597px;top:300px;width:195px;height:1px;background:#3a3a3a"></div>
<div style="left:598px;top:284px;width:13px;height:13px;background:#1f3b8c;border:1px solid #1e1e1e;box-sizing:border-box"></div>
<div style="left:619px;top:285.18px;font:normal 9.3px 'Liberation Sans', sans-serif;color:#d0d0d0;white-space:nowrap;line-height:normal;">C=100 M=90 Y=10 K=0</div>
<svg style="position:absolute;left:759px;top:285px;" width="12" height="12" viewBox="0 0 12 12"><rect x="0" y="0" width="12" height="12" fill="#e8e8e8"/><rect x="1" y="1" width="1" height="1" fill="#3a3a3a"/><rect x="1" y="3" width="1" height="1" fill="#3a3a3a"/><rect x="1" y="5" width="1" height="1" fill="#3a3a3a"/><rect x="1" y="7" width="1" height="1" fill="#3a3a3a"/><rect x="1" y="9" width="1" height="1" fill="#3a3a3a"/><rect x="2" y="2" width="1" height="1" fill="#3a3a3a"/><rect x="2" y="4" width="1" height="1" fill="#3a3a3a"/><rect x="2" y="6" width="1" height="1" fill="#3a3a3a"/><rect x="2" y="8" width="1" height="1" fill="#3a3a3a"/><rect x="2" y="10" width="1" height="1" fill="#3a3a3a"/><rect x="3" y="1" width="1" height="1" fill="#3a3a3a"/><rect x="3" y="3" width="1" height="1" fill="#3a3a3a"/><rect x="3" y="5" width="1" height="1" fill="#3a3a3a"/><rect x="3" y="7" width="1" height="1" fill="#3a3a3a"/><rect x="3" y="9" width="1" height="1" fill="#3a3a3a"/><rect x="4" y="2" width="1" height="1" fill="#3a3a3a"/><rect x="4" y="4" width="1" height="1" fill="#3a3a3a"/><rect x="4" y="6" width="1" height="1" fill="#3a3a3a"/><rect x="4" y="8" width="1" height="1" fill="#3a3a3a"/><rect x="4" y="10" width="1" height="1" fill="#3a3a3a"/><rect x="5" y="1" width="1" height="1" fill="#3a3a3a"/><rect x="5" y="3" width="1" height="1" fill="#3a3a3a"/><rect x="5" y="5" width="1" height="1" fill="#3a3a3a"/><rect x="5" y="7" width="1" height="1" fill="#3a3a3a"/><rect x="5" y="9" width="1" height="1" fill="#3a3a3a"/><rect x="6" y="2" width="1" height="1" fill="#3a3a3a"/><rect x="6" y="4" width="1" height="1" fill="#3a3a3a"/><rect x="6" y="6" width="1" height="1" fill="#3a3a3a"/><rect x="6" y="8" width="1" height="1" fill="#3a3a3a"/><rect x="6" y="10" width="1" height="1" fill="#3a3a3a"/><rect x="7" y="1" width="1" height="1" fill="#3a3a3a"/><rect x="7" y="3" width="1" height="1" fill="#3a3a3a"/><rect x="7" y="5" width="1" height="1" fill="#3a3a3a"/><rect x="7" y="7" width="1" height="1" fill="#3a3a3a"/><rect x="7" y="9" width="1" height="1" fill="#3a3a3a"/><rect x="8" y="2" width="1" height="1" fill="#3a3a3a"/><rect x="8" y="4" width="1" height="1" fill="#3a3a3a"/><rect x="8" y="6" width="1" height="1" fill="#3a3a3a"/><rect x="8" y="8" width="1" height="1" fill="#3a3a3a"/><rect x="8" y="10" width="1" height="1" fill="#3a3a3a"/><rect x="9" y="1" width="1" height="1" fill="#3a3a3a"/><rect x="9" y="3" width="1" height="1" fill="#3a3a3a"/><rect x="9" y="5" width="1" height="1" fill="#3a3a3a"/><rect x="9" y="7" width="1" height="1" fill="#3a3a3a"/><rect x="9" y="9" width="1" height="1" fill="#3a3a3a"/><rect x="10" y="2" width="1" height="1" fill="#3a3a3a"/><rect x="10" y="4" width="1" height="1" fill="#3a3a3a"/><rect x="10" y="6" width="1" height="1" fill="#3a3a3a"/><rect x="10" y="8" width="1" height="1" fill="#3a3a3a"/><rect x="10" y="10" width="1" height="1" fill="#3a3a3a"/></svg>
<svg style="position:absolute;left:775px;top:285px;" width="12" height="12" viewBox="0 0 12 12"><rect x="0" y="0" width="12" height="12" fill="#f4f4f4"/><path d="M1 1H11L6 6Z" fill="#e614c8"/><path d="M1 11H11L6 6Z" fill="#0a0a0a"/><path d="M1 1V11L6 6Z" fill="#2fd6e0"/><path d="M11 1V11L6 6Z" fill="#e0e020"/><path d="M1.5 1.5L6 6" stroke="#111" stroke-width="1"/></svg>
<div style="left:597px;top:301px;width:195px;height:20px;background:#4b4b4b"></div>
<div style="left:597px;top:320px;width:195px;height:1px;background:#3a3a3a"></div>
<div style="left:598px;top:304px;width:13px;height:13px;background:#e3651f;border:1px solid #1e1e1e;box-sizing:border-box"></div>
<div style="left:619px;top:305.18px;font:normal 9.3px 'Liberation Sans', sans-serif;color:#d0d0d0;white-space:nowrap;line-height:normal;">c0m76y100k0</div>
<svg style="position:absolute;left:759px;top:305px;" width="12" height="12" viewBox="0 0 12 12"><rect x="0" y="0" width="12" height="12" fill="#e8e8e8"/><rect x="1" y="1" width="1" height="1" fill="#3a3a3a"/><rect x="1" y="3" width="1" height="1" fill="#3a3a3a"/><rect x="1" y="5" width="1" height="1" fill="#3a3a3a"/><rect x="1" y="7" width="1" height="1" fill="#3a3a3a"/><rect x="1" y="9" width="1" height="1" fill="#3a3a3a"/><rect x="2" y="2" width="1" height="1" fill="#3a3a3a"/><rect x="2" y="4" width="1" height="1" fill="#3a3a3a"/><rect x="2" y="6" width="1" height="1" fill="#3a3a3a"/><rect x="2" y="8" width="1" height="1" fill="#3a3a3a"/><rect x="2" y="10" width="1" height="1" fill="#3a3a3a"/><rect x="3" y="1" width="1" height="1" fill="#3a3a3a"/><rect x="3" y="3" width="1" height="1" fill="#3a3a3a"/><rect x="3" y="5" width="1" height="1" fill="#3a3a3a"/><rect x="3" y="7" width="1" height="1" fill="#3a3a3a"/><rect x="3" y="9" width="1" height="1" fill="#3a3a3a"/><rect x="4" y="2" width="1" height="1" fill="#3a3a3a"/><rect x="4" y="4" width="1" height="1" fill="#3a3a3a"/><rect x="4" y="6" width="1" height="1" fill="#3a3a3a"/><rect x="4" y="8" width="1" height="1" fill="#3a3a3a"/><rect x="4" y="10" width="1" height="1" fill="#3a3a3a"/><rect x="5" y="1" width="1" height="1" fill="#3a3a3a"/><rect x="5" y="3" width="1" height="1" fill="#3a3a3a"/><rect x="5" y="5" width="1" height="1" fill="#3a3a3a"/><rect x="5" y="7" width="1" height="1" fill="#3a3a3a"/><rect x="5" y="9" width="1" height="1" fill="#3a3a3a"/><rect x="6" y="2" width="1" height="1" fill="#3a3a3a"/><rect x="6" y="4" width="1" height="1" fill="#3a3a3a"/><rect x="6" y="6" width="1" height="1" fill="#3a3a3a"/><rect x="6" y="8" width="1" height="1" fill="#3a3a3a"/><rect x="6" y="10" width="1" height="1" fill="#3a3a3a"/><rect x="7" y="1" width="1" height="1" fill="#3a3a3a"/><rect x="7" y="3" width="1" height="1" fill="#3a3a3a"/><rect x="7" y="5" width="1" height="1" fill="#3a3a3a"/><rect x="7" y="7" width="1" height="1" fill="#3a3a3a"/><rect x="7" y="9" width="1" height="1" fill="#3a3a3a"/><rect x="8" y="2" width="1" height="1" fill="#3a3a3a"/><rect x="8" y="4" width="1" height="1" fill="#3a3a3a"/><rect x="8" y="6" width="1" height="1" fill="#3a3a3a"/><rect x="8" y="8" width="1" height="1" fill="#3a3a3a"/><rect x="8" y="10" width="1" height="1" fill="#3a3a3a"/><rect x="9" y="1" width="1" height="1" fill="#3a3a3a"/><rect x="9" y="3" width="1" height="1" fill="#3a3a3a"/><rect x="9" y="5" width="1" height="1" fill="#3a3a3a"/><rect x="9" y="7" width="1" height="1" fill="#3a3a3a"/><rect x="9" y="9" width="1" height="1" fill="#3a3a3a"/><rect x="10" y="2" width="1" height="1" fill="#3a3a3a"/><rect x="10" y="4" width="1" height="1" fill="#3a3a3a"/><rect x="10" y="6" width="1" height="1" fill="#3a3a3a"/><rect x="10" y="8" width="1" height="1" fill="#3a3a3a"/><rect x="10" y="10" width="1" height="1" fill="#3a3a3a"/></svg>
<svg style="position:absolute;left:775px;top:305px;" width="12" height="12" viewBox="0 0 12 12"><rect x="0" y="0" width="12" height="12" fill="#f4f4f4"/><path d="M1 1H11L6 6Z" fill="#e614c8"/><path d="M1 11H11L6 6Z" fill="#0a0a0a"/><path d="M1 1V11L6 6Z" fill="#2fd6e0"/><path d="M11 1V11L6 6Z" fill="#e0e020"/><path d="M1.5 1.5L6 6" stroke="#111" stroke-width="1"/></svg>
<div style="left:597px;top:321px;width:195px;height:20px;background:#4b4b4b"></div>
<div style="left:597px;top:340px;width:195px;height:1px;background:#3a3a3a"></div>
<div style="left:598px;top:324px;width:13px;height:13px;background:#c8c8c8;border:1px solid #1e1e1e;box-sizing:border-box"></div>
<div style="left:619px;top:325.18px;font:normal 9.3px 'Liberation Sans', sans-serif;color:#d0d0d0;white-space:nowrap;line-height:normal;">c0m0y0k30</div>
<svg style="position:absolute;left:759px;top:325px;" width="12" height="12" viewBox="0 0 12 12"><rect x="0" y="0" width="12" height="12" fill="#e8e8e8"/><rect x="1" y="1" width="1" height="1" fill="#3a3a3a"/><rect x="1" y="3" width="1" height="1" fill="#3a3a3a"/><rect x="1" y="5" width="1" height="1" fill="#3a3a3a"/><rect x="1" y="7" width="1" height="1" fill="#3a3a3a"/><rect x="1" y="9" width="1" height="1" fill="#3a3a3a"/><rect x="2" y="2" width="1" height="1" fill="#3a3a3a"/><rect x="2" y="4" width="1" height="1" fill="#3a3a3a"/><rect x="2" y="6" width="1" height="1" fill="#3a3a3a"/><rect x="2" y="8" width="1" height="1" fill="#3a3a3a"/><rect x="2" y="10" width="1" height="1" fill="#3a3a3a"/><rect x="3" y="1" width="1" height="1" fill="#3a3a3a"/><rect x="3" y="3" width="1" height="1" fill="#3a3a3a"/><rect x="3" y="5" width="1" height="1" fill="#3a3a3a"/><rect x="3" y="7" width="1" height="1" fill="#3a3a3a"/><rect x="3" y="9" width="1" height="1" fill="#3a3a3a"/><rect x="4" y="2" width="1" height="1" fill="#3a3a3a"/><rect x="4" y="4" width="1" height="1" fill="#3a3a3a"/><rect x="4" y="6" width="1" height="1" fill="#3a3a3a"/><rect x="4" y="8" width="1" height="1" fill="#3a3a3a"/><rect x="4" y="10" width="1" height="1" fill="#3a3a3a"/><rect x="5" y="1" width="1" height="1" fill="#3a3a3a"/><rect x="5" y="3" width="1" height="1" fill="#3a3a3a"/><rect x="5" y="5" width="1" height="1" fill="#3a3a3a"/><rect x="5" y="7" width="1" height="1" fill="#3a3a3a"/><rect x="5" y="9" width="1" height="1" fill="#3a3a3a"/><rect x="6" y="2" width="1" height="1" fill="#3a3a3a"/><rect x="6" y="4" width="1" height="1" fill="#3a3a3a"/><rect x="6" y="6" width="1" height="1" fill="#3a3a3a"/><rect x="6" y="8" width="1" height="1" fill="#3a3a3a"/><rect x="6" y="10" width="1" height="1" fill="#3a3a3a"/><rect x="7" y="1" width="1" height="1" fill="#3a3a3a"/><rect x="7" y="3" width="1" height="1" fill="#3a3a3a"/><rect x="7" y="5" width="1" height="1" fill="#3a3a3a"/><rect x="7" y="7" width="1" height="1" fill="#3a3a3a"/><rect x="7" y="9" width="1" height="1" fill="#3a3a3a"/><rect x="8" y="2" width="1" height="1" fill="#3a3a3a"/><rect x="8" y="4" width="1" height="1" fill="#3a3a3a"/><rect x="8" y="6" width="1" height="1" fill="#3a3a3a"/><rect x="8" y="8" width="1" height="1" fill="#3a3a3a"/><rect x="8" y="10" width="1" height="1" fill="#3a3a3a"/><rect x="9" y="1" width="1" height="1" fill="#3a3a3a"/><rect x="9" y="3" width="1" height="1" fill="#3a3a3a"/><rect x="9" y="5" width="1" height="1" fill="#3a3a3a"/><rect x="9" y="7" width="1" height="1" fill="#3a3a3a"/><rect x="9" y="9" width="1" height="1" fill="#3a3a3a"/><rect x="10" y="2" width="1" height="1" fill="#3a3a3a"/><rect x="10" y="4" width="1" height="1" fill="#3a3a3a"/><rect x="10" y="6" width="1" height="1" fill="#3a3a3a"/><rect x="10" y="8" width="1" height="1" fill="#3a3a3a"/><rect x="10" y="10" width="1" height="1" fill="#3a3a3a"/></svg>
<svg style="position:absolute;left:775px;top:325px;" width="12" height="12" viewBox="0 0 12 12"><rect x="0" y="0" width="12" height="12" fill="#f4f4f4"/><path d="M1 1H11L6 6Z" fill="#e614c8"/><path d="M1 11H11L6 6Z" fill="#0a0a0a"/><path d="M1 1V11L6 6Z" fill="#2fd6e0"/><path d="M11 1V11L6 6Z" fill="#e0e020"/><path d="M1.5 1.5L6 6" stroke="#111" stroke-width="1"/></svg>
<div style="left:597px;top:341px;width:195px;height:20px;background:#4b4b4b"></div>
<div style="left:597px;top:360px;width:195px;height:1px;background:#3a3a3a"></div>
<div style="left:598px;top:344px;width:13px;height:13px;background:#9e9e9e;border:1px solid #1e1e1e;box-sizing:border-box"></div>
<div style="left:619px;top:345.18px;font:normal 9.3px 'Liberation Sans', sans-serif;color:#d0d0d0;white-space:nowrap;line-height:normal;">c0m0y0k50</div>
<svg style="position:absolute;left:759px;top:345px;" width="12" height="12" viewBox="0 0 12 12"><rect x="0" y="0" width="12" height="12" fill="#e8e8e8"/><rect x="1" y="1" width="1" height="1" fill="#3a3a3a"/><rect x="1" y="3" width="1" height="1" fill="#3a3a3a"/><rect x="1" y="5" width="1" height="1" fill="#3a3a3a"/><rect x="1" y="7" width="1" height="1" fill="#3a3a3a"/><rect x="1" y="9" width="1" height="1" fill="#3a3a3a"/><rect x="2" y="2" width="1" height="1" fill="#3a3a3a"/><rect x="2" y="4" width="1" height="1" fill="#3a3a3a"/><rect x="2" y="6" width="1" height="1" fill="#3a3a3a"/><rect x="2" y="8" width="1" height="1" fill="#3a3a3a"/><rect x="2" y="10" width="1" height="1" fill="#3a3a3a"/><rect x="3" y="1" width="1" height="1" fill="#3a3a3a"/><rect x="3" y="3" width="1" height="1" fill="#3a3a3a"/><rect x="3" y="5" width="1" height="1" fill="#3a3a3a"/><rect x="3" y="7" width="1" height="1" fill="#3a3a3a"/><rect x="3" y="9" width="1" height="1" fill="#3a3a3a"/><rect x="4" y="2" width="1" height="1" fill="#3a3a3a"/><rect x="4" y="4" width="1" height="1" fill="#3a3a3a"/><rect x="4" y="6" width="1" height="1" fill="#3a3a3a"/><rect x="4" y="8" width="1" height="1" fill="#3a3a3a"/><rect x="4" y="10" width="1" height="1" fill="#3a3a3a"/><rect x="5" y="1" width="1" height="1" fill="#3a3a3a"/><rect x="5" y="3" width="1" height="1" fill="#3a3a3a"/><rect x="5" y="5" width="1" height="1" fill="#3a3a3a"/><rect x="5" y="7" width="1" height="1" fill="#3a3a3a"/><rect x="5" y="9" width="1" height="1" fill="#3a3a3a"/><rect x="6" y="2" width="1" height="1" fill="#3a3a3a"/><rect x="6" y="4" width="1" height="1" fill="#3a3a3a"/><rect x="6" y="6" width="1" height="1" fill="#3a3a3a"/><rect x="6" y="8" width="1" height="1" fill="#3a3a3a"/><rect x="6" y="10" width="1" height="1" fill="#3a3a3a"/><rect x="7" y="1" width="1" height="1" fill="#3a3a3a"/><rect x="7" y="3" width="1" height="1" fill="#3a3a3a"/><rect x="7" y="5" width="1" height="1" fill="#3a3a3a"/><rect x="7" y="7" width="1" height="1" fill="#3a3a3a"/><rect x="7" y="9" width="1" height="1" fill="#3a3a3a"/><rect x="8" y="2" width="1" height="1" fill="#3a3a3a"/><rect x="8" y="4" width="1" height="1" fill="#3a3a3a"/><rect x="8" y="6" width="1" height="1" fill="#3a3a3a"/><rect x="8" y="8" width="1" height="1" fill="#3a3a3a"/><rect x="8" y="10" width="1" height="1" fill="#3a3a3a"/><rect x="9" y="1" width="1" height="1" fill="#3a3a3a"/><rect x="9" y="3" width="1" height="1" fill="#3a3a3a"/><rect x="9" y="5" width="1" height="1" fill="#3a3a3a"/><rect x="9" y="7" width="1" height="1" fill="#3a3a3a"/><rect x="9" y="9" width="1" height="1" fill="#3a3a3a"/><rect x="10" y="2" width="1" height="1" fill="#3a3a3a"/><rect x="10" y="4" width="1" height="1" fill="#3a3a3a"/><rect x="10" y="6" width="1" height="1" fill="#3a3a3a"/><rect x="10" y="8" width="1" height="1" fill="#3a3a3a"/><rect x="10" y="10" width="1" height="1" fill="#3a3a3a"/></svg>
<svg style="position:absolute;left:775px;top:345px;" width="12" height="12" viewBox="0 0 12 12"><rect x="0" y="0" width="12" height="12" fill="#f4f4f4"/><path d="M1 1H11L6 6Z" fill="#e614c8"/><path d="M1 11H11L6 6Z" fill="#0a0a0a"/><path d="M1 1V11L6 6Z" fill="#2fd6e0"/><path d="M11 1V11L6 6Z" fill="#e0e020"/><path d="M1.5 1.5L6 6" stroke="#111" stroke-width="1"/></svg>
<div style="left:597px;top:361px;width:195px;height:20px;background:#4b4b4b"></div>
<div style="left:597px;top:380px;width:195px;height:1px;background:#3a3a3a"></div>
<div style="left:598px;top:364px;width:13px;height:13px;background:#56a02f;border:1px solid #1e1e1e;box-sizing:border-box"></div>
<div style="left:619px;top:365.18px;font:normal 9.3px 'Liberation Sans', sans-serif;color:#d0d0d0;white-space:nowrap;line-height:normal;">C=75 M=10 Y=100 K=0</div>
<svg style="position:absolute;left:759px;top:365px;" width="12" height="12" viewBox="0 0 12 12"><rect x="0" y="0" width="12" height="12" fill="#e8e8e8"/><rect x="1" y="1" width="1" height="1" fill="#3a3a3a"/><rect x="1" y="3" width="1" height="1" fill="#3a3a3a"/><rect x="1" y="5" width="1" height="1" fill="#3a3a3a"/><rect x="1" y="7" width="1" height="1" fill="#3a3a3a"/><rect x="1" y="9" width="1" height="1" fill="#3a3a3a"/><rect x="2" y="2" width="1" height="1" fill="#3a3a3a"/><rect x="2" y="4" width="1" height="1" fill="#3a3a3a"/><rect x="2" y="6" width="1" height="1" fill="#3a3a3a"/><rect x="2" y="8" width="1" height="1" fill="#3a3a3a"/><rect x="2" y="10" width="1" height="1" fill="#3a3a3a"/><rect x="3" y="1" width="1" height="1" fill="#3a3a3a"/><rect x="3" y="3" width="1" height="1" fill="#3a3a3a"/><rect x="3" y="5" width="1" height="1" fill="#3a3a3a"/><rect x="3" y="7" width="1" height="1" fill="#3a3a3a"/><rect x="3" y="9" width="1" height="1" fill="#3a3a3a"/><rect x="4" y="2" width="1" height="1" fill="#3a3a3a"/><rect x="4" y="4" width="1" height="1" fill="#3a3a3a"/><rect x="4" y="6" width="1" height="1" fill="#3a3a3a"/><rect x="4" y="8" width="1" height="1" fill="#3a3a3a"/><rect x="4" y="10" width="1" height="1" fill="#3a3a3a"/><rect x="5" y="1" width="1" height="1" fill="#3a3a3a"/><rect x="5" y="3" width="1" height="1" fill="#3a3a3a"/><rect x="5" y="5" width="1" height="1" fill="#3a3a3a"/><rect x="5" y="7" width="1" height="1" fill="#3a3a3a"/><rect x="5" y="9" width="1" height="1" fill="#3a3a3a"/><rect x="6" y="2" width="1" height="1" fill="#3a3a3a"/><rect x="6" y="4" width="1" height="1" fill="#3a3a3a"/><rect x="6" y="6" width="1" height="1" fill="#3a3a3a"/><rect x="6" y="8" width="1" height="1" fill="#3a3a3a"/><rect x="6" y="10" width="1" height="1" fill="#3a3a3a"/><rect x="7" y="1" width="1" height="1" fill="#3a3a3a"/><rect x="7" y="3" width="1" height="1" fill="#3a3a3a"/><rect x="7" y="5" width="1" height="1" fill="#3a3a3a"/><rect x="7" y="7" width="1" height="1" fill="#3a3a3a"/><rect x="7" y="9" width="1" height="1" fill="#3a3a3a"/><rect x="8" y="2" width="1" height="1" fill="#3a3a3a"/><rect x="8" y="4" width="1" height="1" fill="#3a3a3a"/><rect x="8" y="6" width="1" height="1" fill="#3a3a3a"/><rect x="8" y="8" width="1" height="1" fill="#3a3a3a"/><rect x="8" y="10" width="1" height="1" fill="#3a3a3a"/><rect x="9" y="1" width="1" height="1" fill="#3a3a3a"/><rect x="9" y="3" width="1" height="1" fill="#3a3a3a"/><rect x="9" y="5" width="1" height="1" fill="#3a3a3a"/><rect x="9" y="7" width="1" height="1" fill="#3a3a3a"/><rect x="9" y="9" width="1" height="1" fill="#3a3a3a"/><rect x="10" y="2" width="1" height="1" fill="#3a3a3a"/><rect x="10" y="4" width="1" height="1" fill="#3a3a3a"/><rect x="10" y="6" width="1" height="1" fill="#3a3a3a"/><rect x="10" y="8" width="1" height="1" fill="#3a3a3a"/><rect x="10" y="10" width="1" height="1" fill="#3a3a3a"/></svg>
<svg style="position:absolute;left:775px;top:365px;" width="12" height="12" viewBox="0 0 12 12"><rect x="0" y="0" width="12" height="12" fill="#f4f4f4"/><path d="M1 1H11L6 6Z" fill="#e614c8"/><path d="M1 11H11L6 6Z" fill="#0a0a0a"/><path d="M1 1V11L6 6Z" fill="#2fd6e0"/><path d="M11 1V11L6 6Z" fill="#e0e020"/><path d="M1.5 1.5L6 6" stroke="#111" stroke-width="1"/></svg>
<div style="left:597px;top:381px;width:195px;height:20px;background:#4b4b4b"></div>
<div style="left:597px;top:400px;width:195px;height:1px;background:#3a3a3a"></div>
<div style="left:598px;top:384px;width:13px;height:13px;background:#70c2bb;border:1px solid #1e1e1e;box-sizing:border-box"></div>
<div style="left:619px;top:385.18px;font:normal 9.3px 'Liberation Sans', sans-serif;color:#d0d0d0;white-space:nowrap;line-height:normal;">C=60 M=0 Y=30 K=0</div>
<svg style="position:absolute;left:759px;top:385px;" width="12" height="12" viewBox="0 0 12 12"><rect x="0" y="0" width="12" height="12" fill="#e8e8e8"/><rect x="1" y="1" width="1" height="1" fill="#3a3a3a"/><rect x="1" y="3" width="1" height="1" fill="#3a3a3a"/><rect x="1" y="5" width="1" height="1" fill="#3a3a3a"/><rect x="1" y="7" width="1" height="1" fill="#3a3a3a"/><rect x="1" y="9" width="1" height="1" fill="#3a3a3a"/><rect x="2" y="2" width="1" height="1" fill="#3a3a3a"/><rect x="2" y="4" width="1" height="1" fill="#3a3a3a"/><rect x="2" y="6" width="1" height="1" fill="#3a3a3a"/><rect x="2" y="8" width="1" height="1" fill="#3a3a3a"/><rect x="2" y="10" width="1" height="1" fill="#3a3a3a"/><rect x="3" y="1" width="1" height="1" fill="#3a3a3a"/><rect x="3" y="3" width="1" height="1" fill="#3a3a3a"/><rect x="3" y="5" width="1" height="1" fill="#3a3a3a"/><rect x="3" y="7" width="1" height="1" fill="#3a3a3a"/><rect x="3" y="9" width="1" height="1" fill="#3a3a3a"/><rect x="4" y="2" width="1" height="1" fill="#3a3a3a"/><rect x="4" y="4" width="1" height="1" fill="#3a3a3a"/><rect x="4" y="6" width="1" height="1" fill="#3a3a3a"/><rect x="4" y="8" width="1" height="1" fill="#3a3a3a"/><rect x="4" y="10" width="1" height="1" fill="#3a3a3a"/><rect x="5" y="1" width="1" height="1" fill="#3a3a3a"/><rect x="5" y="3" width="1" height="1" fill="#3a3a3a"/><rect x="5" y="5" width="1" height="1" fill="#3a3a3a"/><rect x="5" y="7" width="1" height="1" fill="#3a3a3a"/><rect x="5" y="9" width="1" height="1" fill="#3a3a3a"/><rect x="6" y="2" width="1" height="1" fill="#3a3a3a"/><rect x="6" y="4" width="1" height="1" fill="#3a3a3a"/><rect x="6" y="6" width="1" height="1" fill="#3a3a3a"/><rect x="6" y="8" width="1" height="1" fill="#3a3a3a"/><rect x="6" y="10" width="1" height="1" fill="#3a3a3a"/><rect x="7" y="1" width="1" height="1" fill="#3a3a3a"/><rect x="7" y="3" width="1" height="1" fill="#3a3a3a"/><rect x="7" y="5" width="1" height="1" fill="#3a3a3a"/><rect x="7" y="7" width="1" height="1" fill="#3a3a3a"/><rect x="7" y="9" width="1" height="1" fill="#3a3a3a"/><rect x="8" y="2" width="1" height="1" fill="#3a3a3a"/><rect x="8" y="4" width="1" height="1" fill="#3a3a3a"/><rect x="8" y="6" width="1" height="1" fill="#3a3a3a"/><rect x="8" y="8" width="1" height="1" fill="#3a3a3a"/><rect x="8" y="10" width="1" height="1" fill="#3a3a3a"/><rect x="9" y="1" width="1" height="1" fill="#3a3a3a"/><rect x="9" y="3" width="1" height="1" fill="#3a3a3a"/><rect x="9" y="5" width="1" height="1" fill="#3a3a3a"/><rect x="9" y="7" width="1" height="1" fill="#3a3a3a"/><rect x="9" y="9" width="1" height="1" fill="#3a3a3a"/><rect x="10" y="2" width="1" height="1" fill="#3a3a3a"/><rect x="10" y="4" width="1" height="1" fill="#3a3a3a"/><rect x="10" y="6" width="1" height="1" fill="#3a3a3a"/><rect x="10" y="8" width="1" height="1" fill="#3a3a3a"/><rect x="10" y="10" width="1" height="1" fill="#3a3a3a"/></svg>
<svg style="position:absolute;left:775px;top:385px;" width="12" height="12" viewBox="0 0 12 12"><rect x="0" y="0" width="12" height="12" fill="#f4f4f4"/><path d="M1 1H11L6 6Z" fill="#e614c8"/><path d="M1 11H11L6 6Z" fill="#0a0a0a"/><path d="M1 1V11L6 6Z" fill="#2fd6e0"/><path d="M11 1V11L6 6Z" fill="#e0e020"/><path d="M1.5 1.5L6 6" stroke="#111" stroke-width="1"/></svg>
<div style="left:597px;top:401px;width:195px;height:20px;background:#3e4d61"></div>
<div style="left:597px;top:420px;width:195px;height:1px;background:#3a3a3a"></div>
<div style="left:598px;top:404px;width:13px;height:13px;background:#fff2cf;border:1px solid #1e1e1e;box-sizing:border-box"></div>
<div style="left:619px;top:405.18px;font:bold 9.3px 'Liberation Sans', sans-serif;color:#ffffff;white-space:nowrap;line-height:normal;">C=0 M=5 Y=25 K=0</div>
<svg style="position:absolute;left:759px;top:405px;" width="12" height="12" viewBox="0 0 12 12"><rect x="0" y="0" width="12" height="12" fill="#e8e8e8"/><rect x="1" y="1" width="1" height="1" fill="#3a3a3a"/><rect x="1" y="3" width="1" height="1" fill="#3a3a3a"/><rect x="1" y="5" width="1" height="1" fill="#3a3a3a"/><rect x="1" y="7" width="1" height="1" fill="#3a3a3a"/><rect x="1" y="9" width="1" height="1" fill="#3a3a3a"/><rect x="2" y="2" width="1" height="1" fill="#3a3a3a"/><rect x="2" y="4" width="1" height="1" fill="#3a3a3a"/><rect x="2" y="6" width="1" height="1" fill="#3a3a3a"/><rect x="2" y="8" width="1" height="1" fill="#3a3a3a"/><rect x="2" y="10" width="1" height="1" fill="#3a3a3a"/><rect x="3" y="1" width="1" height="1" fill="#3a3a3a"/><rect x="3" y="3" width="1" height="1" fill="#3a3a3a"/><rect x="3" y="5" width="1" height="1" fill="#3a3a3a"/><rect x="3" y="7" width="1" height="1" fill="#3a3a3a"/><rect x="3" y="9" width="1" height="1" fill="#3a3a3a"/><rect x="4" y="2" width="1" height="1" fill="#3a3a3a"/><rect x="4" y="4" width="1" height="1" fill="#3a3a3a"/><rect x="4" y="6" width="1" height="1" fill="#3a3a3a"/><rect x="4" y="8" width="1" height="1" fill="#3a3a3a"/><rect x="4" y="10" width="1" height="1" fill="#3a3a3a"/><rect x="5" y="1" width="1" height="1" fill="#3a3a3a"/><rect x="5" y="3" width="1" height="1" fill="#3a3a3a"/><rect x="5" y="5" width="1" height="1" fill="#3a3a3a"/><rect x="5" y="7" width="1" height="1" fill="#3a3a3a"/><rect x="5" y="9" width="1" height="1" fill="#3a3a3a"/><rect x="6" y="2" width="1" height="1" fill="#3a3a3a"/><rect x="6" y="4" width="1" height="1" fill="#3a3a3a"/><rect x="6" y="6" width="1" height="1" fill="#3a3a3a"/><rect x="6" y="8" width="1" height="1" fill="#3a3a3a"/><rect x="6" y="10" width="1" height="1" fill="#3a3a3a"/><rect x="7" y="1" width="1" height="1" fill="#3a3a3a"/><rect x="7" y="3" width="1" height="1" fill="#3a3a3a"/><rect x="7" y="5" width="1" height="1" fill="#3a3a3a"/><rect x="7" y="7" width="1" height="1" fill="#3a3a3a"/><rect x="7" y="9" width="1" height="1" fill="#3a3a3a"/><rect x="8" y="2" width="1" height="1" fill="#3a3a3a"/><rect x="8" y="4" width="1" height="1" fill="#3a3a3a"/><rect x="8" y="6" width="1" height="1" fill="#3a3a3a"/><rect x="8" y="8" width="1" height="1" fill="#3a3a3a"/><rect x="8" y="10" width="1" height="1" fill="#3a3a3a"/><rect x="9" y="1" width="1" height="1" fill="#3a3a3a"/><rect x="9" y="3" width="1" height="1" fill="#3a3a3a"/><rect x="9" y="5" width="1" height="1" fill="#3a3a3a"/><rect x="9" y="7" width="1" height="1" fill="#3a3a3a"/><rect x="9" y="9" width="1" height="1" fill="#3a3a3a"/><rect x="10" y="2" width="1" height="1" fill="#3a3a3a"/><rect x="10" y="4" width="1" height="1" fill="#3a3a3a"/><rect x="10" y="6" width="1" height="1" fill="#3a3a3a"/><rect x="10" y="8" width="1" height="1" fill="#3a3a3a"/><rect x="10" y="10" width="1" height="1" fill="#3a3a3a"/></svg>
<svg style="position:absolute;left:775px;top:405px;" width="12" height="12" viewBox="0 0 12 12"><rect x="0" y="0" width="12" height="12" fill="#f4f4f4"/><path d="M1 1H11L6 6Z" fill="#e614c8"/><path d="M1 11H11L6 6Z" fill="#0a0a0a"/><path d="M1 1V11L6 6Z" fill="#2fd6e0"/><path d="M11 1V11L6 6Z" fill="#e0e020"/><path d="M1.5 1.5L6 6" stroke="#111" stroke-width="1"/></svg>
<div style="left:792px;top:261px;width:12px;height:160px;background:#3a3a3a"></div>
<svg style="position:absolute;left:794px;top:265px;" width="8" height="6" viewBox="0 0 8 6"><path d="M0 6H8L4 0Z" fill="#e0e0e0"/></svg>
<div style="left:793px;top:342px;width:10px;height:48px;background:#7c7c7c"></div>
<svg style="position:absolute;left:794px;top:411px;" width="8" height="6" viewBox="0 0 8 6"><path d="M0 0H8L4 6Z" fill="#e0e0e0"/></svg>
<div style="left:597px;top:420px;width:207px;height:1px;background:#2a2a2a"></div>
<div style="left:639px;top:421px;width:28px;height:19px;background:#3b3b3b"></div>
<svg style="position:absolute;left:647px;top:425px;" width="12" height="12" viewBox="0 0 12 12"><rect x="0.5" y="0.5" width="11" height="11" fill="#777" stroke="#ccc"/><rect x="2" y="2" width="3" height="3" fill="#eee"/><rect x="7" y="7" width="3" height="3" fill="#eee"/><rect x="7" y="2" width="3" height="3" fill="#aaa"/></svg>
<svg style="position:absolute;left:677px;top:425px;" width="12" height="12" viewBox="0 0 12 12"><rect x="0.5" y="0.5" width="11" height="11" fill="#8a8a8a" stroke="#c8c8c8"/></svg>
<svg style="position:absolute;left:707px;top:425px;" width="12" height="12" viewBox="0 0 12 12"><defs><linearGradient id="g1"><stop offset="0" stop-color="#eee"/><stop offset="1" stop-color="#333"/></linearGradient></defs><rect x="0.5" y="0.5" width="11" height="11" fill="url(#g1)" stroke="#c8c8c8"/></svg>
<svg style="position:absolute;left:737px;top:425px;" width="12" height="12" viewBox="0 0 12 12"><path d="M2 3H11V11H6L2 7Z" fill="#cfcfcf"/><path d="M1 7H5V11" fill="none" stroke="#cfcfcf"/></svg>
<svg style="position:absolute;left:766px;top:424px;" width="13" height="13" viewBox="0 0 13 13"><path d="M1 2.5H12M4.5 2.5V1H8.5V2.5" fill="none" stroke="#cfcfcf" stroke-width="1.3"/><path d="M2 4H11L10 12.5H3Z" fill="#cfcfcf"/><path d="M4.5 5.5V11M6.5 5.5V11M8.5 5.5V11" stroke="#4f4f4f"/></svg>
<svg style="position:absolute;left:792px;top:427px;" width="11" height="11" viewBox="0 0 11 11"><rect x="10" y="10" width="1" height="1" fill="#9a9a9a"/><rect x="10" y="8" width="1" height="1" fill="#9a9a9a"/><rect x="10" y="6" width="1" height="1" fill="#9a9a9a"/><rect x="10" y="4" width="1" height="1" fill="#9a9a9a"/><rect x="10" y="2" width="1" height="1" fill="#9a9a9a"/><rect x="10" y="0" width="1" height="1" fill="#9a9a9a"/><rect x="8" y="10" width="1" height="1" fill="#9a9a9a"/><rect x="8" y="8" width="1" height="1" fill="#9a9a9a"/><rect x="8" y="6" width="1" height="1" fill="#9a9a9a"/><rect x="8" y="4" width="1" height="1" fill="#9a9a9a"/><rect x="8" y="2" width="1" height="1" fill="#9a9a9a"/><rect x="6" y="10" width="1" height="1" fill="#9a9a9a"/><rect x="6" y="8" width="1" height="1" fill="#9a9a9a"/><rect x="6" y="6" width="1" height="1" fill="#9a9a9a"/><rect x="6" y="4" width="1" height="1" fill="#9a9a9a"/><rect x="4" y="10" width="1" height="1" fill="#9a9a9a"/><rect x="4" y="8" width="1" height="1" fill="#9a9a9a"/><rect x="4" y="6" width="1" height="1" fill="#9a9a9a"/><rect x="2" y="10" width="1" height="1" fill="#9a9a9a"/><rect x="2" y="8" width="1" height="1" fill="#9a9a9a"/><rect x="0" y="10" width="1" height="1" fill="#9a9a9a"/></svg>
<div style="left:597px;top:440px;width:207px;height:7px;background:#3a3a3a"></div>
<svg style="position:absolute;left:691px;top:441px;" width="20" height="4" viewBox="0 0 20 4"><rect x="0" y="0" width="1" height="4" fill="#1a1a1a"/><rect x="2" y="0" width="1" height="4" fill="#1a1a1a"/><rect x="4" y="0" width="1" height="4" fill="#1a1a1a"/><rect x="6" y="0" width="1" height="4" fill="#1a1a1a"/><rect x="8" y="0" width="1" height="4" fill="#1a1a1a"/><rect x="10" y="0" width="1" height="4" fill="#1a1a1a"/><rect x="12" y="0" width="1" height="4" fill="#1a1a1a"/><rect x="14" y="0" width="1" height="4" fill="#1a1a1a"/><rect x="16" y="0" width="1" height="4" fill="#1a1a1a"/><rect x="18" y="0" width="1" height="4" fill="#1a1a1a"/></svg>
<div style="left:595px;top:475px;width:209px;height:131px;background:#4a4a4a;border:1px solid #242424;border-radius:3px 3px 0 0;box-sizing:border-box;overflow:hidden"></div>
<div style="left:596px;top:476px;width:207px;height:12px;background:#2f2f2f;border-radius:2px 2px 0 0"></div>
<svg style="position:absolute;left:775px;top:480px;" width="8" height="5" viewBox="0 0 8 5"><path d="M4 0V5L0 2.5Z M8 0V5L4 2.5Z" fill="#cfcfcf"/></svg>
<svg style="position:absolute;left:792px;top:479px;" width="7" height="7" viewBox="0 0 7 7"><path d="M1 1L6 6M6 1L1 6" stroke="#d8d8d8" stroke-width="1.6"/></svg>
<div style="left:596px;top:488px;width:207px;height:18px;background:#383838"></div>
<div style="left:596px;top:505px;width:207px;height:1px;background:#2a2a2a"></div>
<div style="left:596px;top:488px;width:84px;height:18px;background:#4a4a4a"></div>
<div style="left:680px;top:488px;width:1px;height:18px;background:#2a2a2a"></div>
<div style="left:602px;top:491.54px;font:bold 9.5px 'Liberation Sans', sans-serif;color:#e2e2e2;white-space:nowrap;line-height:normal;">Transformieren</div>
<div style="left:722px;top:489px;width:1px;height:16px;background:#2d2d2d"></div>
<div style="left:687px;top:491.54px;font:bold 9.5px 'Liberation Sans', sans-serif;color:#a9a9a9;white-space:nowrap;line-height:normal;">Ausrich</div>
<div style="left:763px;top:489px;width:1px;height:16px;background:#2d2d2d"></div>
<div style="left:729px;top:491.54px;font:bold 9.5px 'Liberation Sans', sans-serif;color:#a9a9a9;white-space:nowrap;line-height:normal;">Pathfin</div>
<svg style="position:absolute;left:784px;top:494px;" width="16" height="8" viewBox="0 0 16 8"><path d="M0 2H4L2 4.5Z" fill="#d8d8d8"/><path d="M6 0.5H15M6 2.5H15M6 4.5H15M6 6.5H15" stroke="#d8d8d8"/></svg>
<svg style="position:absolute;left:602px;top:520px;" width="19" height="19" viewBox="0 0 19 19"><rect x="0.5" y="0.5" width="4" height="4" fill="none" stroke="#d0d0d0"/><rect x="0.5" y="7.5" width="4" height="4" fill="none" stroke="#d0d0d0"/><rect x="0.5" y="14.5" width="4" height="4" fill="none" stroke="#d0d0d0"/><rect x="7.5" y="0.5" width="4" height="4" fill="#d0d0d0" stroke="#d0d0d0"/><rect x="7.5" y="7.5" width="4" height="4" fill="none" stroke="#d0d0d0"/><rect x="7.5" y="14.5" width="4" height="4" fill="none" stroke="#d0d0d0"/><rect x="14.5" y="0.5" width="4" height="4" fill="none" stroke="#d0d0d0"/><rect x="14.5" y="7.5" width="4" height="4" fill="none" stroke="#d0d0d0"/><rect x="14.5" y="14.5" width="4" height="4" fill="none" stroke="#d0d0d0"/><path d="M4.5 2.5H7.5M11.5 2.5H14.5" stroke="#d0d0d0"/><path d="M4.5 9.5H7.5M11.5 9.5H14.5" stroke="#d0d0d0"/><path d="M4.5 16.5H7.5M11.5 16.5H14.5" stroke="#d0d0d0"/><path d="M2.5 4.5V7.5M2.5 11.5V14.5" stroke="#d0d0d0"/><path d="M9.5 4.5V7.5M9.5 11.5V14.5" stroke="#d0d0d0"/><path d="M16.5 4.5V7.5M16.5 11.5V14.5" stroke="#d0d0d0"/></svg>
<div style="left:632px;top:517.50px;font:normal 9.2px 'Liberation Sans', sans-serif;color:#d2d2d2;white-space:nowrap;line-height:normal;">X:</div>
<div style="left:633px;top:538.50px;font:normal 9.2px 'Liberation Sans', sans-serif;color:#d2d2d2;white-space:nowrap;line-height:normal;">Y:</div>
<div style="left:644px;top:515px;width:63px;height:14px;background:linear-gradient(#c2c2c2,#b4b4b4);border:1px solid #2e2e2e;box-sizing:border-box"></div>
<div style="left:647px;top:516.54px;font:normal 9.2px 'Liberation Sans', sans-serif;color:#121212;white-space:nowrap;line-height:normal;">150,5 mm</div>
<div style="left:644px;top:536px;width:63px;height:14px;background:linear-gradient(#c2c2c2,#b4b4b4);border:1px solid #2e2e2e;box-sizing:border-box"></div>
<div style="left:647px;top:537.54px;font:normal 9.2px 'Liberation Sans', sans-serif;color:#121212;white-space:nowrap;line-height:normal;">40,75 mm</div>
<div style="left:721px;top:517.50px;font:normal 9.2px 'Liberation Sans', sans-serif;color:#d2d2d2;white-space:nowrap;line-height:normal;">B:</div>
<div style="left:720px;top:538.50px;font:normal 9.2px 'Liberation Sans', sans-serif;color:#d2d2d2;white-space:nowrap;line-height:normal;">H:</div>
<div style="left:734px;top:515px;width:63px;height:14px;background:linear-gradient(#c2c2c2,#b4b4b4);border:1px solid #2e2e2e;box-sizing:border-box"></div>
<div style="left:737px;top:516.54px;font:normal 9.2px 'Liberation Sans', sans-serif;color:#121212;white-space:nowrap;line-height:normal;">10,5 mm</div>
<div style="left:734px;top:536px;width:63px;height:14px;background:linear-gradient(#c2c2c2,#b4b4b4);border:1px solid #2e2e2e;box-sizing:border-box"></div>
<div style="left:737px;top:537.54px;font:normal 9.2px 'Liberation Sans', sans-serif;color:#121212;white-space:nowrap;line-height:normal;">11,5 mm</div>
<div style="left:602px;top:555px;width:196px;height:1px;background:#393939"></div>
<div style="left:602px;top:556px;width:196px;height:1px;background:#5c5c5c"></div>
<div style="left:601px;top:568px;width:18px;height:23px;background:#3b3b3b;border:1px solid #2e2e2e;box-sizing:border-box"></div>
<svg style="position:absolute;left:601px;top:568px;" width="18" height="23" viewBox="0 0 18 23"><path d="M5.5 10.5V7.5A3.5 3.5 0 0 1 12.5 7.5V10.5M5.5 12.5V15.5A3.5 3.5 0 0 0 12.5 15.5V12.5M9 8.5V14.5" fill="none" stroke="#e0e0e0" stroke-width="1.6"/></svg>
<svg style="position:absolute;left:625px;top:562px;" width="16" height="15" viewBox="0 0 16 15"><rect x="0.5" y="0.5" width="14" height="13" fill="none" stroke="#d0d0d0" stroke-dasharray="1 1"/><path d="M0.5 0.5H14.5V13.5" fill="none" stroke="#d0d0d0"/><path d="M3 7H11M8 4L11 7L8 10" stroke="#e0e0e0" stroke-width="1.5" fill="none"/></svg>
<svg style="position:absolute;left:625px;top:583px;" width="16" height="15" viewBox="0 0 16 15"><rect x="0.5" y="0.5" width="14" height="13" fill="none" stroke="#d0d0d0" stroke-dasharray="1 1"/><path d="M0.5 13.5V0.5H14.5" fill="none" stroke="#d0d0d0"/><path d="M7.5 2V11M4.5 8L7.5 11L10.5 8" stroke="#e0e0e0" stroke-width="1.5" fill="none"/></svg>
<div style="left:644px;top:562px;width:50px;height:14px;background:linear-gradient(#c2c2c2,#b4b4b4);border:1px solid #2e2e2e;box-sizing:border-box"></div>
<div style="left:648px;top:563.54px;font:normal 9.2px 'Liberation Sans', sans-serif;color:#121212;white-space:nowrap;line-height:normal;">100 %</div>
<div style="left:693px;top:562px;width:13px;height:14px;background:#5d5d5d;border:1px solid #2e2e2e;box-sizing:border-box"></div>
<svg style="position:absolute;left:693px;top:562px;" width="13" height="14" viewBox="0 0 13 14"><path d="M2.5 5.0H10.5L6.5 10.0Z" fill="#dcdcdc"/></svg>
<div style="left:644px;top:583px;width:50px;height:14px;background:linear-gradient(#c2c2c2,#b4b4b4);border:1px solid #2e2e2e;box-sizing:border-box"></div>
<div style="left:648px;top:584.54px;font:normal 9.2px 'Liberation Sans', sans-serif;color:#121212;white-space:nowrap;line-height:normal;">100 %</div>
<div style="left:693px;top:583px;width:13px;height:14px;background:#5d5d5d;border:1px solid #2e2e2e;box-sizing:border-box"></div>
<svg style="position:absolute;left:693px;top:583px;" width="13" height="14" viewBox="0 0 13 14"><path d="M2.5 5.0H10.5L6.5 10.0Z" fill="#dcdcdc"/></svg>
<svg style="position:absolute;left:719px;top:563px;" width="14" height="11" viewBox="0 0 14 11"><path d="M1 10H13L9 2Z" fill="none" stroke="#d0d0d0"/><path d="M5 10A4 4 0 0 1 7 6" fill="none" stroke="#d0d0d0"/></svg>
<svg style="position:absolute;left:718px;top:585px;" width="15" height="10" viewBox="0 0 15 10"><path d="M1 9L5 1H14L10 9Z" fill="none" stroke="#d0d0d0"/></svg>
<div style="left:736px;top:562px;width:49px;height:14px;background:linear-gradient(#c2c2c2,#b4b4b4);border:1px solid #2e2e2e;box-sizing:border-box"></div>
<div style="left:739px;top:563.54px;font:normal 9.2px 'Liberation Sans', sans-serif;color:#121212;white-space:nowrap;line-height:normal;">0°</div>
<div style="left:784px;top:562px;width:13px;height:14px;background:#5d5d5d;border:1px solid #2e2e2e;box-sizing:border-box"></div>
<svg style="position:absolute;left:784px;top:562px;" width="13" height="14" viewBox="0 0 13 14"><path d="M2.5 5.0H10.5L6.5 10.0Z" fill="#dcdcdc"/></svg>
<div style="left:736px;top:583px;width:49px;height:14px;background:linear-gradient(#c2c2c2,#b4b4b4);border:1px solid #2e2e2e;box-sizing:border-box"></div>
<div style="left:739px;top:584.54px;font:normal 9.2px 'Liberation Sans', sans-serif;color:#121212;white-space:nowrap;line-height:normal;">0°</div>
<div style="left:784px;top:583px;width:13px;height:14px;background:#5d5d5d;border:1px solid #2e2e2e;box-sizing:border-box"></div>
<svg style="position:absolute;left:784px;top:583px;" width="13" height="14" viewBox="0 0 13 14"><path d="M2.5 5.0H10.5L6.5 10.0Z" fill="#dcdcdc"/></svg>
<div style="left:594px;top:725px;width:209px;height:205px;background:#4a4a4a;border:1px solid #242424;border-radius:3px 3px 0 0;box-sizing:border-box;overflow:hidden"></div>
<div style="left:595px;top:726px;width:207px;height:13px;background:#2f2f2f;border-radius:2px 2px 0 0"></div>
<svg style="position:absolute;left:774px;top:730px;" width="8" height="5" viewBox="0 0 8 5"><path d="M4 0V5L0 2.5Z M8 0V5L4 2.5Z" fill="#cfcfcf"/></svg>
<svg style="position:absolute;left:791px;top:729px;" width="7" height="7" viewBox="0 0 7 7"><path d="M1 1L6 6M6 1L1 6" stroke="#d8d8d8" stroke-width="1.6"/></svg>
<div style="left:595px;top:739px;width:207px;height:17px;background:#383838"></div>
<div style="left:595px;top:755px;width:207px;height:1px;background:#2a2a2a"></div>
<div style="left:595px;top:739px;width:56px;height:17px;background:#4a4a4a"></div>
<div style="left:651px;top:739px;width:1px;height:17px;background:#2a2a2a"></div>
<svg style="position:absolute;left:601px;top:744px;" width="6" height="9" viewBox="0 0 6 9"><path d="M0.5 3.5L3 1L5.5 3.5M0.5 5.5L3 8L5.5 5.5" fill="none" stroke="#d8d8d8" stroke-width="1.1"/></svg>
<div style="left:609px;top:742.54px;font:bold 9.5px 'Liberation Sans', sans-serif;color:#e2e2e2;white-space:nowrap;line-height:normal;">Zeichen</div>
<svg style="position:absolute;left:783px;top:745px;" width="16" height="8" viewBox="0 0 16 8"><path d="M0 2H4L2 4.5Z" fill="#d8d8d8"/><path d="M6 0.5H15M6 2.5H15M6 4.5H15M6 6.5H15" stroke="#d8d8d8"/></svg>
<div style="left:601px;top:764px;width:182px;height:15px;background:linear-gradient(#949494,#8a8a8a);border:1px solid #2e2e2e;box-sizing:border-box"></div>
<div style="left:782px;top:764px;width:13px;height:15px;background:#6a6a6a;border:1px solid #2e2e2e;box-sizing:border-box"></div>
<svg style="position:absolute;left:782px;top:764px;" width="13" height="15" viewBox="0 0 13 15"><path d="M2.5 5.5H10.5L6.5 10.5Z" fill="#8e8e8e"/></svg>
<svg style="position:absolute;left:605px;top:766px;" width="14" height="11" viewBox="0 0 14 11"><circle cx="6" cy="5" r="3.5" fill="none" stroke="#6a6a6a" stroke-width="1.2"/><path d="M8.5 7.5L11 10M10 10H14" stroke="#6a6a6a" stroke-width="1.2"/></svg>
<div style="left:623px;top:765.37px;font:normal 8.9px 'Liberation Sans', sans-serif;color:#4e4e4e;white-space:nowrap;line-height:normal;">Times New Roman</div>
<div style="left:782px;top:764px;width:14px;height:15px;background:#6a6a6a;border:1px solid #2e2e2e;box-sizing:border-box"></div>
<svg style="position:absolute;left:782px;top:764px;" width="14" height="15" viewBox="0 0 14 15"><path d="M3.0 5.5H11.0L7.0 10.5Z" fill="#8e8e8e"/></svg>
<div style="left:601px;top:785px;width:182px;height:15px;background:linear-gradient(#949494,#8a8a8a);border:1px solid #2e2e2e;box-sizing:border-box"></div>
<div style="left:604px;top:787.20px;font:normal 8.9px 'Liberation Sans', sans-serif;color:#4e4e4e;white-space:nowrap;line-height:normal;">Regular</div>
<div style="left:782px;top:785px;width:13px;height:15px;background:#6a6a6a;border:1px solid #2e2e2e;box-sizing:border-box"></div>
<svg style="position:absolute;left:782px;top:785px;" width="13" height="15" viewBox="0 0 13 15"><path d="M2.5 5.5H10.5L6.5 10.5Z" fill="#8e8e8e"/></svg>
<div style="left:782px;top:785px;width:14px;height:15px;background:#6a6a6a;border:1px solid #2e2e2e;box-sizing:border-box"></div>
<svg style="position:absolute;left:782px;top:785px;" width="14" height="15" viewBox="0 0 14 15"><path d="M3.0 5.5H11.0L7.0 10.5Z" fill="#8e8e8e"/></svg>
<div style="left:599px;top:805px;width:199px;height:1px;background:#393939"></div>
<div style="left:599px;top:806px;width:199px;height:1px;background:#5c5c5c"></div>
<div style="left:598px;top:816.33px;font:normal 10px 'Liberation Serif', serif;color:#d8d8d8;white-space:nowrap;line-height:normal;">T</div>
<div style="left:602.5px;top:810.52px;font:normal 16px 'Liberation Serif', serif;color:#d8d8d8;white-space:nowrap;line-height:normal;">T</div>
<div style="left:620px;top:813px;width:13px;height:14px;background:#555;border:1px solid #2e2e2e;box-sizing:border-box"></div>
<svg style="position:absolute;left:620px;top:813px;" width="13" height="14" viewBox="0 0 13 14"><path d="M3.0 5.5L6.5 2.0L10.0 5.5Z" fill="#7a7a7a"/><path d="M3.0 8.5L6.5 12.0L10.0 8.5Z" fill="#7a7a7a"/><path d="M2 7.0H11" stroke="#2e2e2e"/></svg>
<div style="left:635px;top:813px;width:44px;height:14px;background:linear-gradient(#949494,#8a8a8a);border:1px solid #2e2e2e;box-sizing:border-box"></div>
<div style="left:638px;top:814.70px;font:normal 8.9px 'Liberation Sans', sans-serif;color:#4e4e4e;white-space:nowrap;line-height:normal;">12 Pt</div>
<div style="left:678px;top:813px;width:13px;height:14px;background:#6a6a6a;border:1px solid #2e2e2e;box-sizing:border-box"></div>
<svg style="position:absolute;left:678px;top:813px;" width="13" height="14" viewBox="0 0 13 14"><path d="M2.5 5.0H10.5L6.5 10.0Z" fill="#8e8e8e"/></svg>
<svg style="position:absolute;left:698px;top:810px;" width="20" height="19" viewBox="0 0 20 19"><text x="10" y="8" font-family="Liberation Sans" font-size="9" fill="#d8d8d8" text-anchor="middle">A</text><path d="M6 8.5H14M6 17.5H14" stroke="#d8d8d8"/><text x="12" y="17" font-family="Liberation Sans" font-size="9" fill="#d8d8d8" text-anchor="middle">A</text><path d="M3 9V18M1 11L3 9L5 11M1 16L3 18L5 16" fill="none" stroke="#d8d8d8"/></svg>
<div style="left:720px;top:813px;width:13px;height:14px;background:#555;border:1px solid #2e2e2e;box-sizing:border-box"></div>
<svg style="position:absolute;left:720px;top:813px;" width="13" height="14" viewBox="0 0 13 14"><path d="M3.0 5.5L6.5 2.0L10.0 5.5Z" fill="#7a7a7a"/><path d="M3.0 8.5L6.5 12.0L10.0 8.5Z" fill="#7a7a7a"/><path d="M2 7.0H11" stroke="#2e2e2e"/></svg>
<div style="left:734px;top:813px;width:50px;height:14px;background:linear-gradient(#949494,#8a8a8a);border:1px solid #2e2e2e;box-sizing:border-box"></div>
<div style="left:737px;top:814.70px;font:normal 8.9px 'Liberation Sans', sans-serif;color:#4e4e4e;white-space:nowrap;line-height:normal;">(14,4 Pt)</div>
<div style="left:783px;top:813px;width:13px;height:14px;background:#6a6a6a;border:1px solid #2e2e2e;box-sizing:border-box"></div>
<svg style="position:absolute;left:783px;top:813px;" width="13" height="14" viewBox="0 0 13 14"><path d="M2.5 5.0H10.5L6.5 10.0Z" fill="#8e8e8e"/></svg>
<div style="left:598px;top:833.50px;font:normal 11.5px 'Liberation Sans', sans-serif;color:#d8d8d8;white-space:nowrap;line-height:normal;letter-spacing:-2.5px">V/A</div>
<svg style="position:absolute;left:603px;top:846px;" width="14" height="5" viewBox="0 0 14 5"><path d="M1 2.5H13M1 2.5L4 0.5M1 2.5L4 4.5" stroke="#d8d8d8" fill="none"/></svg>
<div style="left:620px;top:834px;width:13px;height:14px;background:#555;border:1px solid #2e2e2e;box-sizing:border-box"></div>
<svg style="position:absolute;left:620px;top:834px;" width="13" height="14" viewBox="0 0 13 14"><path d="M3.0 5.5L6.5 2.0L10.0 5.5Z" fill="#7a7a7a"/><path d="M3.0 8.5L6.5 12.0L10.0 8.5Z" fill="#7a7a7a"/><path d="M2 7.0H11" stroke="#2e2e2e"/></svg>
<div style="left:635px;top:834px;width:44px;height:14px;background:linear-gradient(#949494,#8a8a8a);border:1px solid #2e2e2e;box-sizing:border-box"></div>
<div style="left:638px;top:835.70px;font:normal 8.9px 'Liberation Sans', sans-serif;color:#4e4e4e;white-space:nowrap;line-height:normal;">Metrisch</div>
<div style="left:678px;top:834px;width:13px;height:14px;background:#6a6a6a;border:1px solid #2e2e2e;box-sizing:border-box"></div>
<svg style="position:absolute;left:678px;top:834px;" width="13" height="14" viewBox="0 0 13 14"><path d="M2.5 5.0H10.5L6.5 10.0Z" fill="#8e8e8e"/></svg>
<svg style="position:absolute;left:697px;top:831px;" width="21" height="20" viewBox="0 0 21 20"><rect x="1" y="0" width="19" height="12" fill="#8a8a8a"/><text x="10.5" y="10.5" font-family="Liberation Sans" font-weight="bold" font-size="11" fill="#222" text-anchor="middle">VA</text><path d="M1 16.5H20M1 16.5L4 14.5M1 16.5L4 18.5M20 16.5L17 14.5M20 16.5L17 18.5" stroke="#d8d8d8" fill="none"/></svg>
<div style="left:720px;top:834px;width:13px;height:14px;background:#555;border:1px solid #2e2e2e;box-sizing:border-box"></div>
<svg style="position:absolute;left:720px;top:834px;" width="13" height="14" viewBox="0 0 13 14"><path d="M3.0 5.5L6.5 2.0L10.0 5.5Z" fill="#7a7a7a"/><path d="M3.0 8.5L6.5 12.0L10.0 8.5Z" fill="#7a7a7a"/><path d="M2 7.0H11" stroke="#2e2e2e"/></svg>
<div style="left:734px;top:834px;width:50px;height:14px;background:linear-gradient(#949494,#8a8a8a);border:1px solid #2e2e2e;box-sizing:border-box"></div>
<div style="left:737px;top:835.70px;font:normal 8.9px 'Liberation Sans', sans-serif;color:#4e4e4e;white-space:nowrap;line-height:normal;">0</div>
<div style="left:783px;top:834px;width:13px;height:14px;background:#6a6a6a;border:1px solid #2e2e2e;box-sizing:border-box"></div>
<svg style="position:absolute;left:783px;top:834px;" width="13" height="14" viewBox="0 0 13 14"><path d="M2.5 5.0H10.5L6.5 10.0Z" fill="#8e8e8e"/></svg>
<div style="left:599px;top:853px;width:199px;height:1px;background:#393939"></div>
<div style="left:599px;top:854px;width:199px;height:1px;background:#5c5c5c"></div>
<svg style="position:absolute;left:598px;top:859px;" width="7" height="18" viewBox="0 0 7 18"><path d="M3.5 1V16M1 3.5L3.5 1L6 3.5M1 13.5L3.5 16L6 13.5" fill="none" stroke="#d8d8d8"/></svg>
<div style="left:604px;top:857.31px;font:normal 17px 'Liberation Serif', serif;color:#d8d8d8;white-space:nowrap;line-height:normal;">T</div>
<div style="left:620px;top:861px;width:13px;height:14px;background:#555;border:1px solid #2e2e2e;box-sizing:border-box"></div>
<svg style="position:absolute;left:620px;top:861px;" width="13" height="14" viewBox="0 0 13 14"><path d="M3.0 5.5L6.5 2.0L10.0 5.5Z" fill="#7a7a7a"/><path d="M3.0 8.5L6.5 12.0L10.0 8.5Z" fill="#7a7a7a"/><path d="M2 7.0H11" stroke="#2e2e2e"/></svg>
<div style="left:635px;top:861px;width:44px;height:14px;background:linear-gradient(#949494,#8a8a8a);border:1px solid #2e2e2e;box-sizing:border-box"></div>
<div style="left:638px;top:862.70px;font:normal 8.9px 'Liberation Sans', sans-serif;color:#4e4e4e;white-space:nowrap;line-height:normal;">100 %</div>
<div style="left:678px;top:861px;width:13px;height:14px;background:#6a6a6a;border:1px solid #2e2e2e;box-sizing:border-box"></div>
<svg style="position:absolute;left:678px;top:861px;" width="13" height="14" viewBox="0 0 13 14"><path d="M2.5 5.0H10.5L6.5 10.0Z" fill="#8e8e8e"/></svg>
<div style="left:698px;top:854.81px;font:bold 17px 'Liberation Serif', serif;color:#d8d8d8;white-space:nowrap;line-height:normal;">T</div>
<svg style="position:absolute;left:697px;top:873px;" width="22" height="7" viewBox="0 0 22 7"><path d="M1 3.5H21M1 3.5L4 1M1 3.5L4 6M21 3.5L18 1M21 3.5L18 6" stroke="#d8d8d8" fill="none"/></svg>
<div style="left:720px;top:861px;width:13px;height:14px;background:#555;border:1px solid #2e2e2e;box-sizing:border-box"></div>
<svg style="position:absolute;left:720px;top:861px;" width="13" height="14" viewBox="0 0 13 14"><path d="M3.0 5.5L6.5 2.0L10.0 5.5Z" fill="#7a7a7a"/><path d="M3.0 8.5L6.5 12.0L10.0 8.5Z" fill="#7a7a7a"/><path d="M2 7.0H11" stroke="#2e2e2e"/></svg>
<div style="left:734px;top:861px;width:50px;height:14px;background:linear-gradient(#949494,#8a8a8a);border:1px solid #2e2e2e;box-sizing:border-box"></div>
<div style="left:737px;top:862.70px;font:normal 8.9px 'Liberation Sans', sans-serif;color:#4e4e4e;white-space:nowrap;line-height:normal;">100 %</div>
<div style="left:783px;top:861px;width:13px;height:14px;background:#6a6a6a;border:1px solid #2e2e2e;box-sizing:border-box"></div>
<svg style="position:absolute;left:783px;top:861px;" width="13" height="14" viewBox="0 0 13 14"><path d="M2.5 5.0H10.5L6.5 10.0Z" fill="#8e8e8e"/></svg>
<div style="left:599px;top:879.39px;font:normal 12px 'Liberation Sans', sans-serif;color:#d8d8d8;white-space:nowrap;line-height:normal;">A</div>
<div style="left:607px;top:878.76px;font:normal 8px 'Liberation Sans', sans-serif;color:#d8d8d8;white-space:nowrap;line-height:normal;">a</div>
<svg style="position:absolute;left:598px;top:891px;" width="20" height="9" viewBox="0 0 20 9"><path d="M1 1H9" stroke="#d8d8d8"/><path d="M13.5 8V2M11.5 4L13.5 2L15.5 4" stroke="#d8d8d8" fill="none"/></svg>
<div style="left:620px;top:882px;width:13px;height:14px;background:#555;border:1px solid #2e2e2e;box-sizing:border-box"></div>
<svg style="position:absolute;left:620px;top:882px;" width="13" height="14" viewBox="0 0 13 14"><path d="M3.0 5.5L6.5 2.0L10.0 5.5Z" fill="#7a7a7a"/><path d="M3.0 8.5L6.5 12.0L10.0 8.5Z" fill="#7a7a7a"/><path d="M2 7.0H11" stroke="#2e2e2e"/></svg>
<div style="left:635px;top:882px;width:56px;height:14px;background:linear-gradient(#949494,#8a8a8a);border:1px solid #2e2e2e;box-sizing:border-box"></div>
<div style="left:638px;top:883.70px;font:normal 8.9px 'Liberation Sans', sans-serif;color:#4e4e4e;white-space:nowrap;line-height:normal;">0 Pt</div>
<div style="left:699px;top:878.31px;font:bold 17px 'Liberation Serif', serif;color:#d8d8d8;white-space:nowrap;line-height:normal;"><i>T</i></div>
<div style="left:720px;top:882px;width:13px;height:14px;background:#555;border:1px solid #2e2e2e;box-sizing:border-box"></div>
<svg style="position:absolute;left:720px;top:882px;" width="13" height="14" viewBox="0 0 13 14"><path d="M3.0 5.5L6.5 2.0L10.0 5.5Z" fill="#7a7a7a"/><path d="M3.0 8.5L6.5 12.0L10.0 8.5Z" fill="#7a7a7a"/><path d="M2 7.0H11" stroke="#2e2e2e"/></svg>
<div style="left:734px;top:882px;width:62px;height:14px;background:linear-gradient(#949494,#8a8a8a);border:1px solid #2e2e2e;box-sizing:border-box"></div>
<div style="left:737px;top:883.70px;font:normal 8.9px 'Liberation Sans', sans-serif;color:#4e4e4e;white-space:nowrap;line-height:normal;">0°</div>
<div style="left:599px;top:901px;width:199px;height:1px;background:#393939"></div>
<div style="left:599px;top:902px;width:199px;height:1px;background:#5c5c5c"></div>
<div style="left:604px;top:910.07px;font:normal 8.9px 'Liberation Sans', sans-serif;color:#d2d2d2;white-space:nowrap;line-height:normal;">Sprache:</div>
<div style="left:646px;top:909px;width:137px;height:14px;background:#4a4a4a;border:1px solid #3c3c3c;box-sizing:border-box"></div>
<div style="left:648px;top:910.70px;font:normal 8.9px 'Liberation Sans', sans-serif;color:#6a6a6a;white-space:nowrap;line-height:normal;">Deutsch: 2006 Rechtschreibr...</div>
<div style="left:782px;top:909px;width:14px;height:14px;background:#555;border:1px solid #2e2e2e;box-sizing:border-box"></div>
<svg style="position:absolute;left:782px;top:909px;" width="14" height="14" viewBox="0 0 14 14"><path d="M3.0 5.0H11.0L7.0 10.0Z" fill="#7c7c7c"/></svg>
<div style="left:1373px;top:664px;width:209px;height:270px;background:#4a4a4a;border:1px solid #242424;border-radius:3px 3px 0 0;box-sizing:border-box;overflow:hidden"></div>
<div style="left:1374px;top:665px;width:207px;height:13px;background:#2f2f2f;border-radius:2px 2px 0 0"></div>
<svg style="position:absolute;left:1553px;top:669px;" width="8" height="5" viewBox="0 0 8 5"><path d="M4 0V5L0 2.5Z M8 0V5L4 2.5Z" fill="#cfcfcf"/></svg>
<svg style="position:absolute;left:1570px;top:668px;" width="7" height="7" viewBox="0 0 7 7"><path d="M1 1L6 6M6 1L1 6" stroke="#d8d8d8" stroke-width="1.6"/></svg>
<div style="left:1374px;top:678px;width:207px;height:17px;background:#383838"></div>
<div style="left:1374px;top:694px;width:207px;height:1px;background:#2a2a2a"></div>
<div style="left:1374px;top:678px;width:54px;height:17px;background:#4a4a4a"></div>
<div style="left:1428px;top:678px;width:1px;height:17px;background:#2a2a2a"></div>
<svg style="position:absolute;left:1380px;top:683px;" width="6" height="9" viewBox="0 0 6 9"><path d="M0.5 3.5L3 1L5.5 3.5M0.5 5.5L3 8L5.5 5.5" fill="none" stroke="#d8d8d8" stroke-width="1.1"/></svg>
<div style="left:1388px;top:681.54px;font:bold 9.5px 'Liberation Sans', sans-serif;color:#e2e2e2;white-space:nowrap;line-height:normal;">Kontur</div>
<svg style="position:absolute;left:1562px;top:684px;" width="16" height="8" viewBox="0 0 16 8"><path d="M0 2H4L2 4.5Z" fill="#d8d8d8"/><path d="M6 0.5H15M6 2.5H15M6 4.5H15M6 6.5H15" stroke="#d8d8d8"/></svg>
<div style="right:458px;top:705.57px;font:normal 8.9px 'Liberation Sans', sans-serif;color:#d2d2d2;white-space:nowrap;line-height:normal;">Stärke:</div>
<div style="left:1466px;top:704px;width:14px;height:15px;background:#5d5d5d;border:1px solid #2e2e2e;box-sizing:border-box"></div>
<svg style="position:absolute;left:1466px;top:704px;" width="14" height="15" viewBox="0 0 14 15"><path d="M3.5 6.0L7.0 2.5L10.5 6.0Z" fill="#dcdcdc"/><path d="M3.5 9.0L7.0 12.5L10.5 9.0Z" fill="#dcdcdc"/><path d="M2 7.5H12" stroke="#2e2e2e"/></svg>
<div style="left:1482px;top:704px;width:44px;height:15px;background:linear-gradient(#c2c2c2,#b4b4b4);border:1px solid #2e2e2e;box-sizing:border-box"></div>
<div style="left:1485px;top:706.20px;font:normal 8.9px 'Liberation Sans', sans-serif;color:#121212;white-space:nowrap;line-height:normal;">0 Pt</div>
<div style="left:1525px;top:704px;width:14px;height:15px;background:#5d5d5d;border:1px solid #2e2e2e;box-sizing:border-box"></div>
<svg style="position:absolute;left:1525px;top:704px;" width="14" height="15" viewBox="0 0 14 15"><path d="M3.0 5.5H11.0L7.0 10.5Z" fill="#dcdcdc"/></svg>
<div style="right:458px;top:728.57px;font:normal 8.9px 'Liberation Sans', sans-serif;color:#d2d2d2;white-space:nowrap;line-height:normal;">Gehrungsgrenze:</div>
<div style="left:1466px;top:727px;width:14px;height:15px;background:#5d5d5d;border:1px solid #2e2e2e;box-sizing:border-box"></div>
<svg style="position:absolute;left:1466px;top:727px;" width="14" height="15" viewBox="0 0 14 15"><path d="M3.5 6.0L7.0 2.5L10.5 6.0Z" fill="#dcdcdc"/><path d="M3.5 9.0L7.0 12.5L10.5 9.0Z" fill="#dcdcdc"/><path d="M2 7.5H12" stroke="#2e2e2e"/></svg>
<div style="left:1482px;top:727px;width:40px;height:15px;background:linear-gradient(#c2c2c2,#b4b4b4);border:1px solid #2e2e2e;box-sizing:border-box"></div>
<div style="left:1485px;top:729.20px;font:normal 8.9px 'Liberation Sans', sans-serif;color:#121212;white-space:nowrap;line-height:normal;">10</div>
<div style="left:1528px;top:729.07px;font:normal 8.9px 'Liberation Sans', sans-serif;color:#c8c8c8;white-space:nowrap;line-height:normal;">x</div>
<div style="right:458px;top:750.57px;font:normal 8.9px 'Liberation Sans', sans-serif;color:#d2d2d2;white-space:nowrap;line-height:normal;">Abschluss:</div>
<div style="left:1468px;top:749px;width:15px;height:16px;background:#3b3b3b"></div>
<svg style="position:absolute;left:1469px;top:750px;" width="14" height="14" viewBox="0 0 14 14"><rect x="3" y="2" width="9" height="10" fill="#cfcfcf"/><path d="M0 7H7" stroke="#222" stroke-width="1.3"/><rect x="6" y="6" width="2" height="2" fill="#222"/></svg>
<svg style="position:absolute;left:1487px;top:750px;" width="14" height="14" viewBox="0 0 14 14"><path d="M13 2H6A5 5 0 0 0 6 12H13Z" fill="#cfcfcf"/><path d="M6 7H13" stroke="#222" stroke-width="1.3"/></svg>
<svg style="position:absolute;left:1503px;top:750px;" width="14" height="14" viewBox="0 0 14 14"><rect x="1" y="2" width="12" height="10" fill="#cfcfcf"/><path d="M6 7H13" stroke="#222" stroke-width="1.3"/></svg>
<div style="right:458px;top:774.07px;font:normal 8.9px 'Liberation Sans', sans-serif;color:#d2d2d2;white-space:nowrap;line-height:normal;">Ecke:</div>
<div style="left:1468px;top:772px;width:15px;height:16px;background:#3b3b3b"></div>
<svg style="position:absolute;left:1469px;top:773px;" width="14" height="14" viewBox="0 0 14 14"><path d="M1 1H13V6H6V13H1Z" fill="#cfcfcf"/><path d="M9 9V14M9 9H14" stroke="#222" stroke-width="1.2"/></svg>
<svg style="position:absolute;left:1486px;top:773px;" width="14" height="14" viewBox="0 0 14 14"><path d="M5 1H13V6H6V13H1V5Z" fill="#cfcfcf"/><path d="M9 9V14M9 9H14" stroke="#222" stroke-width="1.2"/></svg>
<svg style="position:absolute;left:1503px;top:773px;" width="14" height="14" viewBox="0 0 14 14"><path d="M5 1H13V6H6V13H1V5A4 4 0 0 1 5 1Z" fill="#cfcfcf"/><path d="M9 9V14M9 9H14" stroke="#222" stroke-width="1.2"/></svg>
<div style="left:1380px;top:794px;width:196px;height:1px;background:#393939"></div>
<div style="left:1380px;top:795px;width:196px;height:1px;background:#5c5c5c"></div>
<div style="right:458px;top:804.07px;font:normal 8.9px 'Liberation Sans', sans-serif;color:#d2d2d2;white-space:nowrap;line-height:normal;">Kontur ausrichten:</div>
<div style="left:1468px;top:802px;width:15px;height:16px;background:#454545"></div>
<svg style="position:absolute;left:1469px;top:803px;" width="14" height="14" viewBox="0 0 14 14"><path d="M3 1V11H13" fill="none" stroke="#8a8a8a" stroke-width="2"/><path d="M1 1V13H13" fill="none" stroke="#6a6a6a"/></svg>
<svg style="position:absolute;left:1486px;top:803px;" width="14" height="14" viewBox="0 0 14 14"><path d="M3 1V11H13" fill="none" stroke="#8a8a8a" stroke-width="2"/><path d="M1 1V13H13" fill="none" stroke="#6a6a6a"/></svg>
<svg style="position:absolute;left:1503px;top:803px;" width="14" height="14" viewBox="0 0 14 14"><path d="M3 1V11H13" fill="none" stroke="#8a8a8a" stroke-width="2"/><path d="M1 1V13H13" fill="none" stroke="#6a6a6a"/></svg>
<div style="left:1380px;top:822px;width:196px;height:1px;background:#393939"></div>
<div style="left:1380px;top:823px;width:196px;height:1px;background:#5c5c5c"></div>
<div style="right:458px;top:833.07px;font:normal 8.9px 'Liberation Sans', sans-serif;color:#d2d2d2;white-space:nowrap;line-height:normal;">Typ:</div>
<div style="left:1467px;top:831px;width:95px;height:16px;background:#a9a9a9;border:1px solid #2e2e2e;box-sizing:border-box"></div>
<div style="left:1469px;top:834px;width:89px;height:9px;background:#000"></div>
<div style="left:1561px;top:831px;width:14px;height:16px;background:#8a8a8a;border:1px solid #2e2e2e;box-sizing:border-box"></div>
<svg style="position:absolute;left:1561px;top:831px;" width="14" height="16" viewBox="0 0 14 16"><path d="M3.0 6.0H11.0L7.0 11.0Z" fill="#f0f0f0"/></svg>
<div style="right:458px;top:853.07px;font:normal 8.9px 'Liberation Sans', sans-serif;color:#d2d2d2;white-space:nowrap;line-height:normal;">Anfang:</div>
<div style="left:1467px;top:851px;width:95px;height:16px;background:linear-gradient(#c2c2c2,#b4b4b4);border:1px solid #2e2e2e;box-sizing:border-box"></div>
<div style="left:1470px;top:853.70px;font:normal 8.9px 'Liberation Sans', sans-serif;color:#121212;white-space:nowrap;line-height:normal;">Ohne</div>
<div style="left:1561px;top:851px;width:14px;height:16px;background:#8a8a8a;border:1px solid #2e2e2e;box-sizing:border-box"></div>
<svg style="position:absolute;left:1561px;top:851px;" width="14" height="16" viewBox="0 0 14 16"><path d="M3.0 6.0H11.0L7.0 11.0Z" fill="#f0f0f0"/></svg>
<div style="right:458px;top:873.07px;font:normal 8.9px 'Liberation Sans', sans-serif;color:#d2d2d2;white-space:nowrap;line-height:normal;">Ende:</div>
<div style="left:1467px;top:871px;width:95px;height:16px;background:linear-gradient(#c2c2c2,#b4b4b4);border:1px solid #2e2e2e;box-sizing:border-box"></div>
<div style="left:1470px;top:873.70px;font:normal 8.9px 'Liberation Sans', sans-serif;color:#121212;white-space:nowrap;line-height:normal;">Ohne</div>
<div style="left:1561px;top:871px;width:14px;height:16px;background:#8a8a8a;border:1px solid #2e2e2e;box-sizing:border-box"></div>
<svg style="position:absolute;left:1561px;top:871px;" width="14" height="16" viewBox="0 0 14 16"><path d="M3.0 6.0H11.0L7.0 11.0Z" fill="#f0f0f0"/></svg>
<div style="right:458px;top:893.07px;font:normal 8.9px 'Liberation Sans', sans-serif;color:#d2d2d2;white-space:nowrap;line-height:normal;">Farbe für Lücke:</div>
<div style="left:1467px;top:891px;width:95px;height:16px;background:linear-gradient(#c2c2c2,#b4b4b4);border:1px solid #2e2e2e;box-sizing:border-box"></div>
<div style="left:1561px;top:891px;width:14px;height:16px;background:#7a7a7a;border:1px solid #2e2e2e;box-sizing:border-box"></div>
<svg style="position:absolute;left:1561px;top:891px;" width="14" height="16" viewBox="0 0 14 16"><path d="M3.0 6.0H11.0L7.0 11.0Z" fill="#9a9a9a"/></svg>
<svg style="position:absolute;left:1469px;top:893px;" width="12" height="12" viewBox="0 0 12 12"><rect x="0.5" y="0.5" width="11" height="11" fill="#fff" stroke="#555"/><path d="M1 11L11 1" stroke="#e0161e" stroke-width="2"/></svg>
<div style="left:1485px;top:893.07px;font:normal 8.9px 'Liberation Sans', sans-serif;color:#3a3a3a;white-space:nowrap;line-height:normal;">[Ohne]</div>
<div style="right:458px;top:913.07px;font:normal 8.9px 'Liberation Sans', sans-serif;color:#d2d2d2;white-space:nowrap;line-height:normal;">Farbton für Lücke:</div>
<div style="left:1467px;top:911px;width:34px;height:15px;background:#7a7a7a;border:1px solid #3a3a3a;box-sizing:border-box"></div>
<div style="left:1500px;top:911px;width:14px;height:15px;background:#5a5a5a;border:1px solid #2e2e2e;box-sizing:border-box"></div>
<svg style="position:absolute;left:1500px;top:911px;" width="14" height="15" viewBox="0 0 14 15"><path d="M5.0 3.5V11.5L10.0 7.5Z" fill="#8a8a8a"/></svg>
</body></html>
